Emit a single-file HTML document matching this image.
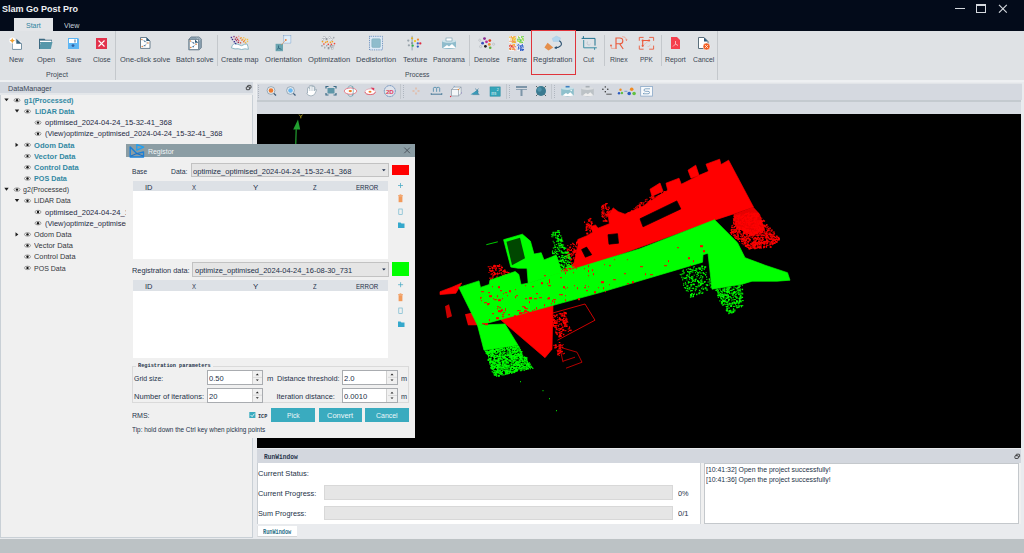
<!DOCTYPE html>
<html><head><meta charset="utf-8">
<style>
*{margin:0;padding:0;box-sizing:border-box}
html,body{width:1024px;height:553px;overflow:hidden;background:#e8eaed;font-family:"Liberation Sans",sans-serif;font-size:7.4px;color:#3b4654;position:relative}
.a{position:absolute}
.t{position:absolute;white-space:nowrap;line-height:1;transform-origin:0 0}
svg{position:absolute;overflow:visible}
.sep{position:absolute;width:1px;background:#c4c8cc}
.lbl{position:absolute;white-space:nowrap;line-height:1;font-size:7.3px;color:#4a5866;top:55px}
.tree{position:absolute;white-space:nowrap;line-height:1;font-size:7.3px}
.g1{color:#3d8fa6;font-weight:bold}
.nv{color:#2a3552}
.g2{color:#3c3f44}
.dl{position:absolute;white-space:nowrap;line-height:1;font-size:7.3px;color:#2f3a4c}
.btn{position:absolute;background:#3aabbf;color:#eef8fa;font-size:7.3px;line-height:13px;text-align:center;height:13px;top:408px}
.spin{position:absolute;background:#fff;border:1px solid #a9acb0;height:15px}
.spin .ar{position:absolute;right:0;top:0;width:10px;height:13px;background:#f0f0f0;border-left:1px solid #d0d0d0}
.mono{font-family:"Liberation Mono",monospace}
</style></head><body>
<!-- title bar -->
<div class="a" style="left:0;top:0;width:1024px;height:31px;background:#030b1a"></div>
<svg style="left:0;top:0" width="1024" height="31">
 <g stroke="#d5d9de" fill="none" stroke-width="1">
  <line x1="955" y1="8.5" x2="965" y2="8.5"/>
  <rect x="976.5" y="4.5" width="9" height="8"/>
  <line x1="976.5" y1="5.5" x2="985.5" y2="5.5"/>
  <line x1="999" y1="4.8" x2="1006.8" y2="12.6" stroke-width="1.15"/>
  <line x1="1006.8" y1="4.8" x2="999" y2="12.6" stroke-width="1.15"/>
 </g>
</svg>
<div class="a" style="left:14px;top:18px;width:39px;height:13px;background:#e3e5e8"></div>

<!-- ribbon -->
<div class="a" style="left:0;top:31px;width:1024px;height:49px;background:#dfe2e5"></div>
<div class="a" style="left:0;top:80.3px;width:1024px;height:2.2px;background:#eef0f2"></div>
<div class="sep" style="left:115px;top:31px;height:49px"></div>
<div class="sep" style="left:217px;top:35px;height:31px"></div>
<div class="sep" style="left:469px;top:35px;height:31px"></div>
<div class="sep" style="left:604px;top:35px;height:31px"></div>
<div class="sep" style="left:661px;top:35px;height:31px"></div>
<div class="sep" style="left:717px;top:31px;height:49px"></div>

<div class="a" style="left:531px;top:30px;width:45px;height:45px;border:1px solid #e0333b"></div>

<svg style="left:0;top:0" width="1024" height="82">
 <!-- New -->
 <path d="M12.5 43 v6.2 h9 v-5.7" fill="#fff" stroke="#56778c" stroke-width="1"/>
 <rect x="12.6" y="41.5" width="8.6" height="7.3" fill="#fff"/>
 <path d="M16.3 38.7 l5.5 5 h-5.5z" fill="#3a6580"/>
 <circle cx="12.3" cy="40.6" r="3" fill="#fff"/>
 <path d="M12.3 37.9 l0.9 1.8 l1.8 0.9 l-1.8 0.9 l-0.9 1.8 l-0.9 -1.8 l-1.8 -0.9 l1.8 -0.9z" fill="#f0a030"/>
 <!-- Open -->
 <path d="M39 38.7 h5.5 l1 1 h6.5 v3 h-13z" fill="#3d6a82"/>
 <rect x="40" y="40.6" width="11.5" height="1.5" fill="#fff"/>
 <path d="M40.8 42 h11.7 l-1.7 7 h-11.8z" fill="#5797aa"/>
 <path d="M39.5 40 v9" stroke="#3d6a82" stroke-width="1"/>
 <!-- Save -->
 <path d="M68 38 h10 l1 1 v10 h-11z" fill="#5db6f4"/>
 <rect x="69" y="39" width="8" height="4" fill="#fff"/>
 <rect x="74.5" y="39.5" width="1" height="3" fill="#4a6a90"/>
 <circle cx="73" cy="45.6" r="1.4" fill="#2f5f9f"/>
 <!-- Close -->
 <rect x="96" y="38" width="11" height="11" fill="#e2324c"/>
 <path d="M98.5 40.5 l6 6 M104.5 40.5 l-6 6" stroke="#fff" stroke-width="1.1"/>
 <!-- One-click solve -->
 <path d="M140.5 37.5 h6 l3.5 3.5 v7.4 h-9.5z" fill="#fff" stroke="#5e7484" stroke-width="0.9"/>
 <path d="M146.3 37.2 l3.8 3.7 h-3.8z" fill="#2f5a78"/>
 <path d="M142 39.6 l2.8 1.8 l3 1.4 l-3.4 2.8 l-2.4 1.1" stroke="#7a9ab0" stroke-width="0.5" fill="none"/>
 <circle cx="141.8" cy="39.5" r="0.75" fill="#f08a40"/><circle cx="148" cy="42.9" r="0.75" fill="#f08a40"/><circle cx="142.2" cy="46.6" r="0.75" fill="#f08a40"/>
 <path d="M144 40.6 l1.8 0.4 l-1 1.3z M143.7 45.8 l1.8 -1.1 l-0.3 1.7z" fill="#2f5a88"/>
 <!-- Batch solve -->
 <path d="M188.8 39.2 l2.3 -2.3 h8 l2.3 2.3 v8.5 l-2.3 2.2 h-10.3z" fill="#8aa0b0" stroke="#5e7484" stroke-width="0.7"/>
 <path d="M196.5 37.5 l3.5 3.5 M198 37.3 l2.8 2.8" stroke="#c8d2da" stroke-width="0.5"/>
 <rect x="189.2" y="39.4" width="9.2" height="10.2" fill="#fff" stroke="#5e7484" stroke-width="0.7"/>
 <path d="M195 39.4 l3.4 3.4 h-3.4z" fill="#2f5a78"/>
 <path d="M190.6 41.2 l2.6 1.6 l3 1.2 l-3.2 2.6 l-2.2 1" stroke="#7a9ab0" stroke-width="0.5" fill="none"/>
 <circle cx="190.4" cy="41.1" r="0.75" fill="#f08a40"/><circle cx="196.2" cy="44.3" r="0.75" fill="#f08a40"/><circle cx="190.6" cy="47.6" r="0.75" fill="#f08a40"/>
 <path d="M192.4 42.2 l1.8 0.4 l-1 1.3z M192.2 46.8 l1.8 -1.1 l-0.3 1.7z" fill="#2f5a88"/>
 <!-- Create map -->
 <path d="M231.3 47.8 q1 -3 2.8 -4.2 q3.5 0.3 7.5 2.1 q3 -1.8 5.4 -1.8 q1.2 2.5 1.4 5.4 q-3.5 -1 -6.8 0.2 q-3.5 -1.2 -6.6 -0.6z" fill="#fff" stroke="#7fb0c0" stroke-width="0.9"/>
 <rect x="230.7" y="36.8" width="1.4" height="1.4" fill="#4a3090"/><rect x="231.8" y="38.8" width="1.4" height="1.4" fill="#3a2a80"/><rect x="233.6" y="41.0" width="1.4" height="1.4" fill="#3a3090"/><rect x="234.9" y="42.8" width="1.4" height="1.4" fill="#3a3a90"/><rect x="233.3" y="35.9" width="1.4" height="1.4" fill="#8a3a7a"/><rect x="234.7" y="38.5" width="1.4" height="1.4" fill="#9a3060"/><rect x="235.8" y="39.9" width="1.4" height="1.4" fill="#a03a70"/><rect x="237.6" y="41.7" width="1.4" height="1.4" fill="#a03050"/><rect x="235.8" y="36.8" width="1.4" height="1.4" fill="#d04a4a"/><rect x="236.9" y="38.6" width="1.4" height="1.4" fill="#d04040"/><rect x="238.0" y="39.9" width="1.4" height="1.4" fill="#e06a70"/><rect x="239.8" y="42.1" width="1.4" height="1.4" fill="#d05040"/><rect x="238.0" y="35.7" width="1.4" height="1.4" fill="#f0a0a0"/><rect x="239.8" y="37.7" width="1.4" height="1.4" fill="#f08a40"/><rect x="241.2" y="39.5" width="1.4" height="1.4" fill="#f08a50"/><rect x="243.0" y="41.0" width="1.4" height="1.4" fill="#f07a40"/><rect x="240.5" y="37.0" width="1.4" height="1.4" fill="#f0b050"/><rect x="241.9" y="38.8" width="1.4" height="1.4" fill="#f0a040"/><rect x="243.8" y="39.9" width="1.4" height="1.4" fill="#f0a030"/><rect x="244.8" y="42.1" width="1.4" height="1.4" fill="#f0b040"/><rect x="243.0" y="37.0" width="1.4" height="1.4" fill="#f5c860"/><rect x="244.8" y="38.5" width="1.4" height="1.4" fill="#f5c050"/><rect x="246.8" y="38.8" width="1.4" height="1.4" fill="#f5c040"/><rect x="246.8" y="40.8" width="1.4" height="1.4" fill="#f5c850"/>
 <!-- Orientation -->
 <rect x="283.6" y="35.6" width="7.2" height="7.6" fill="#e0eefa"/>
 <path d="M283.6 35.6 v7.6 M290.8 35.6 v7.6 M283.6 35.6 h7.2 M283.6 43.2 h7.2" stroke="#3a70b0" stroke-width="0.7" stroke-dasharray="0.8 1.2"/>
 <rect x="275.6" y="43.8" width="7.4" height="7.4" fill="#6aa4b0"/>
 <path d="M278.5 45.5 v2.6 l3 1.3 M278.5 48.1 l-1.8 1.6" stroke="#2a6278" stroke-width="0.8" fill="none"/>
 <path d="M281.3 44.8 l4.4 -4.6" stroke="#f08a40" stroke-width="0.8" stroke-dasharray="0.9 0.4"/>
 <circle cx="285.8" cy="40" r="0.9" fill="#f07a30"/>
 <!-- Optimization -->
 <rect x="323.8" y="36.8" width="1.4" height="1.4" fill="#eef0f2" stroke="#8a9098" stroke-width="0.4"/><rect x="329.0" y="36.8" width="1.4" height="1.4" fill="#eef0f2" stroke="#8a9098" stroke-width="0.4"/><rect x="333.4" y="37.1" width="1.4" height="1.4" fill="#eef0f2" stroke="#8a9098" stroke-width="0.4"/><rect x="322.1" y="38.8" width="1.4" height="1.4" fill="#eef0f2" stroke="#8a9098" stroke-width="0.4"/><rect x="325.9" y="38.5" width="1.4" height="1.4" fill="#eef0f2" stroke="#8a9098" stroke-width="0.4"/><rect x="331.4" y="38.8" width="1.4" height="1.4" fill="#eef0f2" stroke="#8a9098" stroke-width="0.4"/><rect x="321.5" y="45.3" width="1.4" height="1.4" fill="#eef0f2" stroke="#8a9098" stroke-width="0.4"/><rect x="326.3" y="45.3" width="1.4" height="1.4" fill="#eef0f2" stroke="#8a9098" stroke-width="0.4"/><rect x="330.0" y="45.7" width="1.4" height="1.4" fill="#eef0f2" stroke="#8a9098" stroke-width="0.4"/><rect x="332.7" y="45.3" width="1.4" height="1.4" fill="#eef0f2" stroke="#8a9098" stroke-width="0.4"/><rect x="324.2" y="47.0" width="1.4" height="1.4" fill="#eef0f2" stroke="#8a9098" stroke-width="0.4"/><rect x="327.9" y="47.7" width="1.4" height="1.4" fill="#eef0f2" stroke="#8a9098" stroke-width="0.4"/><rect x="331.7" y="47.7" width="1.4" height="1.4" fill="#eef0f2" stroke="#8a9098" stroke-width="0.4"/><circle cx="322.5" cy="41.6" r="0.85" fill="#f5a020"/><circle cx="325.6" cy="42.3" r="0.85" fill="#f5a020"/><circle cx="327.3" cy="41.6" r="0.85" fill="#f5a020"/><circle cx="330.4" cy="42.3" r="0.85" fill="#f5a020"/><circle cx="332.4" cy="41.6" r="0.85" fill="#f5a020"/><circle cx="323.9" cy="44" r="0.85" fill="#ee4a3a"/><circle cx="328.3" cy="44.3" r="0.85" fill="#ee4a3a"/><circle cx="331.4" cy="44.3" r="0.85" fill="#ee4a3a"/><circle cx="334.5" cy="43.6" r="0.85" fill="#ee4a3a"/>
 <!-- Dedistortion -->
 <rect x="369.5" y="36.3" width="13" height="13.6" fill="#dde9f5" stroke="#3a6aa8" stroke-width="0.8" stroke-dasharray="0.8 1"/>
 <rect x="371.8" y="38.8" width="8.6" height="8.6" rx="1" fill="#8fbccc" stroke="#7aa8b8" stroke-width="0.5"/>
 <!-- Texture -->
 <line x1="412.1" y1="35.8" x2="412.1" y2="50.4" stroke="#7d98aa" stroke-width="0.8"/>
 <circle cx="408.3" cy="40.6" r="1.15" fill="#9aa4ac"/><circle cx="408.9" cy="45.3" r="1.15" fill="#9aa4ac"/><circle cx="412.1" cy="38.3" r="1.15" fill="#e0b020"/><circle cx="415" cy="41.1" r="1.15" fill="#f0c818"/><circle cx="418" cy="39.6" r="1.15" fill="#f08a30"/><circle cx="412.1" cy="43.2" r="1.15" fill="#8a98a8"/><circle cx="420.3" cy="43.4" r="1.15" fill="#e02a40"/><circle cx="417.8" cy="43.4" r="1.15" fill="#3a60c8"/><circle cx="412.7" cy="45.7" r="1.15" fill="#30b050"/><circle cx="417.8" cy="46.6" r="1.15" fill="#2a58c0"/>
 <!-- Panorama -->
 <path d="M442 41 q7 -2.5 14 0 v7 q-7 2 -14 0z" fill="#8fbccc"/>
 <ellipse cx="449" cy="41" rx="7" ry="1.8" fill="#cfe3ea"/>
 <rect x="446" y="38" width="6" height="3" fill="#fff" stroke="#5a8aa0" stroke-width="0.5"/>
 <path d="M443 48 l4 -3 l2 1.5 l3 -2.5 l4 4z" fill="#fff"/>
 <!-- Denoise -->
 <g><circle cx="484.5" cy="38.6" r="1.4" fill="#8a2a90"/><circle cx="486.5" cy="41.8" r="1.4" fill="#c02a9a"/><circle cx="482.6" cy="43.2" r="1.4" fill="#3a50c0"/><circle cx="489.8" cy="40.6" r="1.4" fill="#e04020"/><circle cx="489.3" cy="44.4" r="1.4" fill="#f08a30"/><circle cx="485.4" cy="46.3" r="1.4" fill="#222"/><circle cx="490.2" cy="47.8" r="1.3" fill="#60b040"/><circle cx="479.8" cy="40.2" r="1.1" fill="none" stroke="#b0b6bc" stroke-width="0.6"/><circle cx="480.6" cy="46.6" r="1.1" fill="none" stroke="#b0b6bc" stroke-width="0.6"/><circle cx="493.6" cy="44.2" r="1.1" fill="none" stroke="#b0b6bc" stroke-width="0.6"/></g>
 <!-- Frame -->
 <rect x="509" y="36" width="7" height="7" fill="#f4f4f4"/><rect x="510.4" y="39.3" width="1.1" height="1.1" fill="#e8d040"/><rect x="514.5" y="38.8" width="1.1" height="1.1" fill="#f0c030"/><rect x="512.6" y="41.5" width="1.1" height="1.1" fill="#f08030"/><rect x="510.6" y="37.4" width="1.1" height="1.1" fill="#f08030"/><rect x="512.2" y="39.3" width="1.1" height="1.1" fill="#f08030"/><rect x="512.8" y="36.9" width="1.1" height="1.1" fill="#f5a020"/><rect x="514.2" y="39.1" width="1.1" height="1.1" fill="#f0c030"/><rect x="513.0" y="36.4" width="1.1" height="1.1" fill="#f0c030"/><rect x="510.8" y="36.2" width="1.1" height="1.1" fill="#e8d040"/><rect x="511.8" y="40.3" width="1.1" height="1.1" fill="#f08030"/><rect x="513.3" y="41.5" width="1.1" height="1.1" fill="#f08030"/><rect x="513.4" y="39.5" width="1.1" height="1.1" fill="#f5a020"/><rect x="514.3" y="36.6" width="1.1" height="1.1" fill="#f5a020"/><rect x="512.0" y="37.5" width="1.1" height="1.1" fill="#f08030"/><rect x="513.7" y="41.1" width="1.1" height="1.1" fill="#f08030"/><rect x="512.0" y="38.3" width="1.1" height="1.1" fill="#e8d040"/><rect x="512.2" y="38.4" width="1.1" height="1.1" fill="#f5a020"/><rect x="514.4" y="40.1" width="1.1" height="1.1" fill="#f0c030"/><rect x="514.1" y="41.9" width="1.1" height="1.1" fill="#f5a020"/><rect x="513.2" y="38.0" width="1.1" height="1.1" fill="#f0c030"/><rect x="513.3" y="37.3" width="1.1" height="1.1" fill="#e8d040"/><rect x="510.7" y="36.4" width="1.1" height="1.1" fill="#f08030"/><rect x="509.5" y="40.8" width="1.1" height="1.1" fill="#f08030"/><rect x="514.4" y="36.1" width="1.1" height="1.1" fill="#f08030"/><rect x="513.6" y="41.2" width="1.1" height="1.1" fill="#f0c030"/><rect x="512.6" y="40.6" width="1.1" height="1.1" fill="#f08030"/><rect x="513.3" y="38.0" width="1.1" height="1.1" fill="#e8d040"/><rect x="512.0" y="42.0" width="1.1" height="1.1" fill="#e8d040"/><rect x="509.0" y="36.6" width="1.1" height="1.1" fill="#f0c030"/><rect x="514.7" y="41.8" width="1.1" height="1.1" fill="#e8d040"/><rect x="512.7" y="36.9" width="1.1" height="1.1" fill="#f0c030"/><rect x="514.9" y="38.0" width="1.1" height="1.1" fill="#e8d040"/><rect x="514.8" y="41.4" width="1.1" height="1.1" fill="#f08030"/><rect x="511.3" y="41.2" width="1.1" height="1.1" fill="#f08030"/><rect x="517" y="36" width="7" height="7" fill="#f4f4f4"/><rect x="520.9" y="39.6" width="1.1" height="1.1" fill="#70d040"/><rect x="520.7" y="41.6" width="1.1" height="1.1" fill="#40c060"/><rect x="519.6" y="40.3" width="1.1" height="1.1" fill="#a0e040"/><rect x="522.6" y="38.6" width="1.1" height="1.1" fill="#40c060"/><rect x="520.1" y="39.3" width="1.1" height="1.1" fill="#70d040"/><rect x="521.7" y="41.9" width="1.1" height="1.1" fill="#40c060"/><rect x="517.1" y="39.7" width="1.1" height="1.1" fill="#a0e040"/><rect x="517.4" y="39.8" width="1.1" height="1.1" fill="#c0e060"/><rect x="519.1" y="41.5" width="1.1" height="1.1" fill="#40c060"/><rect x="521.4" y="36.1" width="1.1" height="1.1" fill="#70d040"/><rect x="522.7" y="36.1" width="1.1" height="1.1" fill="#40c060"/><rect x="518.5" y="38.7" width="1.1" height="1.1" fill="#40c060"/><rect x="518.1" y="37.1" width="1.1" height="1.1" fill="#40c060"/><rect x="522.1" y="37.6" width="1.1" height="1.1" fill="#c0e060"/><rect x="517.6" y="40.9" width="1.1" height="1.1" fill="#a0e040"/><rect x="518.9" y="37.3" width="1.1" height="1.1" fill="#40c060"/><rect x="518.4" y="37.1" width="1.1" height="1.1" fill="#c0e060"/><rect x="520.9" y="36.6" width="1.1" height="1.1" fill="#40c060"/><rect x="522.7" y="40.0" width="1.1" height="1.1" fill="#a0e040"/><rect x="519.6" y="41.1" width="1.1" height="1.1" fill="#a0e040"/><rect x="517.5" y="40.5" width="1.1" height="1.1" fill="#a0e040"/><rect x="522.3" y="38.7" width="1.1" height="1.1" fill="#a0e040"/><rect x="521.7" y="36.2" width="1.1" height="1.1" fill="#a0e040"/><rect x="518.9" y="41.0" width="1.1" height="1.1" fill="#a0e040"/><rect x="522.2" y="38.0" width="1.1" height="1.1" fill="#70d040"/><rect x="521.8" y="38.1" width="1.1" height="1.1" fill="#a0e040"/><rect x="519.5" y="39.1" width="1.1" height="1.1" fill="#40c060"/><rect x="519.8" y="39.8" width="1.1" height="1.1" fill="#40c060"/><rect x="519.5" y="38.5" width="1.1" height="1.1" fill="#c0e060"/><rect x="517.9" y="36.0" width="1.1" height="1.1" fill="#c0e060"/><rect x="520.4" y="41.9" width="1.1" height="1.1" fill="#a0e040"/><rect x="517.2" y="38.7" width="1.1" height="1.1" fill="#40c060"/><rect x="520.3" y="41.3" width="1.1" height="1.1" fill="#70d040"/><rect x="522.1" y="41.8" width="1.1" height="1.1" fill="#70d040"/><rect x="509" y="44" width="7" height="7" fill="#f4f4f4"/><rect x="513.9" y="44.3" width="1.1" height="1.1" fill="#f08a30"/><rect x="514.4" y="49.4" width="1.1" height="1.1" fill="#f06040"/><rect x="509.1" y="48.5" width="1.1" height="1.1" fill="#f08a30"/><rect x="512.0" y="45.4" width="1.1" height="1.1" fill="#f06040"/><rect x="512.1" y="46.5" width="1.1" height="1.1" fill="#f06040"/><rect x="511.0" y="45.5" width="1.1" height="1.1" fill="#f5b040"/><rect x="513.9" y="44.4" width="1.1" height="1.1" fill="#f08a30"/><rect x="510.2" y="47.2" width="1.1" height="1.1" fill="#f06040"/><rect x="510.0" y="48.8" width="1.1" height="1.1" fill="#f08a30"/><rect x="513.9" y="44.0" width="1.1" height="1.1" fill="#f5b040"/><rect x="509.3" y="45.6" width="1.1" height="1.1" fill="#e03a3a"/><rect x="512.7" y="47.1" width="1.1" height="1.1" fill="#f06040"/><rect x="511.8" y="48.7" width="1.1" height="1.1" fill="#f06040"/><rect x="514.1" y="48.7" width="1.1" height="1.1" fill="#f06040"/><rect x="509.7" y="44.4" width="1.1" height="1.1" fill="#f06040"/><rect x="514.1" y="44.5" width="1.1" height="1.1" fill="#f5b040"/><rect x="510.9" y="45.9" width="1.1" height="1.1" fill="#e03a3a"/><rect x="511.3" y="46.3" width="1.1" height="1.1" fill="#e03a3a"/><rect x="511.2" y="45.1" width="1.1" height="1.1" fill="#e03a3a"/><rect x="511.6" y="44.8" width="1.1" height="1.1" fill="#f06040"/><rect x="513.3" y="46.3" width="1.1" height="1.1" fill="#f06040"/><rect x="512.4" y="44.3" width="1.1" height="1.1" fill="#f5b040"/><rect x="512.6" y="48.7" width="1.1" height="1.1" fill="#f5b040"/><rect x="512.8" y="44.3" width="1.1" height="1.1" fill="#f5b040"/><rect x="509.3" y="47.8" width="1.1" height="1.1" fill="#e03a3a"/><rect x="511.5" y="48.2" width="1.1" height="1.1" fill="#f5b040"/><rect x="509.1" y="45.3" width="1.1" height="1.1" fill="#e03a3a"/><rect x="513.2" y="44.4" width="1.1" height="1.1" fill="#f5b040"/><rect x="510.3" y="44.8" width="1.1" height="1.1" fill="#f06040"/><rect x="514.6" y="46.2" width="1.1" height="1.1" fill="#e03a3a"/><rect x="509.7" y="48.1" width="1.1" height="1.1" fill="#f5b040"/><rect x="513.0" y="48.4" width="1.1" height="1.1" fill="#f06040"/><rect x="513.9" y="48.3" width="1.1" height="1.1" fill="#f5b040"/><rect x="509.9" y="48.6" width="1.1" height="1.1" fill="#f06040"/><rect x="517" y="44" width="7" height="7" fill="#f4f4f4"/><rect x="520.2" y="47.4" width="1.1" height="1.1" fill="#3a60c8"/><rect x="518.1" y="44.1" width="1.1" height="1.1" fill="#3a70d0"/><rect x="517.2" y="44.7" width="1.1" height="1.1" fill="#3a60c8"/><rect x="522.0" y="49.7" width="1.1" height="1.1" fill="#5a90e0"/><rect x="521.8" y="44.2" width="1.1" height="1.1" fill="#2a50c0"/><rect x="517.6" y="48.5" width="1.1" height="1.1" fill="#3a70d0"/><rect x="520.3" y="49.2" width="1.1" height="1.1" fill="#2a50c0"/><rect x="522.0" y="45.5" width="1.1" height="1.1" fill="#2a50c0"/><rect x="520.9" y="46.7" width="1.1" height="1.1" fill="#3a60c8"/><rect x="518.5" y="47.6" width="1.1" height="1.1" fill="#5a90e0"/><rect x="520.3" y="49.8" width="1.1" height="1.1" fill="#3a60c8"/><rect x="520.0" y="49.8" width="1.1" height="1.1" fill="#3a60c8"/><rect x="522.1" y="49.8" width="1.1" height="1.1" fill="#3a60c8"/><rect x="521.1" y="48.5" width="1.1" height="1.1" fill="#3a60c8"/><rect x="517.9" y="46.4" width="1.1" height="1.1" fill="#2a50c0"/><rect x="518.0" y="47.0" width="1.1" height="1.1" fill="#3a60c8"/><rect x="522.5" y="47.1" width="1.1" height="1.1" fill="#3a60c8"/><rect x="520.5" y="49.1" width="1.1" height="1.1" fill="#2a50c0"/><rect x="518.6" y="45.2" width="1.1" height="1.1" fill="#5a90e0"/><rect x="522.6" y="49.1" width="1.1" height="1.1" fill="#5a90e0"/><rect x="521.0" y="49.1" width="1.1" height="1.1" fill="#5a90e0"/><rect x="522.3" y="45.8" width="1.1" height="1.1" fill="#5a90e0"/><rect x="519.9" y="46.3" width="1.1" height="1.1" fill="#2a50c0"/><rect x="520.4" y="45.4" width="1.1" height="1.1" fill="#3a60c8"/><rect x="521.6" y="44.9" width="1.1" height="1.1" fill="#3a60c8"/><rect x="521.2" y="45.2" width="1.1" height="1.1" fill="#3a70d0"/><rect x="519.9" y="48.3" width="1.1" height="1.1" fill="#3a60c8"/><rect x="521.7" y="49.3" width="1.1" height="1.1" fill="#3a70d0"/><rect x="519.8" y="45.4" width="1.1" height="1.1" fill="#2a50c0"/><rect x="520.9" y="48.7" width="1.1" height="1.1" fill="#3a70d0"/><rect x="522.8" y="49.1" width="1.1" height="1.1" fill="#2a50c0"/><rect x="522.3" y="48.7" width="1.1" height="1.1" fill="#2a50c0"/><rect x="518.1" y="48.2" width="1.1" height="1.1" fill="#3a70d0"/><rect x="522.4" y="45.5" width="1.1" height="1.1" fill="#3a70d0"/>
 <!-- Registration -->
 <path d="M552.3 38.4 l4.1 -2.3 l4.1 1.8 l-0.9 3.5 h-6.4z" fill="#b3d6ee" stroke="#9cc4e0" stroke-width="0.4"/>
 <path d="M547.6 42.8 l5.6 4.7 l-4.7 3 l-4.1 -3z" fill="#e58f4c"/>
 <path d="M559.3 40.8 q3.3 2.5 1.5 4.8 q-1.8 2 -5.6 2.3" stroke="#2a4f6e" stroke-width="1.1" fill="none"/>
 <path d="M554 47.9 l2.6 -2 l0.2 3.2z" fill="#2a4f6e"/>
 <!-- Cut -->
 <rect x="585" y="39.6" width="7.7" height="7" fill="#dde3e8"/>
 <path d="M583.4 36.1 v2.5 M581.6 38.4 h13.4 v7.2" stroke="#1f7390" stroke-width="1" fill="none"/>
 <path d="M583.7 40 v7.8 h13.1 M594.6 47.8 v2" stroke="#3d8fa6" stroke-width="1" fill="none"/>
 <path d="M587.5 41.5 q-1 2 0.5 3.5 q1.5 0.5 2.5 -1" stroke="#a8b0b8" stroke-width="0.5" fill="none"/>
 <!-- Rinex -->
 <path d="M616 49 v-11 h3.6 q3.2 0 3.2 2.9 q0 2.8 -3.2 2.8 h-3.6 M619.6 43.7 l3.6 5.3" stroke="#ea5a3c" stroke-width="1.15" fill="none"/>
 <circle cx="611" cy="45.5" r="0.9" fill="#ea5a3c"/>
 <path d="M611.3 46 v2.4 h4" stroke="#ee8a70" stroke-width="0.6" fill="none"/>
 <path d="M622.2 36.6 q3.5 0 4.2 2.6" stroke="#ee8a70" stroke-width="0.6" fill="none"/>
 <path d="M625.3 39.4 h2.2 l-1.1 1.6z" fill="#ea5a3c"/>
 <!-- PPK -->
 <path d="M639.3 40.8 v-3.4 h4.3 M649.2 37.4 h4.4 v3.4 M653.6 45.6 v3.6 h-4.4 M643.6 49.2 h-4.3 v-3.6" stroke="#ea5a3c" stroke-width="0.9" fill="none"/>
 <path d="M642.7 40.5 h6.4 M642.7 40.5 v5.3" stroke="#ea5a3c" stroke-width="1.1" fill="none"/>
 <path d="M643 45.5 l6 -5 M647.5 46 l1 1 l2 -2.5" stroke="#f0a090" stroke-width="0.5" fill="none"/>
 <circle cx="642.7" cy="40.5" r="1.1" fill="#ea5a3c"/><circle cx="649.1" cy="40.5" r="1.1" fill="#ea5a3c"/><circle cx="642.7" cy="45.8" r="1.1" fill="#ea5a3c"/>
 <!-- Report -->
 <path d="M671 37 h6 l3 3 v9 h-9z" fill="#f5404e"/>
 <path d="M675.5 41 v3 l-2.5 2.5 M675.5 44 l2.5 1.5" stroke="#fff" stroke-width="0.6" fill="none"/>
 <!-- Cancel -->
 <path d="M698.5 37.5 h5.5 l4 4 v7 h-9.5z" fill="#fff" stroke="#5b6f7c"/>
 <path d="M704 37.5 l4 4 h-4z" fill="#2f5a78"/>
 <circle cx="706.5" cy="46.5" r="3.5" fill="#f25d20" stroke="#fff" stroke-width="0.5"/>
 <path d="M705 45 l3 3 M708 45 l-3 3" stroke="#fff" stroke-width="0.7"/>
</svg>
<!-- left panel -->
<div class="a" style="left:0;top:81.8px;width:253px;height:11.6px;background:#d3d8df"></div>
<div class="a" style="left:0;top:93.4px;width:253px;height:1.2px;background:#e4e7ea"></div>
<div class="a" style="left:0;top:94.5px;width:253px;height:443px;background:#f0f0f0;border:1px solid #c9d0d6;border-top:none"></div>
<svg style="left:0;top:0" width="253" height="300">
<rect x="247.6" y="85.4" width="3.4" height="2.8" rx="0.6" fill="#d3d8df" stroke="#222" stroke-width="0.8"/><rect x="246.3" y="86.9" width="3.4" height="2.8" rx="0.6" fill="#d3d8df" stroke="#222" stroke-width="0.8"/>
<path d="M4.3 98.4 h4.4 l-2.2 2.9z" fill="#1e1e1e"/>
<ellipse cx="17.0" cy="100.2" rx="3" ry="1.7" fill="#fff" stroke="#555" stroke-width="0.6"/><circle cx="17.0" cy="100.2" r="1.2" fill="#111"/>
<path d="M14.8 109.6 h4.4 l-2.2 2.9z" fill="#1e1e1e"/>
<ellipse cx="27.5" cy="111.4" rx="3" ry="1.7" fill="#fff" stroke="#555" stroke-width="0.6"/><circle cx="27.5" cy="111.4" r="1.2" fill="#111"/>
<ellipse cx="38.0" cy="122.6" rx="3" ry="1.7" fill="#fff" stroke="#555" stroke-width="0.6"/><circle cx="38.0" cy="122.6" r="1.2" fill="#111"/>
<ellipse cx="38.0" cy="133.7" rx="3" ry="1.7" fill="#fff" stroke="#555" stroke-width="0.6"/><circle cx="38.0" cy="133.7" r="1.2" fill="#111"/>
<path d="M15.5 142.7 v4.4 l2.9 -2.2z" fill="#1e1e1e"/>
<ellipse cx="27.5" cy="144.9" rx="3" ry="1.7" fill="#fff" stroke="#555" stroke-width="0.6"/><circle cx="27.5" cy="144.9" r="1.2" fill="#111"/>
<ellipse cx="27.5" cy="156.1" rx="3" ry="1.7" fill="#fff" stroke="#555" stroke-width="0.6"/><circle cx="27.5" cy="156.1" r="1.2" fill="#111"/>
<ellipse cx="27.5" cy="167.3" rx="3" ry="1.7" fill="#fff" stroke="#555" stroke-width="0.6"/><circle cx="27.5" cy="167.3" r="1.2" fill="#111"/>
<ellipse cx="27.5" cy="178.5" rx="3" ry="1.7" fill="#fff" stroke="#555" stroke-width="0.6"/><circle cx="27.5" cy="178.5" r="1.2" fill="#111"/>
<path d="M4.3 187.8 h4.4 l-2.2 2.9z" fill="#1e1e1e"/>
<ellipse cx="17.0" cy="189.6" rx="3" ry="1.7" fill="#fff" stroke="#555" stroke-width="0.6"/><circle cx="17.0" cy="189.6" r="1.2" fill="#111"/>
<path d="M14.8 199.0 h4.4 l-2.2 2.9z" fill="#1e1e1e"/>
<ellipse cx="27.5" cy="200.8" rx="3" ry="1.7" fill="#fff" stroke="#555" stroke-width="0.6"/><circle cx="27.5" cy="200.8" r="1.2" fill="#111"/>
<ellipse cx="38.0" cy="212.0" rx="3" ry="1.7" fill="#fff" stroke="#555" stroke-width="0.6"/><circle cx="38.0" cy="212.0" r="1.2" fill="#111"/>
<ellipse cx="38.0" cy="223.2" rx="3" ry="1.7" fill="#fff" stroke="#555" stroke-width="0.6"/><circle cx="38.0" cy="223.2" r="1.2" fill="#111"/>
<path d="M15.5 232.2 v4.4 l2.9 -2.2z" fill="#1e1e1e"/>
<ellipse cx="27.5" cy="234.4" rx="3" ry="1.7" fill="#fff" stroke="#555" stroke-width="0.6"/><circle cx="27.5" cy="234.4" r="1.2" fill="#111"/>
<ellipse cx="27.5" cy="245.5" rx="3" ry="1.7" fill="#fff" stroke="#555" stroke-width="0.6"/><circle cx="27.5" cy="245.5" r="1.2" fill="#111"/>
<ellipse cx="27.5" cy="256.7" rx="3" ry="1.7" fill="#fff" stroke="#555" stroke-width="0.6"/><circle cx="27.5" cy="256.7" r="1.2" fill="#111"/>
<ellipse cx="27.5" cy="267.9" rx="3" ry="1.7" fill="#fff" stroke="#555" stroke-width="0.6"/><circle cx="27.5" cy="267.9" r="1.2" fill="#111"/>
</svg>
<!-- view toolbar -->
<div class="a" style="left:253px;top:82px;width:771px;height:456px;background:#e9ebee"></div>
<div class="a" style="left:256px;top:82.5px;width:766px;height:17.5px;background:#d5d9e0;border-top:1px solid #e2e5e8;border-left:1px solid #eef0f2"></div>
<div class="a" style="left:257px;top:100px;width:764px;height:1.5px;background:#c4cacf"></div>
<div class="a" style="left:257px;top:101.5px;width:764px;height:12.3px;background:#d8dce2"></div>
<div class="a" style="left:257px;top:113.8px;width:764px;height:334px;background:#000"></div>
<svg style="left:0;top:0" width="1024" height="113">
 <g fill="#9aa3ad"><rect x="258" y="85" width="0.8" height="0.8"/><rect x="258" y="87" width="0.8" height="0.8"/><rect x="258" y="89" width="0.8" height="0.8"/><rect x="258" y="91" width="0.8" height="0.8"/><rect x="258" y="93" width="0.8" height="0.8"/><rect x="258" y="95" width="0.8" height="0.8"/><rect x="258" y="97" width="0.8" height="0.8"/></g>
 <g fill="#9aa3ad"><rect x="403" y="85" width="0.8" height="0.8"/><rect x="403" y="87" width="0.8" height="0.8"/><rect x="403" y="89" width="0.8" height="0.8"/><rect x="403" y="91" width="0.8" height="0.8"/><rect x="403" y="93" width="0.8" height="0.8"/><rect x="403" y="95" width="0.8" height="0.8"/><rect x="403" y="97" width="0.8" height="0.8"/></g>
 <g fill="#9aa3ad"><rect x="509" y="85" width="0.8" height="0.8"/><rect x="509" y="87" width="0.8" height="0.8"/><rect x="509" y="89" width="0.8" height="0.8"/><rect x="509" y="91" width="0.8" height="0.8"/><rect x="509" y="93" width="0.8" height="0.8"/><rect x="509" y="95" width="0.8" height="0.8"/><rect x="509" y="97" width="0.8" height="0.8"/></g>
 <g fill="#9aa3ad"><rect x="554" y="85" width="0.8" height="0.8"/><rect x="554" y="87" width="0.8" height="0.8"/><rect x="554" y="89" width="0.8" height="0.8"/><rect x="554" y="91" width="0.8" height="0.8"/><rect x="554" y="93" width="0.8" height="0.8"/><rect x="554" y="95" width="0.8" height="0.8"/><rect x="554" y="97" width="0.8" height="0.8"/></g>
 <line x1="400.5" y1="84" x2="400.5" y2="99" stroke="#c2c7cd"/>
 <line x1="506.5" y1="84" x2="506.5" y2="99" stroke="#c2c7cd"/>
 <line x1="551.5" y1="84" x2="551.5" y2="99" stroke="#c2c7cd"/>
 <!-- zoom in -->
 <circle cx="271" cy="90.5" r="3.9" fill="#e8ecef" stroke="#7890a2" stroke-width="0.7"/>
 <circle cx="271" cy="90.5" r="2.3" fill="#ee7a30"/>
 <line x1="273.8" y1="93.3" x2="276" y2="95.5" stroke="#3a5a78" stroke-width="1.2"/>
 <!-- zoom out -->
 <circle cx="290.5" cy="90.5" r="3.9" fill="#e8ecef" stroke="#7890a2" stroke-width="0.7"/>
 <circle cx="290.5" cy="90.5" r="2.3" fill="#6ab8f2"/>
 <line x1="293.3" y1="93.3" x2="295.5" y2="95.5" stroke="#3a5a78" stroke-width="1.2"/>
 <!-- hand -->
 <path d="M307.5 93 v-4.5 q0 -1 0.9 -1 q0.9 0 0.9 1 v-2 q0 -1 0.9 -1 q0.9 0 0.9 1 v-0.3 q0 -1 0.9 -1 q0.9 0 0.9 1 v0.8 q0 -1 0.9 -0.9 q0.9 0.1 0.9 1 v3.5 l1 -1 q0.8 -0.5 1 0.3 l-1.8 3.6 q-1 2.3 -3.5 2.3 h-1 q-2.7 0 -3.6 -2.6z" fill="#fff" stroke="#7a90a0" stroke-width="0.6"/>
 <path d="M309.3 88 v3 M311.1 86.5 v4.5 M312.9 86 v5 M314.7 87 v4" stroke="#8aa0b0" stroke-width="0.5"/>
 <!-- fit -->
 <path d="M326 88.5 v-2 h2.5 M333.5 86.5 h2.5 v2 M336 93 v2 h-2.5 M328.5 95 h-2.5 v-2" stroke="#3a6a85" stroke-width="1.2" fill="none"/>
 <rect x="327.5" y="88" width="7" height="5.5" fill="#5d96a8"/>
 <!-- orbit -->
 <ellipse cx="350.5" cy="91.1" rx="3.2" ry="5.5" fill="none" stroke="#5a9aa8" stroke-width="0.6"/>
 <ellipse cx="350.5" cy="91.1" rx="6.2" ry="3.1" fill="#fff" fill-opacity="0.9" stroke="#e85a6a" stroke-width="0.7"/>
 <path d="M352.6 86 q1.6 5 0 10.2" stroke="#5a9aa8" stroke-width="0.6" fill="none"/>
 <ellipse cx="350.3" cy="91.1" rx="1.7" ry="1.1" fill="#f07a20"/>
 <!-- rotate -->
 <ellipse cx="370.2" cy="91.7" rx="5.2" ry="2.8" fill="#fff" stroke="#e88a98" stroke-width="0.6"/>
 <path d="M365 92 q0.5 2.6 5.2 2.6 q4.7 0 5.2 -2.6" stroke="#e05a6a" stroke-width="0.8" fill="none"/>
 <ellipse cx="370" cy="91.7" rx="1.5" ry="1" fill="#f07a20"/>
 <path d="M370.6 87.5 l3.8 0.6 l-0.6 2.6z" fill="#e03a5a"/>
 <!-- 2D -->
 <circle cx="389.8" cy="91.1" r="5.5" fill="#dfe3ea" stroke="#4a78b0" stroke-width="0.8" stroke-dasharray="1.2 0.5"/>
 <text x="385.9" y="93.8" font-family="Liberation Sans" font-size="6.2" font-weight="bold" fill="#e0405a">2D</text>
 <!-- cross -->
 <path d="M416 87.5 v2 M416 92.5 v2 M412.5 91 h2 M417.5 91 h2" stroke="#f0a070" stroke-width="0.8"/>
 <!-- m measure -->
 <path d="M433.4 91.8 v-3.6 q0 -0.9 1.6 -0.9 q1.6 0 1.6 0.9 v3.6 M436.6 88.2 q0 -0.9 1.6 -0.9 q1.5 0 1.5 0.9 v3.6" stroke="#4a88a8" stroke-width="0.8" fill="none"/>
 <path d="M431 94.2 h11 M431.2 93.2 v1.5 M441.8 93.2 v1.5" stroke="#4a7a98" stroke-width="1"/>
 <!-- cube -->
 <path d="M451.5 89.5 l2.6 -2.4 h7 v6.4 l-2.6 2.4 h-7z M451.5 89.5 h7 v6.4 M458.5 89.5 l2.6 -2.4" fill="#f4f6f8" stroke="#7a8a98" stroke-width="0.6"/>
 <circle cx="458.5" cy="89.5" r="0.8" fill="#f08a30"/>
 <circle cx="450.6" cy="96.5" r="0.7" fill="#e03040"/>
 <path d="M454.2 86.9 v-1" stroke="#4a90d0" stroke-width="0.7"/>
 <path d="M461.2 93 h0.8" stroke="#7a5ac0" stroke-width="0.7"/>
 <!-- angle -->
 <path d="M470.5 94.6 l7.6 -5.2 v5.2z" fill="#3a9ab8"/>
 <path d="M472.5 94.6 h7 M475 88.5 l3.5 3 M478.5 88.5 l-3 3.5 M477 91.8 q1.5 1 1.5 2.8" stroke="#3a7a98" stroke-width="0.6" fill="none"/>
 <!-- m2 box -->
 <rect x="490" y="86.9" width="10.2" height="9.3" fill="#34a4b8" stroke="#2a8aa0" stroke-width="0.5"/>
 <text x="491.3" y="94.6" font-family="Liberation Sans" font-size="6" fill="#e8f6f8">m</text>
 <text x="496.8" y="90.8" font-family="Liberation Sans" font-size="3.5" fill="#e8f6f8">2</text>
 <!-- T -->
 <path d="M516 86 h11 v2 h-11z" fill="#7d95a8"/>
 <path d="M516 89 h11 v0.8 h-11z" fill="#7d95a8"/>
 <rect x="520.5" y="89" width="2" height="7" fill="#7d95a8"/>
 <!-- sphere -->
 <circle cx="541" cy="91" r="5" fill="#3a7a90"/>
 <circle cx="539.5" cy="89.5" r="2.2" fill="#5aa0b8" opacity="0.7"/>
 <path d="M536 86 l1.5 1.5 M546 86 l-1.5 1.5 M536 96 l1.5 -1.5 M546 96 l-1.5 -1.5" stroke="#344" stroke-width="0.8"/>
 <!-- panorama -->
 <path d="M561.2 88.5 q6.3 -1.6 12.6 0 v6.8 q-6.3 2.2 -12.6 0z" fill="#8ec0cc"/>
 <ellipse cx="567.5" cy="88.5" rx="6.3" ry="1.5" fill="#c5e0e8"/>
 <rect x="565.6" y="85.9" width="4" height="1.6" fill="#3a80c0"/>
 <path d="M562.5 95.5 l3.5 -2.5 l1.8 1.2 l2.5 -2 l3.2 3.2 q-5.5 1.2 -11 0z" fill="#fff"/>
 <circle cx="571.2" cy="90.5" r="0.7" fill="#fff"/>
 <!-- grey panorama -->
 <path d="M581.2 88.5 q6.3 -1.6 12.6 0 v6.8 q-6.3 2.2 -12.6 0z" fill="#bcc2c6"/>
 <ellipse cx="587.5" cy="88.5" rx="6.3" ry="1.5" fill="#dadde0"/>
 <rect x="585.6" y="85.9" width="4" height="1.6" fill="#a8aeb4"/>
 <path d="M582.5 95.5 l3.5 -2.5 l1.8 1.2 l2.5 -2 l3.2 3.2 q-5.5 1.2 -11 0z" fill="#eeeeee"/>
 <!-- points line -->
 <circle cx="605.3" cy="86.9" r="0.7" fill="#222"/><circle cx="602.9" cy="89.3" r="0.7" fill="#222"/><circle cx="607.8" cy="89.3" r="0.7" fill="#222"/><circle cx="605.3" cy="91.8" r="0.7" fill="#222"/>
 <path d="M606.3 94.2 h5.4" stroke="#333" stroke-width="0.8"/>
 <!-- color dots -->
 <circle cx="620.5" cy="89.8" r="1.2" fill="#f08a20"/><circle cx="619" cy="93.2" r="1.2" fill="#2a5ac0"/><circle cx="621.9" cy="93" r="1.2" fill="#60c040"/>
 <path d="M624.4 91.3 h2.9" stroke="#3a70c0" stroke-width="0.6"/>
 <circle cx="631.7" cy="89.3" r="1.8" fill="#f08a20"/><circle cx="629.2" cy="93.5" r="1.8" fill="#2a5ac0"/><circle cx="634.1" cy="93.5" r="1.8" fill="#60c040"/>
 <!-- box arrows -->
 <rect x="640.7" y="86.5" width="11.8" height="9.6" fill="#f8fafc" stroke="#8aa8c8" stroke-width="0.8"/>
 <path d="M650 88.8 h-4.5 q-1.5 0 -1.5 1.3 q0 1.2 1.5 1.2 h2.5 q1.5 0 1.5 1.2 q0 1.3 -1.5 1.3 h-4.8 l1 -1" stroke="#3a70a0" stroke-width="0.6" fill="none"/>
 </svg>
<svg style="left:257px;top:113.8px" width="764" height="334" viewBox="257 113.8 764 334">
<path d="M299.1 114.4 l1.7 1.9 l1.7 -1.9 M300.8 116.3 v1.8" stroke="#d4c020" stroke-width="0.8" fill="none"/>
<path d="M298 119.2 l-4.8 10.2 h7z" fill="#22a030"/>
<path d="M295.6 129 h1.2 l-0.6 20 h-1.2z" fill="#22a030"/>
<polygon points="547.0,278.0 572.0,265.0 574.0,263.0 578.0,245.0 577.8,239.3 587.0,235.5 593.0,231.7 590.4,226.6 595.5,224.7 598.0,228.0 609.4,223.5 608.2,215.3 613.2,207.7 618.3,211.5 625.0,214.0 642.8,206.0 664.0,192.0 681.8,183.8 699.7,174.9 711.6,169.9 728.6,160.0 753.4,206.7 733.5,213.7 715.6,219.6 560.0,276.0" fill="#ff0000" stroke="#ff0000" stroke-width="0.7"/>
<polygon points="581.6,249.4 586.6,246.9 591.7,254.5 585.4,257.0" fill="#000" stroke="#000" stroke-width="0.7"/>
<polygon points="650.0,189.0 660.0,182.8 663.0,191.0 652.0,196.0" fill="#ff0000" stroke="#ff0000" stroke-width="0.7"/>
<polygon points="666.0,183.0 679.0,178.0 682.0,186.0 668.0,191.0" fill="#ff0000" stroke="#ff0000" stroke-width="0.7"/>
<polygon points="688.0,170.0 695.7,165.0 699.0,175.0 691.0,178.0" fill="#ff0000" stroke="#ff0000" stroke-width="0.7"/>
<polygon points="706.0,164.0 719.6,159.0 722.0,168.0 709.0,172.0" fill="#ff0000" stroke="#ff0000" stroke-width="0.7"/>
<g fill="#ff0000"><rect x="605.3" y="213.5" width="2" height="1"/><rect x="605.9" y="214.0" width="1" height="1.5"/><rect x="605.5" y="214.5" width="1" height="1"/><rect x="605.2" y="205.4" width="1" height="1.5"/><rect x="607.4" y="214.5" width="1" height="1.5"/><rect x="601.2" y="206.3" width="1" height="1.5"/><rect x="605.2" y="218.9" width="1" height="1.5"/><rect x="601.5" y="215.3" width="2" height="1.5"/><rect x="608.0" y="208.7" width="1" height="1.5"/><rect x="603.6" y="204.0" width="1" height="1"/><rect x="601.7" y="208.2" width="1" height="1"/><rect x="602.8" y="220.3" width="2" height="1"/><rect x="608.7" y="207.8" width="1" height="1"/><rect x="603.2" y="204.6" width="1" height="1"/><rect x="606.4" y="211.3" width="1" height="1.5"/><rect x="608.6" y="210.7" width="2" height="1"/><rect x="610.7" y="214.1" width="1" height="1"/><rect x="606.9" y="213.8" width="1" height="1"/><rect x="602.8" y="207.6" width="1.5" height="1"/><rect x="604.6" y="204.0" width="1" height="1.5"/><rect x="604.4" y="214.7" width="1" height="1.5"/><rect x="605.6" y="213.7" width="2" height="1"/><rect x="607.1" y="208.6" width="1" height="1.5"/><rect x="603.2" y="206.3" width="1" height="1.5"/><rect x="606.9" y="210.8" width="1" height="1"/><rect x="603.1" y="216.3" width="1.5" height="1"/><rect x="609.2" y="214.2" width="1.5" height="1.5"/><rect x="602.4" y="216.6" width="1" height="1"/><rect x="603.0" y="213.5" width="1" height="1"/><rect x="602.8" y="220.3" width="1" height="1"/><rect x="603.4" y="211.2" width="1" height="1"/><rect x="602.4" y="209.8" width="1" height="1"/><rect x="604.4" y="219.9" width="1.5" height="1.5"/><rect x="608.2" y="212.7" width="1" height="1.5"/><rect x="610.1" y="216.2" width="1" height="1"/><rect x="601.3" y="208.6" width="1" height="1"/><rect x="601.4" y="213.2" width="1" height="1.5"/><rect x="601.5" y="211.8" width="1" height="1"/><rect x="605.8" y="202.9" width="2" height="1"/><rect x="606.7" y="214.4" width="1" height="1"/><rect x="609.7" y="216.7" width="2" height="1.5"/><rect x="607.8" y="211.5" width="2" height="1.5"/><rect x="605.6" y="207.1" width="1" height="1"/><rect x="608.7" y="215.4" width="2" height="1"/><rect x="602.1" y="214.5" width="1" height="1"/><rect x="607.5" y="211.2" width="1" height="1"/><rect x="604.8" y="207.5" width="2" height="1"/><rect x="609.8" y="210.1" width="1.5" height="1"/><rect x="602.0" y="212.2" width="1" height="1.5"/><rect x="605.5" y="220.6" width="2" height="1"/><rect x="607.1" y="212.2" width="1.5" height="1.5"/><rect x="605.3" y="204.0" width="1" height="1"/><rect x="608.0" y="213.7" width="1.5" height="1.5"/><rect x="602.0" y="211.4" width="1" height="1"/><rect x="603.1" y="205.3" width="1" height="1.5"/><rect x="601.8" y="204.7" width="1.5" height="1"/><rect x="607.7" y="206.5" width="2" height="1"/><rect x="605.5" y="216.5" width="1" height="1"/><rect x="603.4" y="209.3" width="1" height="1"/><rect x="609.4" y="216.2" width="1" height="1"/><rect x="604.9" y="219.9" width="2" height="1"/><rect x="605.3" y="206.4" width="1" height="1"/><rect x="606.3" y="215.3" width="1.5" height="1"/><rect x="601.9" y="207.3" width="2" height="1"/><rect x="610.8" y="213.0" width="1.5" height="1"/><rect x="610.1" y="219.2" width="1.5" height="1.5"/><rect x="601.5" y="211.2" width="2" height="1"/><rect x="605.7" y="203.2" width="1" height="1"/><rect x="604.1" y="217.9" width="1" height="1"/><rect x="602.1" y="212.6" width="2" height="1"/><rect x="606.6" y="216.0" width="1" height="1"/><rect x="606.1" y="208.2" width="1" height="1.5"/><rect x="605.9" y="220.2" width="1.5" height="1"/><rect x="609.6" y="214.4" width="1.5" height="1"/><rect x="610.7" y="212.8" width="2" height="1"/><rect x="604.9" y="204.8" width="1" height="1.5"/><rect x="604.5" y="213.0" width="1" height="1.5"/><rect x="610.1" y="213.2" width="1" height="1"/><rect x="601.6" y="205.8" width="2" height="1"/><rect x="610.2" y="218.1" width="2" height="1"/><rect x="603.2" y="212.2" width="1.5" height="1"/><rect x="610.2" y="212.8" width="1" height="1"/><rect x="605.0" y="203.2" width="1.5" height="1"/></g>
<g fill="#ff0000"><rect x="590.5" y="221.2" width="2" height="1"/><rect x="588.5" y="226.9" width="1.5" height="1.5"/><rect x="585.8" y="226.0" width="2" height="1"/><rect x="587.4" y="224.0" width="1" height="1.5"/><rect x="585.8" y="227.7" width="1" height="1.5"/><rect x="585.9" y="226.2" width="1" height="1"/><rect x="592.2" y="227.7" width="1.5" height="1"/><rect x="586.8" y="222.4" width="1" height="1"/><rect x="587.5" y="224.4" width="2" height="1.5"/><rect x="587.6" y="228.6" width="1" height="1"/><rect x="585.8" y="228.6" width="1.5" height="1"/><rect x="590.3" y="227.8" width="1.5" height="1.5"/><rect x="591.2" y="225.2" width="1" height="1"/><rect x="590.9" y="227.4" width="2" height="1"/><rect x="586.5" y="228.4" width="1" height="1"/><rect x="590.9" y="222.6" width="2" height="1"/><rect x="588.6" y="224.3" width="1.5" height="1"/><rect x="589.7" y="217.7" width="1" height="1"/><rect x="587.7" y="223.1" width="1.5" height="1"/><rect x="592.3" y="227.3" width="1" height="1.5"/><rect x="591.1" y="222.5" width="1" height="1.5"/><rect x="585.7" y="226.9" width="1.5" height="1"/><rect x="587.0" y="226.2" width="1.5" height="1"/><rect x="590.9" y="223.9" width="1" height="1"/><rect x="591.2" y="222.1" width="1" height="1"/><rect x="586.5" y="233.3" width="1.5" height="1"/><rect x="585.9" y="223.9" width="1" height="1.5"/><rect x="588.5" y="220.6" width="1" height="1"/><rect x="589.5" y="229.6" width="1.5" height="1"/><rect x="585.8" y="223.4" width="1" height="1"/><rect x="586.3" y="232.4" width="2" height="1.5"/><rect x="589.7" y="230.8" width="1" height="1.5"/><rect x="589.4" y="229.9" width="1" height="1"/><rect x="588.2" y="219.9" width="2" height="1.5"/><rect x="589.5" y="218.0" width="2" height="1"/><rect x="586.6" y="223.8" width="1.5" height="1"/><rect x="588.8" y="225.2" width="1.5" height="1.5"/><rect x="592.4" y="228.3" width="1.5" height="1"/><rect x="584.1" y="221.2" width="1" height="1.5"/><rect x="585.4" y="229.8" width="2" height="1"/><rect x="592.1" y="229.7" width="1" height="1.5"/><rect x="587.9" y="225.1" width="1" height="1"/><rect x="590.5" y="225.0" width="1" height="1.5"/><rect x="587.8" y="219.0" width="1" height="1"/><rect x="588.8" y="219.1" width="2" height="1"/><rect x="590.0" y="224.7" width="1.5" height="1.5"/><rect x="589.2" y="224.1" width="1" height="1"/><rect x="590.6" y="221.1" width="1" height="1.5"/><rect x="592.0" y="230.3" width="1.5" height="1"/></g>
<g fill="#ff0000"><rect x="635.6" y="206.4" width="1" height="1.5"/><rect x="631.0" y="210.1" width="1.5" height="1"/><rect x="636.7" y="208.6" width="1" height="1"/><rect x="639.0" y="207.4" width="1.5" height="1"/><rect x="651.8" y="196.7" width="1.5" height="1"/><rect x="646.2" y="203.6" width="1" height="1.5"/><rect x="643.1" y="203.0" width="1" height="1.5"/><rect x="651.7" y="197.7" width="2" height="1"/><rect x="653.5" y="197.3" width="1" height="1"/><rect x="656.2" y="197.5" width="1" height="1"/><rect x="639.0" y="204.1" width="2" height="1.5"/><rect x="644.8" y="200.6" width="1.5" height="1"/><rect x="626.9" y="212.7" width="2" height="1.5"/><rect x="638.7" y="204.8" width="1" height="1"/><rect x="641.1" y="201.9" width="1.5" height="1"/><rect x="652.9" y="198.6" width="1" height="1"/><rect x="650.0" y="200.7" width="2" height="1"/><rect x="661.1" y="193.3" width="1" height="1"/><rect x="639.7" y="202.2" width="1.5" height="1"/><rect x="646.4" y="198.5" width="1" height="1.5"/><rect x="657.6" y="194.7" width="1" height="1.5"/><rect x="660.7" y="194.0" width="1.5" height="1.5"/><rect x="640.7" y="201.9" width="1" height="1"/><rect x="649.0" y="200.4" width="2" height="1.5"/><rect x="629.1" y="211.8" width="1.5" height="1.5"/><rect x="627.7" y="211.9" width="1.5" height="1.5"/><rect x="633.6" y="207.9" width="1" height="1"/><rect x="660.0" y="194.7" width="1.5" height="1"/><rect x="650.4" y="197.3" width="1.5" height="1"/><rect x="637.0" y="207.1" width="1" height="1"/><rect x="639.5" y="205.9" width="1" height="1.5"/><rect x="659.9" y="194.3" width="1" height="1"/><rect x="660.8" y="191.8" width="1" height="1"/><rect x="634.8" y="209.3" width="1" height="1"/><rect x="636.1" y="208.1" width="1" height="1"/><rect x="663.5" y="190.8" width="2" height="1.5"/><rect x="639.0" y="205.8" width="1" height="1.5"/><rect x="635.0" y="207.2" width="1" height="1"/><rect x="647.6" y="202.0" width="1" height="1"/><rect x="635.3" y="209.2" width="1" height="1"/><rect x="637.3" y="204.9" width="1.5" height="1.5"/><rect x="644.9" y="199.1" width="1" height="1"/><rect x="648.2" y="200.9" width="1.5" height="1"/><rect x="641.0" y="202.6" width="1" height="1"/><rect x="646.7" y="201.3" width="1" height="1"/><rect x="631.9" y="210.6" width="1" height="1"/><rect x="643.4" y="201.8" width="1" height="1"/><rect x="641.5" y="203.1" width="1" height="1.5"/><rect x="652.6" y="196.2" width="2" height="1.5"/><rect x="655.5" y="196.2" width="2" height="1"/><rect x="650.9" y="195.8" width="1" height="1.5"/><rect x="647.8" y="201.3" width="1.5" height="1"/><rect x="652.6" y="195.2" width="1" height="1.5"/><rect x="651.7" y="196.5" width="2" height="1"/><rect x="639.3" y="206.0" width="2" height="1"/><rect x="650.2" y="198.7" width="1" height="1.5"/><rect x="649.2" y="199.9" width="2" height="1"/><rect x="639.3" y="206.4" width="1" height="1"/><rect x="658.4" y="194.9" width="1" height="1.5"/><rect x="636.4" y="205.6" width="1" height="1"/><rect x="662.8" y="193.2" width="1.5" height="1"/><rect x="640.1" y="206.3" width="1" height="1"/><rect x="659.0" y="194.7" width="1.5" height="1.5"/><rect x="630.9" y="211.2" width="1.5" height="1.5"/><rect x="646.5" y="203.4" width="1" height="1"/><rect x="638.7" y="203.4" width="1" height="1"/><rect x="649.3" y="196.7" width="1.5" height="1"/></g>
<g fill="#ff0000"><rect x="566.9" y="249.3" width="1.5" height="1"/><rect x="568.5" y="264.9" width="1" height="1.5"/><rect x="569.2" y="246.4" width="2" height="1"/><rect x="569.7" y="253.8" width="1" height="1"/><rect x="570.8" y="258.3" width="1.5" height="1.5"/><rect x="566.3" y="255.0" width="1" height="1"/><rect x="570.7" y="249.6" width="1.5" height="1"/><rect x="573.5" y="251.7" width="1.5" height="1"/><rect x="566.8" y="257.0" width="1" height="1"/><rect x="570.0" y="259.3" width="1" height="1"/><rect x="574.9" y="254.2" width="1" height="1"/><rect x="570.2" y="244.0" width="1.5" height="1"/><rect x="567.1" y="264.7" width="1" height="1"/><rect x="576.6" y="248.3" width="1" height="1.5"/><rect x="577.9" y="251.2" width="1" height="1"/><rect x="570.9" y="258.4" width="1" height="1"/><rect x="566.8" y="250.1" width="1.5" height="1"/><rect x="575.3" y="253.7" width="1" height="1"/><rect x="574.8" y="257.2" width="1" height="1"/><rect x="573.4" y="249.0" width="2" height="1.5"/><rect x="573.5" y="253.1" width="1" height="1"/><rect x="576.0" y="257.9" width="2" height="1"/><rect x="574.0" y="250.9" width="2" height="1.5"/><rect x="568.8" y="255.6" width="1" height="1.5"/><rect x="577.0" y="253.7" width="2" height="1"/><rect x="566.7" y="248.4" width="2" height="1"/><rect x="577.9" y="259.2" width="1.5" height="1"/><rect x="570.8" y="262.6" width="1" height="1"/><rect x="567.3" y="244.9" width="1" height="1"/><rect x="575.6" y="253.3" width="1.5" height="1"/><rect x="570.1" y="253.5" width="1.5" height="1"/><rect x="571.1" y="252.7" width="1" height="1"/><rect x="567.3" y="251.5" width="2" height="1"/><rect x="566.9" y="252.9" width="1" height="1.5"/><rect x="577.7" y="241.7" width="1" height="1"/><rect x="568.1" y="248.7" width="1.5" height="1"/><rect x="576.0" y="243.1" width="1" height="1.5"/><rect x="570.7" y="262.1" width="2" height="1"/><rect x="566.9" y="265.7" width="1" height="1.5"/><rect x="573.6" y="262.8" width="1" height="1.5"/><rect x="574.0" y="251.2" width="1" height="1"/><rect x="574.4" y="262.0" width="1.5" height="1.5"/><rect x="573.2" y="258.1" width="1" height="1"/><rect x="568.1" y="255.1" width="1" height="1"/><rect x="569.3" y="246.7" width="1.5" height="1.5"/><rect x="573.5" y="248.0" width="1" height="1"/><rect x="574.3" y="259.1" width="1.5" height="1"/><rect x="575.2" y="245.2" width="1" height="1.5"/><rect x="569.2" y="249.7" width="2" height="1"/><rect x="571.5" y="253.2" width="1" height="1"/><rect x="572.2" y="250.9" width="2" height="1.5"/><rect x="566.9" y="256.9" width="1" height="1"/><rect x="570.7" y="259.3" width="1" height="1"/><rect x="573.7" y="249.5" width="1.5" height="1"/><rect x="573.0" y="257.1" width="1.5" height="1"/><rect x="570.5" y="255.4" width="1.5" height="1"/><rect x="571.0" y="248.9" width="1" height="1.5"/><rect x="573.9" y="251.8" width="1" height="1"/><rect x="566.4" y="255.3" width="1.5" height="1"/><rect x="574.0" y="244.0" width="1" height="1"/><rect x="568.0" y="253.1" width="2" height="1.5"/><rect x="575.5" y="251.3" width="1" height="1.5"/><rect x="572.5" y="242.9" width="1" height="1"/><rect x="578.0" y="257.1" width="1" height="1.5"/><rect x="577.9" y="245.4" width="1.5" height="1"/><rect x="572.2" y="242.5" width="1" height="1"/><rect x="568.0" y="256.9" width="1.5" height="1.5"/><rect x="575.7" y="259.0" width="1" height="1"/><rect x="576.7" y="240.6" width="1.5" height="1"/><rect x="572.4" y="253.9" width="1" height="1"/><rect x="569.6" y="253.2" width="1" height="1"/><rect x="572.8" y="243.4" width="1" height="1.5"/><rect x="572.1" y="247.6" width="1" height="1"/><rect x="573.1" y="252.1" width="1" height="1.5"/><rect x="571.4" y="254.5" width="2" height="1"/><rect x="576.2" y="242.7" width="1" height="1"/><rect x="577.6" y="253.6" width="2" height="1.5"/><rect x="573.3" y="262.5" width="1" height="1"/><rect x="575.9" y="246.0" width="1" height="1.5"/><rect x="574.8" y="249.8" width="1.5" height="1.5"/><rect x="573.4" y="250.5" width="2" height="1"/><rect x="576.9" y="254.1" width="1" height="1"/><rect x="577.0" y="248.5" width="2" height="1"/><rect x="573.8" y="263.1" width="1" height="1.5"/><rect x="567.2" y="256.3" width="1.5" height="1.5"/><rect x="573.2" y="245.7" width="1" height="1"/><rect x="575.5" y="250.0" width="2" height="1"/><rect x="576.0" y="241.6" width="2" height="1.5"/></g>
<polygon points="733.5,214.0 753.4,206.7 760.0,214.0 765.0,230.0 752.0,236.0 735.0,226.0" fill="#ff0000" fill-opacity="0.9"/>
<g fill="#ff0000"><rect x="745.6" y="241.6" width="1" height="1.5"/><rect x="748.1" y="222.6" width="2" height="1"/><rect x="755.4" y="230.6" width="1" height="1"/><rect x="749.8" y="247.2" width="1" height="1.5"/><rect x="759.1" y="247.0" width="1.5" height="1.5"/><rect x="764.1" y="242.5" width="1" height="1.5"/><rect x="738.7" y="215.2" width="1.5" height="1"/><rect x="758.9" y="241.2" width="2" height="1.5"/><rect x="743.8" y="236.4" width="1" height="1"/><rect x="745.9" y="222.7" width="1" height="1"/><rect x="760.6" y="231.6" width="1.5" height="1.5"/><rect x="765.3" y="234.0" width="1" height="1.5"/><rect x="756.8" y="241.8" width="2" height="1"/><rect x="746.3" y="234.3" width="1" height="1"/><rect x="768.4" y="227.4" width="1" height="1"/><rect x="767.2" y="236.3" width="1" height="1"/><rect x="745.5" y="238.5" width="1" height="1"/><rect x="770.9" y="237.6" width="1" height="1"/><rect x="757.4" y="245.6" width="1" height="1"/><rect x="750.2" y="231.0" width="1" height="1"/><rect x="731.2" y="227.0" width="2" height="1"/><rect x="763.1" y="245.8" width="2" height="1"/><rect x="763.9" y="225.4" width="2" height="1"/><rect x="756.9" y="243.0" width="1.5" height="1"/><rect x="762.0" y="225.0" width="2" height="1"/><rect x="758.1" y="242.5" width="1.5" height="1.5"/><rect x="736.9" y="237.3" width="2" height="1"/><rect x="734.1" y="229.2" width="1.5" height="1"/><rect x="765.9" y="232.4" width="1.5" height="1"/><rect x="741.7" y="218.8" width="1" height="1.5"/><rect x="738.5" y="226.3" width="2" height="1"/><rect x="753.8" y="219.4" width="1" height="1.5"/><rect x="744.8" y="242.7" width="1" height="1.5"/><rect x="747.1" y="216.7" width="2" height="1"/><rect x="753.9" y="227.6" width="1.5" height="1"/><rect x="740.5" y="218.2" width="1.5" height="1"/><rect x="737.7" y="217.9" width="1" height="1"/><rect x="763.9" y="224.5" width="1.5" height="1.5"/><rect x="772.2" y="238.2" width="1.5" height="1"/><rect x="756.3" y="220.3" width="1.5" height="1"/><rect x="742.2" y="215.7" width="2" height="1"/><rect x="743.1" y="221.5" width="1.5" height="1.5"/><rect x="737.2" y="225.4" width="1" height="1.5"/><rect x="737.7" y="239.1" width="1.5" height="1"/><rect x="747.6" y="240.5" width="1" height="1"/><rect x="752.1" y="224.7" width="1" height="1.5"/><rect x="754.7" y="232.1" width="1.5" height="1"/><rect x="733.3" y="231.5" width="1" height="1"/><rect x="757.7" y="215.2" width="1.5" height="1"/><rect x="747.2" y="216.0" width="1" height="1"/><rect x="731.1" y="232.3" width="1" height="1"/><rect x="755.8" y="217.7" width="1.5" height="1.5"/><rect x="754.4" y="218.2" width="1" height="1"/><rect x="736.5" y="218.0" width="2" height="1"/><rect x="757.3" y="247.5" width="1" height="1"/><rect x="740.5" y="221.0" width="1" height="1.5"/><rect x="730.6" y="229.2" width="1.5" height="1"/><rect x="733.9" y="230.3" width="1" height="1"/><rect x="763.8" y="230.3" width="1" height="1"/><rect x="748.1" y="246.9" width="1" height="1"/><rect x="746.3" y="223.8" width="1" height="1"/><rect x="742.6" y="232.8" width="1.5" height="1.5"/><rect x="763.1" y="227.9" width="1" height="1"/><rect x="738.3" y="216.4" width="1.5" height="1"/><rect x="753.4" y="240.3" width="1.5" height="1"/><rect x="741.4" y="235.4" width="1.5" height="1.5"/><rect x="755.6" y="220.3" width="1" height="1"/><rect x="745.0" y="213.2" width="1.5" height="1.5"/><rect x="765.7" y="236.2" width="1" height="1.5"/><rect x="734.2" y="236.6" width="1" height="1"/><rect x="740.4" y="226.4" width="1" height="1"/><rect x="762.9" y="219.5" width="1" height="1"/><rect x="737.5" y="229.3" width="1" height="1"/><rect x="746.6" y="245.9" width="1" height="1.5"/><rect x="741.4" y="237.2" width="1" height="1.5"/><rect x="773.6" y="236.0" width="1.5" height="1"/><rect x="765.7" y="245.6" width="1" height="1"/><rect x="778.5" y="238.1" width="1" height="1"/><rect x="744.9" y="217.6" width="1" height="1"/><rect x="755.8" y="231.1" width="2" height="1.5"/><rect x="742.6" y="214.2" width="1" height="1"/><rect x="733.4" y="222.4" width="1" height="1"/><rect x="734.8" y="229.0" width="2" height="1"/><rect x="759.6" y="242.7" width="2" height="1"/><rect x="767.5" y="225.8" width="1" height="1"/><rect x="737.7" y="217.2" width="1" height="1"/><rect x="746.6" y="217.0" width="1" height="1"/><rect x="742.6" y="234.1" width="1.5" height="1.5"/><rect x="753.1" y="234.3" width="1.5" height="1"/><rect x="747.3" y="244.1" width="2" height="1"/><rect x="756.4" y="228.1" width="1.5" height="1"/><rect x="772.0" y="244.0" width="1" height="1"/><rect x="743.9" y="217.2" width="1.5" height="1"/><rect x="757.2" y="226.0" width="1.5" height="1"/><rect x="761.4" y="234.7" width="1" height="1"/><rect x="753.4" y="214.9" width="2" height="1.5"/><rect x="743.0" y="232.4" width="2" height="1"/><rect x="734.1" y="229.5" width="2" height="1"/><rect x="743.5" y="227.4" width="1" height="1"/><rect x="770.8" y="240.9" width="1.5" height="1"/><rect x="750.8" y="231.7" width="1" height="1"/><rect x="745.3" y="235.9" width="1.5" height="1"/><rect x="761.7" y="236.8" width="2" height="1"/><rect x="763.7" y="240.8" width="1.5" height="1"/><rect x="730.7" y="230.0" width="1.5" height="1"/><rect x="769.0" y="233.8" width="2" height="1.5"/><rect x="737.5" y="220.5" width="1.5" height="1"/><rect x="745.0" y="217.7" width="1.5" height="1.5"/><rect x="772.7" y="239.8" width="1" height="1.5"/><rect x="742.7" y="229.4" width="2" height="1"/><rect x="748.7" y="224.1" width="1" height="1"/><rect x="754.4" y="247.7" width="1" height="1.5"/><rect x="737.2" y="227.0" width="2" height="1"/><rect x="742.9" y="239.9" width="1" height="1"/><rect x="745.9" y="212.8" width="1" height="1"/><rect x="756.1" y="232.6" width="1.5" height="1"/><rect x="743.5" y="230.5" width="2" height="1"/><rect x="756.2" y="228.6" width="1" height="1"/><rect x="739.5" y="232.7" width="1" height="1"/><rect x="745.9" y="213.3" width="1" height="1"/><rect x="744.3" y="243.2" width="2" height="1"/><rect x="749.8" y="219.6" width="2" height="1"/><rect x="735.7" y="227.1" width="2" height="1.5"/><rect x="757.2" y="234.9" width="1.5" height="1.5"/><rect x="755.8" y="217.9" width="1" height="1.5"/><rect x="737.1" y="231.5" width="1.5" height="1.5"/><rect x="758.7" y="246.0" width="1.5" height="1.5"/><rect x="752.7" y="233.9" width="1" height="1"/><rect x="754.4" y="240.4" width="1" height="1"/><rect x="733.9" y="232.0" width="1" height="1"/><rect x="757.9" y="225.9" width="2" height="1"/><rect x="766.5" y="238.3" width="1" height="1"/><rect x="753.8" y="232.9" width="1.5" height="1.5"/><rect x="735.6" y="222.2" width="1" height="1.5"/><rect x="754.9" y="226.2" width="2" height="1"/><rect x="742.4" y="240.6" width="1.5" height="1"/><rect x="739.9" y="235.7" width="1" height="1"/><rect x="751.2" y="218.7" width="1" height="1"/><rect x="773.0" y="234.2" width="1" height="1"/><rect x="766.1" y="234.3" width="2" height="1.5"/><rect x="748.3" y="244.6" width="2" height="1.5"/><rect x="733.3" y="219.3" width="1" height="1.5"/><rect x="759.6" y="233.3" width="2" height="1"/><rect x="740.2" y="222.0" width="1" height="1.5"/><rect x="758.8" y="238.2" width="2" height="1"/><rect x="750.8" y="214.1" width="2" height="1"/><rect x="777.1" y="239.0" width="2" height="1"/><rect x="754.4" y="212.7" width="1" height="1.5"/><rect x="749.0" y="233.0" width="1.5" height="1.5"/><rect x="747.7" y="228.8" width="1.5" height="1.5"/><rect x="763.5" y="226.1" width="1" height="1"/><rect x="745.7" y="238.2" width="1" height="1"/><rect x="775.4" y="240.7" width="2" height="1.5"/><rect x="753.8" y="245.0" width="2" height="1.5"/><rect x="736.8" y="233.6" width="2" height="1"/><rect x="757.9" y="246.7" width="1.5" height="1"/><rect x="744.5" y="236.9" width="1.5" height="1"/><rect x="748.5" y="221.0" width="1.5" height="1.5"/><rect x="748.2" y="235.5" width="1" height="1"/><rect x="760.7" y="242.2" width="1" height="1"/><rect x="738.4" y="215.1" width="1" height="1.5"/><rect x="769.1" y="238.6" width="1.5" height="1"/><rect x="753.9" y="237.0" width="1" height="1.5"/><rect x="770.3" y="243.2" width="1" height="1.5"/><rect x="764.6" y="237.1" width="1.5" height="1"/><rect x="771.6" y="237.2" width="1" height="1"/><rect x="775.2" y="240.5" width="1.5" height="1.5"/><rect x="754.7" y="224.3" width="1" height="1.5"/><rect x="751.5" y="227.0" width="1" height="1.5"/><rect x="747.3" y="237.4" width="1" height="1"/><rect x="747.7" y="219.3" width="1" height="1.5"/><rect x="766.7" y="239.7" width="1" height="1"/><rect x="745.7" y="233.1" width="2" height="1.5"/><rect x="756.1" y="225.3" width="1" height="1"/><rect x="738.4" y="221.0" width="1" height="1.5"/><rect x="747.7" y="226.4" width="1" height="1"/><rect x="738.2" y="216.8" width="1" height="1"/><rect x="756.7" y="244.0" width="2" height="1.5"/><rect x="742.8" y="227.5" width="1" height="1"/><rect x="760.4" y="221.5" width="1" height="1"/><rect x="772.8" y="242.3" width="2" height="1.5"/><rect x="748.1" y="246.4" width="1" height="1"/><rect x="754.5" y="219.3" width="1" height="1"/><rect x="735.0" y="230.9" width="1.5" height="1.5"/><rect x="750.8" y="231.7" width="1" height="1"/><rect x="749.0" y="234.9" width="1" height="1"/><rect x="757.6" y="246.2" width="2" height="1.5"/><rect x="767.5" y="233.1" width="1" height="1"/><rect x="752.7" y="244.7" width="2" height="1"/><rect x="776.1" y="235.4" width="1.5" height="1.5"/><rect x="741.7" y="222.5" width="1" height="1.5"/><rect x="755.6" y="247.6" width="1" height="1"/><rect x="739.0" y="240.8" width="1" height="1"/><rect x="737.7" y="228.6" width="1.5" height="1"/><rect x="774.4" y="238.7" width="1.5" height="1.5"/><rect x="763.6" y="243.4" width="1.5" height="1"/><rect x="773.3" y="235.5" width="2" height="1.5"/><rect x="761.8" y="226.4" width="1" height="1"/><rect x="759.0" y="220.9" width="1" height="1.5"/><rect x="733.7" y="220.2" width="1" height="1"/><rect x="744.0" y="242.6" width="1" height="1.5"/><rect x="762.9" y="234.4" width="2" height="1.5"/><rect x="750.0" y="232.9" width="1" height="1.5"/><rect x="742.2" y="215.1" width="1.5" height="1.5"/><rect x="748.1" y="223.2" width="1" height="1.5"/><rect x="761.6" y="233.7" width="1" height="1.5"/><rect x="761.6" y="234.4" width="2" height="1"/><rect x="753.7" y="212.3" width="1" height="1"/><rect x="739.0" y="228.4" width="2" height="1.5"/><rect x="748.3" y="216.9" width="1.5" height="1.5"/><rect x="732.9" y="221.2" width="1" height="1"/><rect x="741.6" y="235.2" width="1" height="1"/><rect x="769.5" y="233.1" width="1" height="1"/><rect x="738.5" y="227.7" width="2" height="1"/><rect x="733.3" y="230.4" width="1" height="1"/><rect x="770.7" y="240.6" width="2" height="1"/><rect x="748.4" y="238.9" width="1" height="1"/><rect x="769.7" y="246.1" width="2" height="1.5"/><rect x="743.8" y="235.8" width="1" height="1"/><rect x="769.4" y="244.0" width="1" height="1.5"/><rect x="744.2" y="239.1" width="1" height="1.5"/><rect x="766.1" y="235.0" width="2" height="1"/><rect x="778.3" y="238.7" width="1.5" height="1.5"/><rect x="759.7" y="246.9" width="1.5" height="1"/><rect x="771.3" y="235.5" width="1" height="1"/><rect x="749.7" y="232.0" width="1" height="1.5"/><rect x="732.7" y="234.5" width="1.5" height="1"/><rect x="745.6" y="233.6" width="1" height="1"/><rect x="751.8" y="243.1" width="1" height="1"/><rect x="738.9" y="229.8" width="1" height="1.5"/><rect x="757.3" y="223.5" width="1" height="1"/><rect x="745.9" y="221.1" width="1" height="1"/><rect x="751.0" y="245.4" width="2" height="1"/><rect x="765.5" y="243.1" width="2" height="1"/><rect x="745.4" y="225.7" width="1.5" height="1.5"/><rect x="766.5" y="228.2" width="1" height="1.5"/><rect x="760.2" y="216.8" width="1" height="1"/><rect x="750.2" y="217.6" width="1" height="1.5"/><rect x="763.1" y="224.3" width="1" height="1"/><rect x="752.4" y="241.9" width="1.5" height="1.5"/><rect x="752.2" y="242.3" width="1" height="1"/><rect x="756.0" y="215.5" width="1.5" height="1"/><rect x="748.1" y="235.3" width="1.5" height="1"/><rect x="757.1" y="232.7" width="1" height="1.5"/><rect x="756.4" y="223.0" width="2" height="1"/><rect x="761.1" y="228.4" width="1" height="1"/><rect x="753.3" y="220.7" width="1" height="1.5"/><rect x="742.8" y="231.1" width="1.5" height="1.5"/><rect x="747.8" y="214.4" width="1.5" height="1"/><rect x="752.2" y="229.8" width="1.5" height="1"/><rect x="777.4" y="236.6" width="2" height="1.5"/><rect x="753.4" y="224.2" width="1" height="1"/><rect x="764.5" y="230.9" width="1" height="1"/><rect x="737.0" y="226.7" width="1" height="1"/><rect x="751.7" y="221.9" width="1.5" height="1"/><rect x="753.6" y="215.7" width="1" height="1"/><rect x="773.9" y="239.0" width="1" height="1.5"/><rect x="751.8" y="233.6" width="1" height="1"/><rect x="762.0" y="228.5" width="1" height="1"/><rect x="754.2" y="222.3" width="2" height="1"/><rect x="750.4" y="216.6" width="2" height="1.5"/><rect x="750.3" y="245.9" width="1" height="1.5"/><rect x="741.5" y="242.6" width="1.5" height="1"/><rect x="738.1" y="230.2" width="1" height="1.5"/><rect x="766.6" y="239.4" width="1.5" height="1.5"/><rect x="750.5" y="237.0" width="1" height="1"/><rect x="732.7" y="230.0" width="1" height="1"/><rect x="741.7" y="226.6" width="2" height="1"/><rect x="739.5" y="213.6" width="1" height="1.5"/><rect x="764.5" y="233.3" width="2" height="1"/><rect x="774.9" y="240.3" width="1" height="1.5"/><rect x="742.0" y="228.3" width="1.5" height="1.5"/><rect x="763.2" y="242.6" width="2" height="1.5"/><rect x="761.5" y="220.2" width="1.5" height="1.5"/><rect x="748.4" y="215.1" width="1" height="1.5"/><rect x="756.0" y="234.5" width="1.5" height="1"/><rect x="747.1" y="228.6" width="1" height="1"/><rect x="776.0" y="241.2" width="1.5" height="1.5"/><rect x="753.4" y="218.6" width="1.5" height="1"/><rect x="739.1" y="215.2" width="1" height="1"/><rect x="769.0" y="233.5" width="1" height="1"/><rect x="752.1" y="233.3" width="1.5" height="1"/><rect x="731.3" y="226.6" width="1.5" height="1"/><rect x="758.1" y="215.5" width="1" height="1"/><rect x="757.3" y="214.4" width="1" height="1"/><rect x="750.0" y="216.6" width="1.5" height="1.5"/><rect x="744.3" y="221.8" width="1" height="1"/><rect x="761.7" y="228.6" width="1.5" height="1.5"/><rect x="735.5" y="230.3" width="2" height="1.5"/><rect x="766.6" y="244.6" width="2" height="1"/><rect x="770.3" y="238.9" width="1" height="1"/><rect x="735.3" y="216.0" width="1" height="1.5"/><rect x="758.1" y="234.5" width="1.5" height="1"/><rect x="771.6" y="241.1" width="1" height="1"/><rect x="756.8" y="214.2" width="1" height="1"/><rect x="746.9" y="235.2" width="1" height="1"/><rect x="745.9" y="235.4" width="2" height="1"/><rect x="752.8" y="231.4" width="1" height="1.5"/><rect x="756.1" y="232.7" width="1" height="1"/><rect x="767.2" y="241.6" width="1" height="1.5"/><rect x="735.6" y="216.9" width="1" height="1"/><rect x="735.9" y="224.0" width="1" height="1"/><rect x="761.8" y="237.9" width="1.5" height="1"/><rect x="768.2" y="240.7" width="1.5" height="1.5"/><rect x="755.7" y="232.0" width="1" height="1.5"/><rect x="733.6" y="226.8" width="1" height="1"/><rect x="747.9" y="222.5" width="1" height="1"/><rect x="758.9" y="242.4" width="2" height="1"/><rect x="738.4" y="214.7" width="1" height="1"/><rect x="765.6" y="240.6" width="1" height="1"/><rect x="739.0" y="222.6" width="1" height="1.5"/><rect x="753.9" y="214.1" width="1" height="1"/><rect x="744.4" y="223.7" width="1" height="1"/><rect x="752.4" y="244.9" width="1" height="1.5"/><rect x="754.9" y="212.6" width="1.5" height="1"/><rect x="750.3" y="226.3" width="2" height="1.5"/><rect x="759.3" y="227.2" width="2" height="1"/><rect x="743.0" y="221.7" width="1.5" height="1"/><rect x="746.3" y="229.3" width="2" height="1"/><rect x="744.3" y="222.0" width="1" height="1"/><rect x="731.1" y="228.9" width="1" height="1.5"/><rect x="751.7" y="230.6" width="1" height="1"/><rect x="757.3" y="229.3" width="1.5" height="1"/><rect x="766.9" y="229.7" width="1" height="1.5"/><rect x="774.2" y="242.3" width="1" height="1.5"/><rect x="756.3" y="231.8" width="1" height="1.5"/><rect x="753.2" y="224.9" width="1" height="1.5"/><rect x="761.1" y="241.7" width="2" height="1"/><rect x="745.9" y="244.5" width="2" height="1.5"/><rect x="731.3" y="228.8" width="1.5" height="1"/><rect x="751.7" y="221.0" width="1" height="1"/><rect x="746.2" y="226.2" width="2" height="1.5"/><rect x="751.2" y="233.2" width="1" height="1.5"/><rect x="774.7" y="242.0" width="1" height="1.5"/><rect x="741.7" y="228.1" width="2" height="1.5"/><rect x="764.6" y="235.5" width="1.5" height="1"/><rect x="773.0" y="231.4" width="2" height="1"/><rect x="777.9" y="237.8" width="2" height="1"/><rect x="766.7" y="239.7" width="1.5" height="1.5"/><rect x="759.5" y="237.2" width="1" height="1"/><rect x="738.2" y="238.8" width="1" height="1"/><rect x="771.8" y="241.7" width="1" height="1.5"/><rect x="776.1" y="238.8" width="1" height="1"/><rect x="749.1" y="230.0" width="2" height="1"/><rect x="751.8" y="236.2" width="1.5" height="1.5"/><rect x="751.2" y="212.9" width="1" height="1"/><rect x="765.6" y="241.0" width="2" height="1"/><rect x="737.1" y="227.4" width="1" height="1"/><rect x="741.8" y="219.3" width="1" height="1"/><rect x="770.4" y="233.0" width="1" height="1.5"/><rect x="769.6" y="236.0" width="1" height="1.5"/><rect x="744.8" y="217.3" width="1" height="1"/><rect x="761.4" y="223.9" width="1" height="1.5"/><rect x="756.9" y="212.7" width="2" height="1.5"/><rect x="753.7" y="213.5" width="2" height="1"/><rect x="768.2" y="233.4" width="1" height="1.5"/><rect x="747.8" y="213.1" width="1.5" height="1.5"/><rect x="754.0" y="229.0" width="1" height="1"/><rect x="752.6" y="244.6" width="2" height="1.5"/><rect x="749.2" y="221.1" width="1" height="1.5"/><rect x="744.8" y="225.6" width="1" height="1"/><rect x="759.3" y="226.7" width="1" height="1"/><rect x="760.5" y="236.5" width="1.5" height="1"/><rect x="745.7" y="230.5" width="2" height="1.5"/><rect x="744.1" y="229.2" width="1.5" height="1.5"/><rect x="756.2" y="213.2" width="1.5" height="1"/><rect x="776.9" y="240.0" width="1" height="1"/><rect x="757.8" y="234.3" width="2" height="1"/><rect x="748.6" y="222.5" width="1.5" height="1"/><rect x="742.5" y="218.9" width="1.5" height="1"/><rect x="759.8" y="222.8" width="1" height="1.5"/><rect x="735.9" y="237.8" width="1" height="1"/><rect x="770.3" y="229.5" width="2" height="1"/><rect x="731.5" y="230.6" width="2" height="1.5"/><rect x="738.4" y="226.4" width="1" height="1"/><rect x="755.2" y="242.3" width="1.5" height="1.5"/><rect x="777.5" y="239.1" width="2" height="1"/><rect x="753.1" y="245.0" width="1.5" height="1.5"/><rect x="749.0" y="248.4" width="1.5" height="1"/><rect x="758.5" y="226.3" width="1.5" height="1"/><rect x="770.7" y="230.8" width="1" height="1"/><rect x="731.1" y="233.7" width="1" height="1"/><rect x="763.8" y="242.2" width="1" height="1"/><rect x="744.3" y="229.7" width="2" height="1"/><rect x="732.2" y="224.6" width="1" height="1"/><rect x="738.1" y="236.5" width="1" height="1"/><rect x="772.7" y="243.5" width="1" height="1"/><rect x="747.5" y="222.0" width="1" height="1"/><rect x="751.5" y="215.4" width="2" height="1"/><rect x="756.3" y="237.7" width="1" height="1.5"/><rect x="753.7" y="247.7" width="1" height="1"/><rect x="746.7" y="243.2" width="1" height="1"/><rect x="765.7" y="246.3" width="1" height="1"/><rect x="741.6" y="228.5" width="1.5" height="1.5"/><rect x="758.7" y="227.8" width="2" height="1"/><rect x="755.5" y="234.6" width="1" height="1.5"/><rect x="773.8" y="235.8" width="1" height="1"/><rect x="770.8" y="241.2" width="1" height="1"/><rect x="746.8" y="212.8" width="2" height="1"/><rect x="751.4" y="215.8" width="1.5" height="1"/><rect x="744.2" y="218.0" width="1.5" height="1"/><rect x="763.2" y="246.7" width="1" height="1.5"/><rect x="752.5" y="213.7" width="2" height="1"/><rect x="770.2" y="238.6" width="2" height="1"/><rect x="754.7" y="240.8" width="1" height="1.5"/><rect x="760.5" y="241.8" width="2" height="1.5"/><rect x="733.5" y="226.8" width="1" height="1"/><rect x="770.7" y="233.8" width="2" height="1.5"/><rect x="763.4" y="241.8" width="1" height="1"/><rect x="739.5" y="227.0" width="1" height="1.5"/><rect x="740.4" y="223.7" width="1" height="1"/><rect x="730.4" y="232.5" width="1" height="1"/><rect x="760.1" y="245.2" width="1.5" height="1.5"/><rect x="759.7" y="221.6" width="1" height="1"/><rect x="766.5" y="241.3" width="1" height="1.5"/><rect x="746.8" y="246.8" width="1" height="1"/><rect x="766.1" y="239.9" width="1" height="1"/><rect x="732.9" y="217.9" width="1" height="1"/><rect x="743.2" y="224.4" width="1" height="1.5"/><rect x="759.6" y="246.1" width="1" height="1.5"/><rect x="759.6" y="221.4" width="2" height="1"/><rect x="751.2" y="242.7" width="1.5" height="1.5"/><rect x="773.9" y="241.7" width="1" height="1.5"/><rect x="759.2" y="221.8" width="2" height="1"/><rect x="744.2" y="232.4" width="2" height="1"/><rect x="733.8" y="219.3" width="1.5" height="1"/><rect x="738.5" y="237.8" width="2" height="1"/><rect x="760.0" y="221.9" width="2" height="1.5"/><rect x="766.0" y="232.8" width="1.5" height="1.5"/><rect x="743.0" y="239.2" width="1" height="1"/><rect x="744.9" y="239.5" width="2" height="1.5"/><rect x="747.3" y="216.2" width="2" height="1.5"/><rect x="748.7" y="214.0" width="1" height="1"/><rect x="759.0" y="237.9" width="1" height="1"/><rect x="771.2" y="236.1" width="1.5" height="1.5"/><rect x="772.4" y="231.4" width="1" height="1"/><rect x="753.5" y="238.2" width="1" height="1"/><rect x="755.0" y="224.2" width="1" height="1"/><rect x="761.3" y="228.1" width="1" height="1"/><rect x="748.0" y="221.5" width="1" height="1.5"/><rect x="756.4" y="228.5" width="1" height="1.5"/><rect x="759.4" y="222.9" width="1.5" height="1"/><rect x="756.8" y="243.5" width="1" height="1.5"/><rect x="741.4" y="223.7" width="2" height="1"/><rect x="751.6" y="218.6" width="1" height="1"/><rect x="747.0" y="244.3" width="2" height="1.5"/><rect x="761.3" y="234.7" width="1" height="1"/><rect x="760.4" y="236.5" width="1.5" height="1"/><rect x="742.3" y="237.6" width="2" height="1"/><rect x="763.6" y="220.4" width="1.5" height="1"/><rect x="749.5" y="232.5" width="2" height="1.5"/><rect x="741.2" y="216.5" width="1" height="1"/><rect x="747.3" y="215.4" width="1" height="1"/><rect x="752.5" y="247.1" width="1.5" height="1"/><rect x="763.6" y="225.5" width="2" height="1"/><rect x="770.4" y="234.0" width="1" height="1.5"/><rect x="759.4" y="228.7" width="1.5" height="1"/><rect x="765.4" y="226.4" width="2" height="1"/><rect x="740.7" y="216.7" width="2" height="1"/><rect x="746.0" y="225.7" width="1" height="1"/><rect x="742.7" y="244.0" width="1" height="1"/><rect x="741.6" y="228.9" width="1" height="1.5"/><rect x="760.8" y="220.2" width="1" height="1"/><rect x="769.1" y="233.0" width="1.5" height="1"/><rect x="752.6" y="243.3" width="1" height="1"/><rect x="766.9" y="227.0" width="1" height="1"/><rect x="736.0" y="229.9" width="1" height="1.5"/><rect x="757.5" y="221.4" width="1.5" height="1"/><rect x="775.3" y="238.4" width="2" height="1"/><rect x="767.8" y="229.3" width="2" height="1"/><rect x="735.8" y="235.6" width="1.5" height="1.5"/><rect x="749.8" y="213.3" width="1.5" height="1"/><rect x="740.5" y="224.1" width="2" height="1"/><rect x="755.0" y="216.3" width="1.5" height="1"/><rect x="755.5" y="237.7" width="2" height="1.5"/><rect x="768.5" y="231.5" width="1" height="1"/><rect x="754.1" y="220.3" width="1.5" height="1"/><rect x="740.6" y="215.5" width="1" height="1"/><rect x="766.1" y="235.8" width="1" height="1.5"/><rect x="741.2" y="240.1" width="1" height="1"/><rect x="754.9" y="241.0" width="1" height="1.5"/><rect x="755.5" y="219.2" width="1" height="1"/><rect x="755.7" y="233.2" width="2" height="1"/><rect x="761.2" y="232.0" width="2" height="1"/><rect x="752.5" y="242.1" width="1.5" height="1"/><rect x="768.0" y="236.8" width="1" height="1.5"/><rect x="734.7" y="235.7" width="1" height="1.5"/><rect x="760.0" y="231.5" width="1.5" height="1"/><rect x="736.5" y="228.4" width="2" height="1"/><rect x="750.9" y="234.6" width="1" height="1.5"/><rect x="769.8" y="238.1" width="2" height="1"/><rect x="763.3" y="230.2" width="1.5" height="1"/><rect x="740.0" y="220.8" width="1" height="1.5"/><rect x="743.6" y="241.3" width="2" height="1.5"/><rect x="733.0" y="222.0" width="1" height="1.5"/><rect x="774.5" y="239.3" width="1" height="1"/><rect x="746.2" y="238.6" width="1" height="1"/><rect x="758.5" y="232.9" width="2" height="1"/><rect x="776.2" y="238.0" width="1" height="1.5"/><rect x="744.1" y="231.5" width="1.5" height="1.5"/><rect x="746.6" y="219.4" width="1" height="1.5"/><rect x="757.0" y="220.4" width="2" height="1"/><rect x="752.8" y="224.0" width="2" height="1"/><rect x="748.9" y="234.9" width="2" height="1.5"/><rect x="764.5" y="241.7" width="1" height="1.5"/><rect x="748.2" y="223.1" width="1.5" height="1.5"/><rect x="776.9" y="236.5" width="1" height="1"/><rect x="748.8" y="225.0" width="1.5" height="1"/><rect x="747.6" y="216.8" width="2" height="1.5"/><rect x="747.2" y="237.6" width="2" height="1"/><rect x="773.3" y="237.4" width="1.5" height="1"/><rect x="747.7" y="223.1" width="1.5" height="1"/><rect x="745.5" y="236.7" width="1" height="1"/><rect x="758.3" y="238.9" width="1" height="1"/><rect x="755.8" y="242.9" width="1.5" height="1"/><rect x="745.7" y="213.0" width="1" height="1"/><rect x="761.1" y="240.2" width="1" height="1.5"/><rect x="744.7" y="217.6" width="1.5" height="1.5"/><rect x="755.7" y="239.3" width="1" height="1.5"/><rect x="733.5" y="216.0" width="2" height="1"/><rect x="744.4" y="240.4" width="1.5" height="1"/><rect x="743.6" y="236.7" width="1" height="1"/><rect x="762.1" y="230.7" width="1" height="1.5"/><rect x="756.7" y="238.4" width="1" height="1"/><rect x="757.9" y="240.8" width="2" height="1"/><rect x="745.6" y="219.8" width="1.5" height="1.5"/><rect x="752.8" y="224.5" width="1" height="1"/><rect x="756.7" y="246.3" width="1" height="1.5"/><rect x="751.3" y="233.8" width="2" height="1"/><rect x="762.0" y="223.7" width="1" height="1"/><rect x="753.9" y="219.5" width="1" height="1.5"/><rect x="741.6" y="237.7" width="1" height="1"/><rect x="746.0" y="230.1" width="2" height="1"/><rect x="749.3" y="239.2" width="1" height="1.5"/><rect x="752.9" y="221.0" width="1" height="1"/><rect x="754.8" y="236.8" width="1" height="1.5"/><rect x="745.3" y="245.2" width="2" height="1.5"/><rect x="764.9" y="225.4" width="1" height="1"/><rect x="754.9" y="228.1" width="1" height="1"/><rect x="742.9" y="217.7" width="1" height="1"/><rect x="762.7" y="220.2" width="2" height="1"/><rect x="736.7" y="215.2" width="2" height="1.5"/><rect x="764.4" y="241.2" width="1" height="1"/><rect x="766.0" y="239.0" width="1" height="1"/><rect x="738.7" y="221.9" width="1" height="1.5"/><rect x="760.5" y="234.8" width="1" height="1"/><rect x="765.8" y="232.0" width="1" height="1"/><rect x="750.1" y="242.9" width="1" height="1"/><rect x="771.5" y="237.2" width="1" height="1"/><rect x="738.2" y="222.8" width="1" height="1.5"/><rect x="737.6" y="238.4" width="2" height="1"/><rect x="737.5" y="228.0" width="1" height="1"/><rect x="761.9" y="242.1" width="2" height="1.5"/><rect x="750.1" y="217.5" width="1.5" height="1.5"/><rect x="751.4" y="216.0" width="2" height="1"/><rect x="731.0" y="233.4" width="1" height="1"/><rect x="744.0" y="213.8" width="1" height="1.5"/><rect x="767.1" y="242.3" width="1" height="1.5"/><rect x="743.6" y="228.2" width="1.5" height="1"/><rect x="759.7" y="233.5" width="1" height="1"/><rect x="757.5" y="230.5" width="1.5" height="1"/><rect x="740.7" y="216.6" width="2" height="1"/><rect x="747.8" y="232.8" width="1.5" height="1"/><rect x="759.8" y="220.5" width="1" height="1.5"/><rect x="754.7" y="224.9" width="1.5" height="1"/><rect x="747.4" y="220.8" width="1" height="1"/><rect x="763.1" y="246.7" width="2" height="1"/><rect x="748.2" y="248.1" width="1" height="1"/><rect x="748.5" y="222.9" width="1" height="1"/><rect x="768.1" y="227.8" width="1" height="1"/><rect x="753.1" y="235.2" width="1" height="1"/><rect x="734.3" y="234.0" width="1" height="1.5"/><rect x="756.0" y="214.2" width="1" height="1.5"/><rect x="733.2" y="218.8" width="2" height="1.5"/><rect x="772.7" y="233.3" width="1" height="1"/><rect x="751.1" y="221.6" width="1" height="1"/><rect x="740.5" y="233.2" width="1" height="1"/><rect x="757.4" y="246.3" width="1" height="1.5"/><rect x="753.4" y="238.8" width="1" height="1"/><rect x="758.8" y="227.4" width="2" height="1"/><rect x="736.8" y="238.4" width="1.5" height="1"/><rect x="745.3" y="225.7" width="1" height="1"/><rect x="758.6" y="222.5" width="1" height="1"/><rect x="738.2" y="221.7" width="1" height="1"/><rect x="761.6" y="227.0" width="2" height="1"/><rect x="761.3" y="217.6" width="1" height="1"/><rect x="738.5" y="231.4" width="1" height="1.5"/><rect x="740.5" y="233.5" width="1" height="1.5"/><rect x="772.8" y="241.2" width="1" height="1"/><rect x="763.4" y="231.9" width="1.5" height="1.5"/><rect x="753.7" y="220.3" width="1.5" height="1.5"/><rect x="752.8" y="235.1" width="1" height="1"/><rect x="748.7" y="224.3" width="1.5" height="1"/><rect x="745.5" y="238.4" width="2" height="1"/><rect x="754.4" y="241.0" width="1.5" height="1"/><rect x="766.4" y="224.0" width="1" height="1"/><rect x="750.8" y="221.7" width="1" height="1"/><rect x="753.3" y="240.8" width="1" height="1.5"/><rect x="755.7" y="215.2" width="1.5" height="1.5"/><rect x="753.2" y="243.2" width="2" height="1.5"/><rect x="747.8" y="230.6" width="1" height="1"/><rect x="732.7" y="232.5" width="1" height="1.5"/><rect x="747.8" y="229.5" width="1.5" height="1"/><rect x="754.4" y="238.0" width="1.5" height="1"/><rect x="745.9" y="231.2" width="2" height="1.5"/><rect x="760.8" y="220.6" width="2" height="1"/><rect x="770.0" y="235.9" width="1" height="1"/><rect x="731.4" y="225.0" width="1" height="1.5"/><rect x="753.7" y="244.3" width="1" height="1.5"/><rect x="773.1" y="235.5" width="1" height="1"/><rect x="760.1" y="239.2" width="1.5" height="1.5"/><rect x="744.8" y="244.9" width="1" height="1.5"/><rect x="734.3" y="234.4" width="1.5" height="1.5"/><rect x="734.6" y="217.2" width="1.5" height="1.5"/><rect x="758.0" y="222.9" width="1" height="1"/><rect x="755.1" y="247.8" width="1.5" height="1"/><rect x="756.2" y="241.3" width="1" height="1.5"/><rect x="773.0" y="240.0" width="1.5" height="1"/><rect x="754.0" y="246.3" width="1" height="1.5"/><rect x="733.7" y="234.9" width="1" height="1.5"/><rect x="739.0" y="228.1" width="1" height="1.5"/><rect x="744.3" y="231.0" width="1" height="1"/><rect x="758.7" y="238.1" width="1" height="1"/><rect x="755.2" y="237.1" width="1" height="1.5"/><rect x="772.0" y="242.5" width="1" height="1.5"/><rect x="736.4" y="227.2" width="1" height="1.5"/><rect x="771.6" y="235.1" width="2" height="1.5"/><rect x="735.9" y="220.8" width="2" height="1"/><rect x="735.0" y="237.2" width="1" height="1.5"/><rect x="749.7" y="213.6" width="1" height="1"/><rect x="743.6" y="227.7" width="2" height="1.5"/><rect x="767.3" y="229.7" width="1" height="1.5"/><rect x="753.6" y="234.9" width="1" height="1"/><rect x="742.1" y="238.0" width="1" height="1"/><rect x="748.6" y="218.9" width="1.5" height="1.5"/><rect x="763.7" y="244.3" width="1" height="1"/><rect x="738.9" y="222.5" width="2" height="1"/><rect x="771.1" y="243.2" width="1" height="1"/><rect x="747.0" y="215.5" width="1" height="1"/><rect x="745.4" y="217.3" width="1.5" height="1"/><rect x="744.5" y="222.6" width="1" height="1"/><rect x="766.2" y="224.1" width="1" height="1.5"/><rect x="732.0" y="231.3" width="2" height="1"/><rect x="766.4" y="235.7" width="1" height="1.5"/><rect x="744.4" y="239.9" width="2" height="1"/><rect x="760.1" y="220.1" width="1.5" height="1.5"/><rect x="753.4" y="213.0" width="1.5" height="1"/><rect x="754.6" y="241.9" width="1.5" height="1.5"/><rect x="769.3" y="227.3" width="1.5" height="1.5"/><rect x="747.3" y="240.6" width="2" height="1.5"/><rect x="745.2" y="241.5" width="1" height="1"/><rect x="745.1" y="216.5" width="1" height="1"/><rect x="768.4" y="237.7" width="1.5" height="1.5"/><rect x="751.4" y="241.4" width="1" height="1"/><rect x="765.5" y="237.4" width="2" height="1"/><rect x="761.0" y="244.1" width="1" height="1"/><rect x="749.9" y="221.7" width="2" height="1.5"/><rect x="778.1" y="238.4" width="1" height="1.5"/><rect x="749.9" y="229.2" width="1" height="1"/><rect x="748.1" y="219.9" width="1" height="1"/><rect x="756.3" y="223.4" width="1" height="1.5"/><rect x="751.6" y="213.7" width="1.5" height="1.5"/><rect x="741.9" y="220.6" width="1" height="1.5"/><rect x="741.1" y="240.7" width="1.5" height="1"/><rect x="754.7" y="243.6" width="1.5" height="1.5"/><rect x="763.2" y="220.0" width="1" height="1"/><rect x="745.4" y="231.9" width="2" height="1.5"/><rect x="731.4" y="231.1" width="1.5" height="1"/><rect x="774.7" y="236.8" width="2" height="1"/><rect x="758.9" y="243.8" width="1.5" height="1.5"/><rect x="748.5" y="247.5" width="1.5" height="1.5"/><rect x="759.4" y="246.2" width="1.5" height="1.5"/><rect x="742.4" y="235.5" width="1" height="1"/><rect x="755.9" y="216.9" width="1" height="1"/><rect x="761.9" y="236.5" width="1.5" height="1"/><rect x="765.9" y="233.4" width="1" height="1"/><rect x="755.5" y="246.6" width="1" height="1"/><rect x="756.3" y="224.8" width="1.5" height="1"/><rect x="754.1" y="244.2" width="2" height="1.5"/><rect x="762.8" y="238.7" width="1" height="1.5"/><rect x="769.6" y="242.1" width="2" height="1"/><rect x="733.5" y="231.0" width="1" height="1"/><rect x="761.5" y="239.4" width="1" height="1"/><rect x="737.0" y="235.2" width="1.5" height="1"/><rect x="766.1" y="246.1" width="1" height="1.5"/><rect x="767.5" y="240.4" width="1" height="1"/><rect x="751.5" y="212.1" width="1" height="1"/><rect x="762.0" y="238.5" width="1.5" height="1"/><rect x="753.3" y="226.6" width="1" height="1.5"/><rect x="751.5" y="213.9" width="1" height="1"/><rect x="744.7" y="218.9" width="1" height="1.5"/><rect x="769.2" y="243.3" width="2" height="1"/><rect x="766.4" y="241.6" width="1" height="1"/><rect x="764.7" y="241.5" width="1" height="1"/><rect x="771.9" y="239.3" width="1" height="1.5"/><rect x="737.3" y="235.6" width="1" height="1"/><rect x="735.6" y="237.2" width="2" height="1"/><rect x="751.7" y="226.3" width="1" height="1"/><rect x="745.5" y="245.1" width="1" height="1"/><rect x="759.0" y="226.3" width="1" height="1.5"/><rect x="771.3" y="229.4" width="1.5" height="1"/><rect x="752.6" y="213.2" width="1" height="1"/><rect x="748.4" y="225.3" width="1" height="1"/><rect x="741.5" y="238.8" width="1.5" height="1"/><rect x="767.7" y="235.6" width="1" height="1"/><rect x="752.9" y="226.7" width="2" height="1"/><rect x="757.2" y="236.8" width="2" height="1.5"/><rect x="753.2" y="213.0" width="2" height="1"/><rect x="759.6" y="228.7" width="2" height="1.5"/><rect x="749.0" y="238.6" width="1" height="1.5"/><rect x="739.9" y="231.2" width="1" height="1"/><rect x="731.0" y="232.0" width="2" height="1"/><rect x="752.0" y="247.2" width="1" height="1"/><rect x="754.6" y="215.5" width="1.5" height="1"/><rect x="733.8" y="225.8" width="2" height="1"/><rect x="749.5" y="223.4" width="1" height="1"/><rect x="746.4" y="237.7" width="2" height="1"/><rect x="739.7" y="231.0" width="1" height="1"/><rect x="766.2" y="230.9" width="1.5" height="1.5"/><rect x="736.4" y="233.1" width="2" height="1"/><rect x="764.6" y="226.3" width="1" height="1"/><rect x="754.7" y="232.4" width="1.5" height="1"/><rect x="754.1" y="231.5" width="1" height="1.5"/><rect x="757.0" y="234.4" width="1.5" height="1.5"/><rect x="733.3" y="231.0" width="1" height="1.5"/><rect x="770.2" y="233.8" width="1.5" height="1"/><rect x="733.4" y="223.1" width="1.5" height="1.5"/><rect x="758.0" y="223.8" width="1" height="1.5"/><rect x="754.3" y="231.7" width="1.5" height="1"/><rect x="750.1" y="247.5" width="2" height="1"/><rect x="748.8" y="237.7" width="1" height="1"/><rect x="756.1" y="238.1" width="2" height="1.5"/><rect x="734.6" y="231.5" width="1.5" height="1"/><rect x="743.5" y="232.1" width="1.5" height="1.5"/><rect x="731.5" y="230.9" width="1" height="1"/><rect x="749.4" y="240.3" width="1" height="1"/><rect x="761.8" y="230.5" width="1" height="1.5"/><rect x="760.3" y="223.8" width="1" height="1"/><rect x="759.8" y="231.0" width="1" height="1.5"/><rect x="753.1" y="246.2" width="2" height="1.5"/><rect x="758.2" y="229.7" width="1.5" height="1.5"/><rect x="743.1" y="229.1" width="1" height="1"/><rect x="769.9" y="234.0" width="2" height="1"/><rect x="754.6" y="218.4" width="1.5" height="1"/><rect x="769.6" y="231.6" width="1" height="1"/><rect x="752.9" y="241.8" width="2" height="1"/><rect x="758.4" y="220.0" width="1.5" height="1"/><rect x="765.0" y="232.3" width="1" height="1.5"/><rect x="741.8" y="219.4" width="2" height="1.5"/><rect x="748.0" y="212.1" width="1.5" height="1"/><rect x="747.6" y="230.6" width="2" height="1"/><rect x="744.7" y="228.6" width="2" height="1"/><rect x="738.7" y="230.3" width="1" height="1.5"/><rect x="735.8" y="214.7" width="1" height="1"/><rect x="744.7" y="226.5" width="2" height="1"/><rect x="744.6" y="231.4" width="1" height="1"/><rect x="751.0" y="215.7" width="2" height="1"/><rect x="743.0" y="232.9" width="2" height="1"/><rect x="744.5" y="225.1" width="2" height="1.5"/><rect x="737.1" y="215.5" width="1" height="1"/><rect x="754.4" y="222.1" width="2" height="1"/><rect x="756.9" y="227.1" width="1" height="1.5"/><rect x="752.6" y="238.1" width="2" height="1"/><rect x="754.7" y="239.6" width="1.5" height="1"/><rect x="744.3" y="230.3" width="1" height="1.5"/><rect x="757.6" y="228.7" width="2" height="1.5"/><rect x="736.2" y="228.4" width="1" height="1"/><rect x="747.1" y="233.6" width="1" height="1"/><rect x="748.0" y="246.7" width="1" height="1"/><rect x="760.1" y="223.9" width="1" height="1"/><rect x="772.4" y="238.5" width="1.5" height="1.5"/><rect x="744.9" y="244.8" width="2" height="1.5"/><rect x="765.7" y="236.4" width="2" height="1.5"/><rect x="743.5" y="242.8" width="1.5" height="1"/><rect x="744.9" y="220.3" width="1" height="1"/><rect x="766.1" y="245.1" width="1" height="1.5"/><rect x="743.8" y="238.1" width="1.5" height="1.5"/><rect x="767.7" y="229.3" width="2" height="1"/><rect x="767.8" y="229.9" width="1.5" height="1"/><rect x="755.5" y="226.9" width="2" height="1"/><rect x="735.6" y="223.6" width="1" height="1"/><rect x="751.1" y="243.8" width="1.5" height="1"/><rect x="763.9" y="240.6" width="2" height="1"/><rect x="774.1" y="239.5" width="1.5" height="1"/><rect x="763.2" y="240.8" width="2" height="1"/><rect x="759.1" y="222.0" width="1.5" height="1.5"/><rect x="756.9" y="221.7" width="1" height="1"/><rect x="753.5" y="230.8" width="1" height="1"/><rect x="741.3" y="240.3" width="1.5" height="1.5"/><rect x="754.9" y="221.1" width="1.5" height="1.5"/><rect x="756.9" y="213.9" width="1" height="1"/><rect x="753.5" y="243.4" width="2" height="1"/><rect x="749.8" y="247.3" width="2" height="1.5"/><rect x="776.3" y="235.5" width="1" height="1"/><rect x="749.6" y="246.2" width="1" height="1.5"/><rect x="740.0" y="238.4" width="2" height="1"/><rect x="753.8" y="246.7" width="1" height="1.5"/><rect x="761.9" y="239.6" width="1" height="1.5"/><rect x="741.8" y="238.3" width="1" height="1"/><rect x="773.6" y="232.9" width="1.5" height="1.5"/><rect x="770.8" y="241.9" width="1" height="1"/><rect x="756.8" y="227.5" width="1" height="1"/><rect x="762.5" y="228.4" width="2" height="1"/><rect x="740.5" y="216.4" width="2" height="1.5"/><rect x="758.3" y="239.1" width="1.5" height="1.5"/><rect x="755.3" y="243.7" width="1.5" height="1"/><rect x="748.6" y="213.8" width="1" height="1.5"/><rect x="750.7" y="225.0" width="1" height="1"/><rect x="747.4" y="220.0" width="1.5" height="1"/><rect x="766.8" y="236.3" width="1" height="1"/><rect x="752.4" y="225.1" width="1.5" height="1"/><rect x="766.1" y="243.1" width="1" height="1"/><rect x="742.7" y="238.1" width="1.5" height="1.5"/><rect x="754.6" y="226.4" width="1" height="1.5"/><rect x="754.2" y="246.9" width="1.5" height="1"/><rect x="749.9" y="244.2" width="1" height="1"/><rect x="749.9" y="238.7" width="1" height="1.5"/><rect x="750.0" y="232.9" width="2" height="1"/><rect x="747.6" y="237.1" width="1.5" height="1.5"/><rect x="737.3" y="226.6" width="1" height="1.5"/><rect x="737.1" y="227.5" width="1" height="1"/><rect x="769.9" y="245.9" width="1" height="1.5"/><rect x="732.8" y="228.6" width="2" height="1"/><rect x="747.5" y="242.1" width="1.5" height="1"/><rect x="739.0" y="217.4" width="2" height="1"/><rect x="749.7" y="223.2" width="1.5" height="1"/><rect x="766.3" y="224.2" width="1" height="1.5"/><rect x="742.6" y="229.6" width="2" height="1"/><rect x="745.0" y="240.0" width="1.5" height="1"/><rect x="737.8" y="218.7" width="1.5" height="1.5"/><rect x="745.5" y="218.5" width="1" height="1"/><rect x="756.3" y="215.7" width="1.5" height="1.5"/><rect x="744.1" y="228.2" width="1" height="1"/><rect x="759.4" y="243.4" width="1.5" height="1"/><rect x="737.5" y="234.9" width="1.5" height="1.5"/><rect x="754.9" y="237.2" width="1.5" height="1.5"/><rect x="776.7" y="238.7" width="1" height="1"/><rect x="757.6" y="225.4" width="1.5" height="1.5"/><rect x="747.2" y="243.4" width="1" height="1.5"/><rect x="739.1" y="231.0" width="1" height="1.5"/><rect x="746.1" y="221.9" width="2" height="1"/><rect x="759.3" y="223.4" width="1" height="1"/><rect x="748.2" y="227.1" width="1.5" height="1"/><rect x="753.7" y="217.4" width="1" height="1"/><rect x="760.8" y="247.0" width="1" height="1.5"/><rect x="729.9" y="231.9" width="2" height="1"/><rect x="755.4" y="217.4" width="1.5" height="1"/><rect x="741.1" y="234.0" width="1" height="1"/><rect x="754.7" y="213.0" width="1" height="1"/><rect x="733.8" y="215.5" width="1" height="1"/><rect x="744.3" y="216.4" width="2" height="1"/></g>
<polygon points="500.0,319.0 553.0,305.0 552.0,349.0 545.0,357.5" fill="#ff0000" stroke="#ff0000" stroke-width="0.7"/>
<g fill="#ff0000"><rect x="560.5" y="330.9" width="2" height="1"/><rect x="558.7" y="317.9" width="2" height="1.5"/><rect x="556.2" y="328.2" width="1" height="1"/><rect x="550.8" y="320.4" width="1" height="1"/><rect x="559.4" y="334.7" width="1.5" height="1"/><rect x="561.5" y="313.0" width="1.5" height="1.5"/><rect x="565.3" y="321.3" width="1.5" height="1.5"/><rect x="558.1" y="325.1" width="1" height="1.5"/><rect x="555.4" y="315.0" width="2" height="1"/><rect x="556.1" y="332.5" width="1.5" height="1"/><rect x="561.3" y="315.2" width="1" height="1"/><rect x="562.0" y="318.9" width="1.5" height="1"/><rect x="555.9" y="327.3" width="1" height="1"/><rect x="564.2" y="321.8" width="1.5" height="1.5"/><rect x="555.5" y="321.9" width="2" height="1.5"/><rect x="551.6" y="320.4" width="1" height="1.5"/><rect x="565.1" y="312.1" width="1" height="1"/><rect x="564.4" y="311.8" width="2" height="1.5"/><rect x="564.9" y="312.6" width="2" height="1.5"/><rect x="566.5" y="318.3" width="1" height="1"/><rect x="561.1" y="319.0" width="1" height="1"/><rect x="551.5" y="322.0" width="1" height="1"/><rect x="554.4" y="324.9" width="1" height="1.5"/><rect x="562.6" y="320.9" width="2" height="1"/><rect x="564.1" y="315.4" width="1.5" height="1.5"/><rect x="564.8" y="323.6" width="1" height="1.5"/><rect x="558.4" y="335.8" width="2" height="1.5"/><rect x="560.0" y="328.7" width="1" height="1"/><rect x="548.1" y="315.9" width="1" height="1.5"/><rect x="566.1" y="320.6" width="2" height="1"/><rect x="569.7" y="329.4" width="2" height="1.5"/><rect x="547.7" y="316.7" width="1" height="1"/><rect x="562.2" y="326.2" width="1" height="1.5"/><rect x="551.7" y="315.8" width="1" height="1"/><rect x="563.0" y="317.6" width="1.5" height="1.5"/><rect x="555.6" y="322.7" width="1" height="1"/><rect x="549.6" y="316.5" width="1.5" height="1.5"/><rect x="550.8" y="322.2" width="1" height="1.5"/><rect x="560.0" y="312.9" width="1.5" height="1"/><rect x="557.1" y="319.1" width="1.5" height="1"/><rect x="553.9" y="315.4" width="1.5" height="1"/><rect x="562.9" y="320.5" width="1" height="1"/><rect x="552.3" y="325.4" width="1.5" height="1"/><rect x="559.7" y="312.9" width="1" height="1"/><rect x="562.5" y="321.6" width="1.5" height="1"/><rect x="563.3" y="311.5" width="1" height="1"/><rect x="562.4" y="329.2" width="1" height="1.5"/><rect x="554.2" y="321.1" width="1" height="1.5"/><rect x="563.2" y="319.7" width="2" height="1.5"/><rect x="564.4" y="330.0" width="2" height="1"/><rect x="557.2" y="316.6" width="1" height="1"/><rect x="548.5" y="317.9" width="1" height="1"/><rect x="563.9" y="314.9" width="1" height="1"/><rect x="557.7" y="329.4" width="2" height="1"/><rect x="558.8" y="331.9" width="1.5" height="1.5"/><rect x="550.5" y="320.2" width="2" height="1"/><rect x="558.6" y="323.5" width="1.5" height="1"/><rect x="563.1" y="315.4" width="2" height="1"/><rect x="567.8" y="330.8" width="1" height="1"/><rect x="556.8" y="333.5" width="1" height="1.5"/><rect x="563.0" y="313.2" width="2" height="1"/><rect x="558.4" y="320.9" width="1.5" height="1"/><rect x="556.4" y="333.6" width="1" height="1"/><rect x="565.4" y="320.0" width="1" height="1"/><rect x="552.8" y="318.8" width="2" height="1.5"/><rect x="566.5" y="325.8" width="1" height="1"/><rect x="561.4" y="319.9" width="1" height="1"/><rect x="565.2" y="322.2" width="1" height="1"/><rect x="567.3" y="321.6" width="1" height="1"/><rect x="559.9" y="323.3" width="1" height="1"/><rect x="553.0" y="314.6" width="2" height="1"/><rect x="563.8" y="325.9" width="2" height="1"/><rect x="566.4" y="325.2" width="1" height="1"/><rect x="564.0" y="313.4" width="1" height="1"/><rect x="563.2" y="321.5" width="1.5" height="1"/><rect x="553.4" y="321.8" width="1.5" height="1"/><rect x="565.6" y="316.4" width="1" height="1"/><rect x="569.2" y="327.0" width="1" height="1.5"/><rect x="561.0" y="324.4" width="1.5" height="1"/><rect x="565.5" y="318.1" width="1.5" height="1"/><rect x="548.0" y="317.5" width="2" height="1"/><rect x="563.8" y="324.2" width="1.5" height="1"/><rect x="555.2" y="324.7" width="1.5" height="1.5"/><rect x="555.9" y="314.1" width="2" height="1"/><rect x="559.2" y="335.6" width="2" height="1"/><rect x="549.7" y="321.3" width="1" height="1.5"/><rect x="555.0" y="315.7" width="1" height="1"/><rect x="560.8" y="315.3" width="2" height="1"/><rect x="556.2" y="320.9" width="1.5" height="1"/><rect x="562.3" y="329.0" width="2" height="1.5"/><rect x="564.8" y="321.4" width="1.5" height="1"/><rect x="558.6" y="334.9" width="1" height="1"/><rect x="552.6" y="319.5" width="1.5" height="1.5"/><rect x="554.0" y="319.3" width="1" height="1"/><rect x="558.5" y="332.0" width="2" height="1"/><rect x="559.6" y="335.0" width="2" height="1"/><rect x="568.6" y="327.5" width="1" height="1.5"/><rect x="556.5" y="319.5" width="1" height="1.5"/><rect x="557.3" y="325.0" width="1.5" height="1"/><rect x="555.4" y="327.3" width="2" height="1"/><rect x="562.0" y="314.6" width="1.5" height="1.5"/><rect x="552.4" y="319.1" width="2" height="1"/><rect x="559.1" y="316.8" width="1" height="1.5"/><rect x="565.0" y="318.5" width="1" height="1"/><rect x="564.0" y="311.7" width="1" height="1"/><rect x="559.7" y="319.8" width="1" height="1"/><rect x="555.1" y="319.9" width="1" height="1.5"/><rect x="550.9" y="322.4" width="1" height="1.5"/><rect x="559.5" y="333.7" width="1.5" height="1"/><rect x="555.1" y="322.0" width="1" height="1"/><rect x="554.4" y="326.7" width="2" height="1"/><rect x="555.5" y="331.7" width="2" height="1.5"/><rect x="559.8" y="335.7" width="2" height="1"/><rect x="554.6" y="325.0" width="2" height="1.5"/><rect x="552.0" y="321.5" width="1.5" height="1"/><rect x="568.9" y="326.1" width="1" height="1.5"/><rect x="560.7" y="331.1" width="1" height="1"/><rect x="562.8" y="328.9" width="1" height="1.5"/><rect x="553.0" y="323.1" width="1" height="1.5"/><rect x="563.5" y="322.8" width="1.5" height="1"/><rect x="563.7" y="315.0" width="1" height="1"/><rect x="551.4" y="323.4" width="1" height="1"/><rect x="554.2" y="320.3" width="1" height="1.5"/><rect x="563.3" y="317.6" width="1" height="1"/><rect x="558.7" y="313.1" width="2" height="1"/><rect x="564.4" y="322.9" width="2" height="1"/><rect x="565.5" y="324.2" width="2" height="1"/><rect x="559.1" y="330.1" width="1" height="1"/><rect x="560.4" y="332.5" width="2" height="1.5"/><rect x="555.3" y="330.5" width="1" height="1"/><rect x="555.7" y="328.9" width="2" height="1"/><rect x="554.6" y="315.7" width="1" height="1.5"/><rect x="560.9" y="323.0" width="1" height="1.5"/><rect x="569.0" y="329.7" width="1" height="1"/><rect x="567.7" y="328.4" width="1" height="1"/><rect x="559.0" y="334.3" width="2" height="1.5"/><rect x="552.9" y="324.8" width="2" height="1.5"/><rect x="552.6" y="318.0" width="1" height="1"/><rect x="547.6" y="316.4" width="1" height="1"/><rect x="565.6" y="325.8" width="1.5" height="1"/><rect x="553.3" y="316.9" width="1" height="1"/><rect x="552.8" y="323.2" width="1" height="1"/><rect x="551.5" y="319.0" width="1.5" height="1"/><rect x="548.6" y="318.6" width="1.5" height="1"/><rect x="553.6" y="321.2" width="1.5" height="1.5"/><rect x="563.3" y="322.2" width="1.5" height="1.5"/><rect x="551.7" y="316.3" width="1" height="1.5"/><rect x="566.2" y="325.3" width="1" height="1"/><rect x="564.1" y="324.5" width="2" height="1"/><rect x="561.4" y="327.1" width="2" height="1"/><rect x="549.8" y="321.8" width="2" height="1"/><rect x="562.9" y="333.6" width="1.5" height="1.5"/><rect x="562.4" y="319.3" width="1" height="1.5"/><rect x="559.3" y="329.2" width="1" height="1"/><rect x="550.9" y="321.3" width="1.5" height="1.5"/><rect x="551.0" y="320.4" width="1" height="1"/><rect x="555.4" y="332.0" width="1" height="1"/><rect x="556.5" y="322.5" width="1" height="1.5"/><rect x="554.0" y="322.3" width="2" height="1.5"/><rect x="559.2" y="318.4" width="2" height="1.5"/><rect x="558.3" y="327.8" width="1.5" height="1"/><rect x="560.6" y="313.6" width="1" height="1.5"/><rect x="560.0" y="327.9" width="2" height="1.5"/><rect x="565.4" y="319.1" width="2" height="1.5"/><rect x="551.3" y="323.8" width="1" height="1.5"/><rect x="568.8" y="329.6" width="1" height="1"/></g>
<path d="M545 315 L585 303.8 L595 320 L557.5 340" stroke="#ff0000" stroke-width="0.8" fill="none"/>
<path d="M553 345 L577 352 L582 362 L566 368 M560 348 l3 14 M575 357 l-12 4" stroke="#ff0000" stroke-width="0.7" fill="none"/>
<g fill="#ff0000"><rect x="558.8" y="352.4" width="1.5" height="1.5"/><rect x="559.0" y="350.0" width="2" height="1.5"/><rect x="557.3" y="352.2" width="1" height="1"/><rect x="559.0" y="352.6" width="1" height="1"/><rect x="558.8" y="354.7" width="1" height="1"/><rect x="556.7" y="349.6" width="2" height="1"/><rect x="557.4" y="350.2" width="1.5" height="1.5"/><rect x="558.9" y="347.2" width="2" height="1.5"/><rect x="558.8" y="341.8" width="1.5" height="1"/><rect x="557.4" y="353.1" width="1.5" height="1"/><rect x="557.3" y="350.7" width="1.5" height="1"/><rect x="559.5" y="346.3" width="1" height="1"/><rect x="560.9" y="350.6" width="2" height="1.5"/><rect x="559.6" y="345.2" width="1" height="1.5"/><rect x="557.2" y="353.6" width="1.5" height="1.5"/><rect x="554.1" y="347.2" width="2" height="1"/><rect x="554.9" y="344.4" width="1" height="1"/><rect x="555.5" y="346.9" width="1.5" height="1"/><rect x="558.4" y="344.3" width="2" height="1"/><rect x="555.6" y="345.9" width="1" height="1"/><rect x="558.5" y="349.3" width="1" height="1"/><rect x="562.6" y="343.9" width="1" height="1"/><rect x="562.5" y="353.1" width="1.5" height="1"/><rect x="559.6" y="344.1" width="1" height="1"/><rect x="558.3" y="348.2" width="1.5" height="1"/><rect x="554.6" y="346.5" width="1.5" height="1"/><rect x="559.6" y="351.7" width="1.5" height="1"/><rect x="560.6" y="349.1" width="1" height="1"/><rect x="558.0" y="353.0" width="1" height="1"/><rect x="558.6" y="345.0" width="1" height="1.5"/><rect x="559.6" y="344.5" width="1" height="1.5"/><rect x="558.5" y="352.2" width="1" height="1"/><rect x="561.2" y="344.8" width="1.5" height="1.5"/><rect x="554.7" y="344.2" width="2" height="1.5"/><rect x="561.9" y="346.9" width="1.5" height="1"/><rect x="560.3" y="343.7" width="1" height="1"/><rect x="564.0" y="352.6" width="1" height="1"/></g>
<polygon points="440.0,291.5 452.0,287.0 461.7,282.8 455.9,293.0 440.0,294.4" fill="#ff0000" stroke="#ff0000" stroke-width="0.7"/>
<polygon points="445.0,306.0 449.0,304.0 452.0,316.0 447.0,318.0" fill="#ff0000" fill-opacity="0.8"/>
<polygon points="465.0,314.0 478.0,311.0 478.0,325.0 468.0,325.0" fill="#ff0000" fill-opacity="0.9"/>
<g fill="#ff0000"><rect x="499.2" y="263.8" width="1" height="1"/><rect x="499.4" y="272.2" width="1" height="1.5"/><rect x="500.0" y="280.2" width="1" height="1"/><rect x="489.4" y="277.3" width="1" height="1.5"/><rect x="505.2" y="271.1" width="1" height="1.5"/><rect x="504.3" y="269.0" width="1" height="1.5"/><rect x="497.1" y="272.2" width="1" height="1.5"/><rect x="496.3" y="276.6" width="1.5" height="1"/><rect x="499.4" y="265.5" width="1" height="1"/><rect x="492.4" y="274.9" width="1.5" height="1"/><rect x="502.9" y="270.2" width="2" height="1"/><rect x="503.6" y="274.3" width="2" height="1"/><rect x="488.5" y="271.8" width="1" height="1"/><rect x="504.3" y="277.8" width="1.5" height="1"/><rect x="495.0" y="269.0" width="1" height="1"/><rect x="503.6" y="277.9" width="2" height="1.5"/><rect x="502.8" y="274.9" width="1.5" height="1.5"/><rect x="506.0" y="271.7" width="1.5" height="1"/><rect x="491.6" y="279.2" width="1" height="1"/><rect x="496.3" y="272.8" width="2" height="1.5"/><rect x="489.3" y="269.7" width="1" height="1"/><rect x="497.5" y="265.5" width="2" height="1.5"/><rect x="490.0" y="278.7" width="1.5" height="1"/><rect x="495.1" y="265.5" width="1" height="1.5"/><rect x="490.4" y="265.7" width="1" height="1"/><rect x="498.6" y="267.9" width="2" height="1"/><rect x="498.6" y="272.9" width="1" height="1"/><rect x="492.1" y="277.8" width="1" height="1.5"/><rect x="496.6" y="264.9" width="1.5" height="1.5"/><rect x="504.9" y="270.6" width="1" height="1"/><rect x="503.4" y="269.9" width="1.5" height="1.5"/><rect x="487.7" y="266.1" width="2" height="1"/><rect x="502.1" y="274.7" width="1.5" height="1.5"/><rect x="493.6" y="271.3" width="1" height="1.5"/><rect x="492.0" y="267.8" width="1" height="1.5"/><rect x="489.3" y="270.0" width="1.5" height="1"/><rect x="496.5" y="275.7" width="1" height="1"/><rect x="504.5" y="269.7" width="1" height="1"/><rect x="493.2" y="271.9" width="1.5" height="1"/><rect x="502.8" y="270.6" width="1.5" height="1"/><rect x="495.5" y="267.5" width="1" height="1"/><rect x="499.1" y="277.5" width="1.5" height="1.5"/><rect x="498.7" y="270.5" width="1" height="1"/><rect x="490.2" y="267.8" width="1" height="1"/><rect x="498.6" y="272.9" width="1" height="1"/><rect x="501.1" y="273.3" width="1.5" height="1"/><rect x="500.5" y="280.1" width="1" height="1.5"/><rect x="490.2" y="270.1" width="2" height="1.5"/><rect x="504.4" y="270.8" width="1" height="1"/><rect x="493.9" y="272.8" width="2" height="1.5"/><rect x="495.4" y="267.2" width="1.5" height="1.5"/><rect x="494.2" y="265.1" width="2" height="1"/><rect x="491.4" y="266.6" width="2" height="1.5"/><rect x="502.7" y="279.0" width="2" height="1"/><rect x="491.6" y="269.8" width="2" height="1.5"/><rect x="497.2" y="274.1" width="1" height="1"/><rect x="500.9" y="278.6" width="2" height="1"/><rect x="493.2" y="267.5" width="1" height="1"/><rect x="500.6" y="269.1" width="1.5" height="1.5"/><rect x="495.1" y="277.6" width="1.5" height="1"/><rect x="497.1" y="278.9" width="1" height="1"/><rect x="493.3" y="265.4" width="2" height="1.5"/><rect x="503.4" y="273.1" width="1" height="1"/><rect x="490.6" y="277.3" width="1" height="1.5"/><rect x="490.9" y="281.2" width="1" height="1"/><rect x="502.9" y="278.9" width="1" height="1"/><rect x="504.9" y="273.9" width="1.5" height="1"/><rect x="501.9" y="266.8" width="1" height="1"/><rect x="503.9" y="272.3" width="1.5" height="1"/><rect x="499.8" y="277.2" width="1" height="1"/><rect x="493.1" y="265.2" width="1.5" height="1.5"/><rect x="507.5" y="271.8" width="2" height="1.5"/><rect x="504.5" y="270.9" width="1" height="1.5"/><rect x="493.3" y="273.8" width="1.5" height="1.5"/><rect x="503.0" y="271.2" width="2" height="1"/><rect x="501.0" y="266.6" width="2" height="1.5"/><rect x="499.2" y="277.7" width="1.5" height="1"/><rect x="501.9" y="276.8" width="1" height="1"/><rect x="492.0" y="273.2" width="1" height="1"/><rect x="495.0" y="269.3" width="2" height="1"/><rect x="494.0" y="267.3" width="1" height="1"/><rect x="491.6" y="272.6" width="1" height="1.5"/><rect x="492.4" y="276.3" width="1.5" height="1"/><rect x="493.9" y="272.2" width="1.5" height="1"/><rect x="493.7" y="264.6" width="1.5" height="1.5"/><rect x="490.7" y="273.4" width="1" height="1.5"/><rect x="499.2" y="269.6" width="2" height="1"/><rect x="498.5" y="278.0" width="1" height="1"/><rect x="500.1" y="268.4" width="1.5" height="1"/><rect x="497.2" y="265.5" width="2" height="1"/><rect x="500.7" y="265.4" width="1" height="1"/><rect x="489.1" y="267.8" width="1.5" height="1.5"/><rect x="502.3" y="270.9" width="1" height="1"/><rect x="491.9" y="276.3" width="1" height="1"/><rect x="490.6" y="270.5" width="1.5" height="1"/><rect x="506.5" y="271.4" width="1.5" height="1"/><rect x="498.4" y="279.6" width="2" height="1.5"/><rect x="500.9" y="272.0" width="1" height="1.5"/><rect x="494.5" y="273.8" width="1" height="1"/><rect x="501.0" y="278.0" width="1" height="1"/><rect x="498.0" y="265.1" width="2" height="1.5"/><rect x="494.0" y="273.4" width="1.5" height="1.5"/><rect x="499.0" y="277.9" width="1" height="1"/></g>
<polygon points="640.0,218.6 676.8,200.7 680.8,208.7 643.0,226.6" fill="#000" stroke="#000" stroke-width="0.7"/>
<polygon points="608.0,234.5 617.5,233.5 618.5,243.0 609.0,244.0" fill="#000" stroke="#000" stroke-width="0.7"/>
<polygon points="547.0,277.0 640.0,248.5 714.6,219.6 737.5,242.5 745.0,257.5 765.0,265.0 787.5,272.5 790.0,280.0 777.0,281.0 752.0,281.0 742.0,284.0 712.0,289.0 708.0,253.0 703.0,254.5 702.5,262.0 600.0,292.4 480.0,325.0" fill="#00ff00" stroke="#00ff00" stroke-width="0.7"/>
<polygon points="458.8,287.2 479.0,280.7 480.5,287.2 489.2,284.3 489.9,280.0 515.2,271.3 518.8,274.2 521.0,284.3 528.0,283.0 547.0,277.0 560.0,273.0 480.0,325.0 477.5,325.0" fill="#00ff00" stroke="#00ff00" stroke-width="0.7"/>
<polygon points="503.6,239.5 522.4,234.0 530.4,240.9 534.0,253.9 541.2,252.5 544.0,259.7 556.0,255.0 562.0,272.0 528.2,283.0 527.0,268.0 518.0,268.0 510.8,266.9" fill="#00ff00" stroke="#00ff00" stroke-width="0.7"/>
<polygon points="506.5,241.5 520.0,237.5 525.0,258.0 512.0,265.0" fill="#000" fill-opacity="0.72"/>
<path d="M486.3 244.5 L497.8 241.6" stroke="#00ff00" stroke-width="0.8"/>
<g fill="#00ff00"><rect x="565.8" y="252.3" width="1" height="1"/><rect x="555.2" y="256.1" width="1" height="1"/><rect x="564.8" y="252.3" width="1" height="1"/><rect x="569.5" y="264.8" width="2" height="1.5"/><rect x="566.4" y="267.1" width="1" height="1.5"/><rect x="556.9" y="236.1" width="1" height="1"/><rect x="558.8" y="250.4" width="1" height="1"/><rect x="565.2" y="247.4" width="1" height="1"/><rect x="555.4" y="236.4" width="1" height="1.5"/><rect x="568.1" y="262.2" width="1" height="1"/><rect x="567.7" y="265.5" width="1.5" height="1.5"/><rect x="560.4" y="239.3" width="2" height="1"/><rect x="563.4" y="267.1" width="1" height="1.5"/><rect x="569.4" y="258.1" width="1.5" height="1"/><rect x="556.1" y="258.8" width="2" height="1.5"/><rect x="560.4" y="239.1" width="1.5" height="1"/><rect x="561.2" y="237.1" width="1" height="1.5"/><rect x="559.1" y="266.8" width="1" height="1"/><rect x="554.8" y="231.6" width="2" height="1"/><rect x="555.7" y="237.5" width="1" height="1"/><rect x="558.5" y="248.6" width="1" height="1"/><rect x="563.7" y="264.1" width="1" height="1.5"/><rect x="566.9" y="260.4" width="2" height="1"/><rect x="562.9" y="270.6" width="1" height="1"/><rect x="571.5" y="263.7" width="1" height="1"/><rect x="561.6" y="258.7" width="2" height="1.5"/><rect x="552.4" y="236.1" width="1" height="1"/><rect x="557.6" y="230.0" width="2" height="1.5"/><rect x="568.4" y="256.1" width="1.5" height="1"/><rect x="552.5" y="231.6" width="2" height="1"/><rect x="551.9" y="251.0" width="1" height="1.5"/><rect x="563.3" y="246.8" width="1.5" height="1.5"/><rect x="557.1" y="237.2" width="1" height="1.5"/><rect x="563.5" y="248.0" width="1.5" height="1.5"/><rect x="567.1" y="261.5" width="1" height="1"/><rect x="551.1" y="234.0" width="1" height="1"/><rect x="554.2" y="246.2" width="2" height="1.5"/><rect x="565.2" y="269.5" width="1" height="1"/><rect x="560.4" y="259.8" width="2" height="1.5"/><rect x="563.0" y="252.3" width="2" height="1"/><rect x="565.4" y="252.0" width="1.5" height="1.5"/><rect x="560.4" y="268.8" width="2" height="1"/><rect x="554.6" y="233.9" width="1.5" height="1.5"/><rect x="557.9" y="235.3" width="1" height="1.5"/><rect x="562.0" y="259.1" width="1" height="1"/><rect x="554.6" y="255.5" width="1" height="1.5"/><rect x="568.0" y="253.9" width="2" height="1.5"/><rect x="556.2" y="231.7" width="2" height="1"/><rect x="556.9" y="237.7" width="2" height="1.5"/><rect x="557.4" y="261.6" width="1" height="1"/><rect x="556.8" y="246.7" width="1.5" height="1.5"/><rect x="557.1" y="230.2" width="1" height="1"/><rect x="566.0" y="257.3" width="1" height="1"/><rect x="569.6" y="257.3" width="1.5" height="1"/><rect x="567.6" y="268.7" width="2" height="1.5"/><rect x="567.4" y="268.2" width="1" height="1.5"/><rect x="561.7" y="267.9" width="1" height="1"/><rect x="562.6" y="244.3" width="1.5" height="1"/><rect x="556.6" y="234.9" width="2" height="1"/><rect x="557.9" y="263.4" width="2" height="1.5"/><rect x="556.1" y="255.8" width="1" height="1"/><rect x="559.0" y="233.6" width="1" height="1"/><rect x="566.0" y="252.1" width="1.5" height="1"/><rect x="565.6" y="259.6" width="1" height="1.5"/><rect x="571.5" y="266.7" width="1" height="1"/><rect x="562.2" y="259.7" width="1.5" height="1"/><rect x="567.8" y="263.8" width="2" height="1"/><rect x="565.5" y="266.5" width="2" height="1"/><rect x="568.6" y="265.5" width="1" height="1"/><rect x="555.2" y="254.4" width="1.5" height="1"/><rect x="560.2" y="238.6" width="1.5" height="1"/><rect x="554.8" y="251.8" width="1.5" height="1"/><rect x="567.8" y="256.8" width="1" height="1"/><rect x="562.1" y="245.5" width="1" height="1.5"/><rect x="565.2" y="247.6" width="1" height="1"/><rect x="560.0" y="235.2" width="1.5" height="1"/><rect x="552.6" y="253.0" width="1" height="1"/><rect x="555.9" y="243.8" width="1" height="1"/><rect x="568.7" y="261.4" width="2" height="1.5"/><rect x="557.8" y="244.2" width="1" height="1"/><rect x="560.7" y="244.9" width="1" height="1.5"/><rect x="558.7" y="260.8" width="2" height="1"/><rect x="565.6" y="255.3" width="1" height="1"/><rect x="567.7" y="257.2" width="2" height="1.5"/><rect x="559.1" y="244.6" width="2" height="1.5"/><rect x="561.4" y="261.6" width="1" height="1"/><rect x="559.0" y="249.9" width="1" height="1"/><rect x="561.3" y="244.4" width="1" height="1.5"/><rect x="559.8" y="242.7" width="1.5" height="1"/><rect x="555.1" y="233.3" width="1" height="1"/><rect x="568.0" y="255.4" width="1" height="1"/><rect x="560.5" y="249.8" width="1" height="1.5"/><rect x="557.6" y="240.6" width="1" height="1"/><rect x="560.6" y="256.7" width="1.5" height="1"/><rect x="560.7" y="252.1" width="2" height="1"/><rect x="566.7" y="265.2" width="1" height="1"/><rect x="564.5" y="255.5" width="1.5" height="1"/><rect x="560.4" y="239.4" width="2" height="1.5"/><rect x="558.5" y="255.8" width="1.5" height="1.5"/><rect x="554.5" y="234.4" width="1" height="1.5"/><rect x="552.7" y="240.6" width="1" height="1"/><rect x="565.9" y="262.3" width="1" height="1.5"/><rect x="554.5" y="257.3" width="1.5" height="1.5"/><rect x="560.9" y="243.9" width="1.5" height="1"/><rect x="555.8" y="257.0" width="2" height="1.5"/><rect x="560.6" y="246.5" width="1" height="1.5"/><rect x="556.3" y="240.4" width="1" height="1.5"/><rect x="559.2" y="244.5" width="1" height="1"/><rect x="557.2" y="240.0" width="2" height="1.5"/><rect x="561.5" y="265.0" width="1.5" height="1.5"/><rect x="564.6" y="251.2" width="2" height="1.5"/><rect x="563.3" y="246.4" width="1" height="1.5"/><rect x="553.6" y="241.8" width="1" height="1.5"/><rect x="554.0" y="253.0" width="1" height="1"/><rect x="558.1" y="231.8" width="2" height="1"/><rect x="566.7" y="251.3" width="2" height="1.5"/><rect x="560.8" y="244.2" width="2" height="1"/><rect x="553.3" y="252.8" width="1" height="1"/><rect x="570.8" y="267.0" width="1.5" height="1.5"/><rect x="557.0" y="238.1" width="1" height="1"/><rect x="558.8" y="245.1" width="1" height="1"/><rect x="560.9" y="250.8" width="1" height="1"/><rect x="563.2" y="266.5" width="1" height="1.5"/><rect x="557.7" y="238.4" width="2" height="1"/><rect x="555.9" y="252.7" width="1.5" height="1"/><rect x="570.7" y="265.7" width="1" height="1"/><rect x="559.8" y="260.3" width="2" height="1.5"/><rect x="556.0" y="252.9" width="1" height="1"/><rect x="572.5" y="266.3" width="2" height="1"/><rect x="562.6" y="260.9" width="1.5" height="1"/><rect x="567.4" y="252.2" width="1" height="1"/><rect x="560.4" y="263.7" width="2" height="1"/><rect x="563.4" y="260.0" width="1" height="1"/><rect x="556.5" y="260.0" width="1" height="1"/><rect x="560.0" y="240.0" width="1" height="1"/><rect x="569.1" y="258.5" width="1" height="1"/><rect x="557.3" y="260.2" width="1" height="1.5"/><rect x="562.3" y="257.0" width="1" height="1"/><rect x="552.3" y="232.5" width="2" height="1"/><rect x="553.4" y="255.6" width="1" height="1"/><rect x="558.7" y="233.5" width="1" height="1.5"/><rect x="554.0" y="251.1" width="1" height="1"/><rect x="564.2" y="262.2" width="1.5" height="1"/><rect x="563.3" y="261.4" width="2" height="1.5"/><rect x="567.1" y="264.2" width="2" height="1"/><rect x="561.3" y="240.5" width="2" height="1"/><rect x="558.0" y="264.1" width="1.5" height="1.5"/><rect x="566.9" y="266.5" width="1" height="1.5"/><rect x="562.0" y="271.1" width="1" height="1"/><rect x="561.8" y="251.2" width="1" height="1.5"/><rect x="559.0" y="265.3" width="1" height="1"/><rect x="564.0" y="257.8" width="1.5" height="1"/><rect x="562.5" y="265.6" width="2" height="1.5"/><rect x="555.9" y="259.7" width="1" height="1.5"/><rect x="567.0" y="254.7" width="1" height="1"/><rect x="564.2" y="255.7" width="2" height="1.5"/><rect x="554.7" y="249.2" width="1.5" height="1"/><rect x="557.1" y="253.5" width="1.5" height="1"/><rect x="566.6" y="266.9" width="2" height="1"/><rect x="568.2" y="266.2" width="2" height="1.5"/><rect x="559.4" y="246.7" width="1" height="1.5"/><rect x="552.4" y="252.1" width="1" height="1"/><rect x="560.5" y="267.3" width="1" height="1.5"/><rect x="559.5" y="239.7" width="1" height="1"/><rect x="558.2" y="259.6" width="1.5" height="1"/><rect x="556.6" y="260.9" width="1.5" height="1"/><rect x="560.1" y="258.3" width="1" height="1"/><rect x="552.1" y="252.4" width="1.5" height="1.5"/><rect x="551.3" y="236.0" width="1" height="1"/><rect x="560.2" y="264.7" width="2" height="1"/><rect x="565.1" y="259.4" width="1" height="1.5"/><rect x="566.2" y="255.8" width="1" height="1.5"/><rect x="565.6" y="266.8" width="1.5" height="1"/><rect x="562.5" y="256.6" width="2" height="1.5"/><rect x="555.0" y="259.1" width="2" height="1.5"/><rect x="569.4" y="256.9" width="1" height="1"/><rect x="569.8" y="266.8" width="1" height="1"/><rect x="569.7" y="264.8" width="1" height="1"/><rect x="552.2" y="250.1" width="1" height="1"/><rect x="555.6" y="250.7" width="2" height="1"/><rect x="557.8" y="248.2" width="1" height="1.5"/><rect x="561.3" y="254.8" width="2" height="1.5"/><rect x="558.5" y="245.3" width="1" height="1"/><rect x="571.3" y="266.6" width="1" height="1"/><rect x="561.4" y="246.8" width="2" height="1"/><rect x="563.0" y="269.1" width="1.5" height="1"/><rect x="565.7" y="264.2" width="2" height="1"/><rect x="560.7" y="259.8" width="1" height="1"/><rect x="558.6" y="239.2" width="1" height="1"/><rect x="567.3" y="268.6" width="1.5" height="1"/><rect x="569.1" y="265.5" width="1.5" height="1.5"/><rect x="569.5" y="265.9" width="2" height="1"/><rect x="554.9" y="232.2" width="1" height="1.5"/><rect x="557.7" y="242.6" width="2" height="1"/><rect x="553.2" y="255.8" width="1" height="1"/><rect x="558.6" y="239.0" width="1" height="1"/><rect x="554.3" y="244.2" width="1" height="1.5"/><rect x="551.9" y="234.0" width="2" height="1.5"/><rect x="560.6" y="240.7" width="1" height="1.5"/><rect x="557.6" y="250.5" width="1" height="1"/><rect x="561.2" y="269.9" width="2" height="1"/><rect x="562.2" y="252.1" width="1.5" height="1.5"/><rect x="552.8" y="247.3" width="1.5" height="1"/></g>
<g fill="#00ff00"><rect x="732.8" y="310.5" width="1" height="1"/><rect x="733.0" y="291.7" width="2" height="1.5"/><rect x="735.1" y="287.1" width="1" height="1"/><rect x="728.1" y="291.4" width="2" height="1"/><rect x="717.1" y="291.3" width="1" height="1"/><rect x="735.4" y="293.3" width="1.5" height="1"/><rect x="721.9" y="299.9" width="2" height="1.5"/><rect x="725.7" y="305.8" width="1" height="1"/><rect x="738.1" y="293.9" width="1" height="1"/><rect x="731.3" y="300.1" width="1" height="1"/><rect x="728.7" y="310.1" width="1" height="1"/><rect x="739.8" y="291.2" width="1.5" height="1"/><rect x="732.4" y="292.9" width="2" height="1"/><rect x="731.4" y="310.3" width="1" height="1.5"/><rect x="726.8" y="291.8" width="2" height="1"/><rect x="736.5" y="296.4" width="1" height="1"/><rect x="724.4" y="294.1" width="2" height="1"/><rect x="739.6" y="301.1" width="1" height="1"/><rect x="717.8" y="296.7" width="1" height="1"/><rect x="725.4" y="294.2" width="2" height="1.5"/><rect x="726.9" y="295.6" width="1" height="1"/><rect x="726.6" y="287.5" width="1.5" height="1"/><rect x="738.4" y="291.3" width="1" height="1.5"/><rect x="728.4" y="303.1" width="1.5" height="1"/><rect x="729.0" y="287.4" width="1" height="1"/><rect x="735.7" y="302.0" width="1.5" height="1.5"/><rect x="725.7" y="288.8" width="1" height="1"/><rect x="731.7" y="302.0" width="1.5" height="1"/><rect x="731.8" y="294.1" width="1" height="1.5"/><rect x="733.1" y="307.9" width="1" height="1"/><rect x="730.7" y="289.5" width="2" height="1"/><rect x="741.3" y="305.0" width="1" height="1"/><rect x="720.5" y="297.6" width="1.5" height="1.5"/><rect x="739.8" y="296.2" width="1" height="1.5"/><rect x="718.5" y="291.6" width="1" height="1"/><rect x="728.3" y="312.5" width="1" height="1.5"/><rect x="731.3" y="292.3" width="1.5" height="1"/><rect x="723.1" y="300.3" width="2" height="1.5"/><rect x="726.6" y="310.3" width="1" height="1"/><rect x="721.5" y="303.4" width="1" height="1"/><rect x="715.3" y="289.6" width="2" height="1"/><rect x="737.6" y="290.4" width="1" height="1"/><rect x="727.8" y="290.2" width="2" height="1.5"/><rect x="719.8" y="292.8" width="1" height="1.5"/><rect x="718.8" y="294.0" width="1.5" height="1.5"/><rect x="730.5" y="292.6" width="1" height="1.5"/><rect x="724.3" y="287.4" width="1" height="1.5"/><rect x="740.3" y="304.9" width="1" height="1"/><rect x="724.6" y="290.4" width="2" height="1"/><rect x="736.1" y="307.0" width="1.5" height="1"/><rect x="722.3" y="288.4" width="2" height="1"/><rect x="732.2" y="311.6" width="2" height="1"/><rect x="730.7" y="296.9" width="1" height="1"/><rect x="732.3" y="299.1" width="1.5" height="1"/><rect x="723.9" y="303.2" width="1" height="1"/><rect x="741.1" y="292.5" width="2" height="1"/><rect x="733.6" y="295.3" width="2" height="1"/><rect x="732.5" y="288.4" width="2" height="1.5"/><rect x="726.9" y="294.3" width="2" height="1"/><rect x="723.3" y="299.4" width="1.5" height="1"/><rect x="735.5" y="305.0" width="1.5" height="1.5"/><rect x="717.9" y="289.9" width="1" height="1.5"/><rect x="736.3" y="299.8" width="1" height="1"/><rect x="729.3" y="302.7" width="1" height="1.5"/><rect x="736.3" y="297.7" width="1" height="1"/><rect x="725.8" y="287.2" width="1" height="1"/><rect x="722.6" y="298.1" width="1" height="1"/><rect x="735.4" y="296.2" width="1.5" height="1.5"/><rect x="719.0" y="295.2" width="2" height="1"/><rect x="717.8" y="294.7" width="2" height="1"/><rect x="741.7" y="299.9" width="2" height="1"/><rect x="731.1" y="304.3" width="1" height="1.5"/><rect x="738.5" y="302.4" width="1" height="1.5"/><rect x="730.4" y="305.5" width="1.5" height="1"/><rect x="729.9" y="286.5" width="1" height="1"/><rect x="717.6" y="291.5" width="2" height="1"/><rect x="729.1" y="312.4" width="1" height="1"/><rect x="719.4" y="299.9" width="1" height="1.5"/><rect x="725.5" y="303.5" width="1" height="1"/><rect x="734.5" y="302.4" width="1" height="1.5"/><rect x="736.8" y="292.3" width="2" height="1"/><rect x="728.5" y="298.8" width="1" height="1.5"/><rect x="720.5" y="290.8" width="2" height="1"/><rect x="734.3" y="292.1" width="1" height="1"/><rect x="726.8" y="309.1" width="1" height="1.5"/><rect x="725.9" y="301.7" width="1" height="1"/><rect x="723.0" y="294.3" width="1" height="1"/><rect x="725.5" y="300.3" width="1" height="1.5"/><rect x="729.6" y="296.6" width="1" height="1.5"/><rect x="738.7" y="290.0" width="1.5" height="1"/><rect x="725.9" y="297.8" width="1.5" height="1"/><rect x="734.8" y="291.6" width="1.5" height="1"/><rect x="720.2" y="296.4" width="1" height="1.5"/><rect x="720.6" y="294.4" width="1.5" height="1"/><rect x="737.6" y="286.5" width="2" height="1.5"/><rect x="715.8" y="289.5" width="1" height="1"/><rect x="738.3" y="289.2" width="1" height="1.5"/><rect x="726.5" y="301.4" width="1" height="1"/><rect x="736.4" y="300.0" width="1" height="1.5"/><rect x="737.2" y="297.2" width="1" height="1"/><rect x="741.6" y="296.8" width="1.5" height="1"/><rect x="721.3" y="293.7" width="2" height="1.5"/><rect x="733.9" y="302.4" width="1" height="1"/><rect x="739.7" y="288.2" width="1" height="1.5"/><rect x="732.9" y="293.3" width="1" height="1"/><rect x="727.1" y="289.5" width="1" height="1"/><rect x="719.5" y="288.5" width="1" height="1"/><rect x="724.5" y="301.2" width="1.5" height="1"/><rect x="727.2" y="303.6" width="1" height="1.5"/><rect x="723.5" y="290.0" width="1.5" height="1"/><rect x="722.0" y="295.5" width="2" height="1.5"/><rect x="739.0" y="300.7" width="2" height="1"/><rect x="741.0" y="301.1" width="1" height="1"/><rect x="722.4" y="295.2" width="1.5" height="1"/><rect x="736.0" y="287.5" width="1.5" height="1"/><rect x="740.9" y="305.7" width="1" height="1.5"/><rect x="723.5" y="293.3" width="2" height="1"/><rect x="730.5" y="287.1" width="1" height="1"/><rect x="721.0" y="291.0" width="1" height="1"/><rect x="726.6" y="292.2" width="1.5" height="1"/><rect x="733.3" y="286.3" width="1.5" height="1"/><rect x="740.1" y="293.2" width="1" height="1"/><rect x="737.3" y="302.1" width="2" height="1"/><rect x="740.5" y="296.3" width="1" height="1"/><rect x="739.6" y="295.1" width="1.5" height="1.5"/><rect x="728.2" y="295.8" width="1.5" height="1"/><rect x="726.3" y="307.2" width="1" height="1"/><rect x="736.0" y="300.6" width="2" height="1.5"/><rect x="727.1" y="303.5" width="1" height="1"/><rect x="724.3" y="297.3" width="1.5" height="1"/><rect x="727.6" y="305.2" width="1" height="1"/><rect x="721.7" y="298.8" width="1" height="1"/><rect x="737.9" y="303.2" width="1" height="1"/><rect x="728.4" y="288.2" width="1.5" height="1"/><rect x="739.2" y="305.4" width="1" height="1"/><rect x="725.5" y="303.9" width="1" height="1"/><rect x="730.7" y="312.2" width="2" height="1"/><rect x="740.6" y="297.3" width="1.5" height="1"/><rect x="739.2" y="298.1" width="2" height="1"/><rect x="728.4" y="286.6" width="1.5" height="1.5"/><rect x="738.7" y="299.3" width="1" height="1"/><rect x="738.8" y="285.1" width="2" height="1.5"/><rect x="718.2" y="293.2" width="1" height="1"/><rect x="738.3" y="297.7" width="1" height="1"/><rect x="727.3" y="301.6" width="1" height="1"/><rect x="732.9" y="305.7" width="2" height="1"/><rect x="719.5" y="288.3" width="1" height="1"/><rect x="735.2" y="295.5" width="1" height="1.5"/><rect x="737.2" y="305.3" width="1" height="1"/><rect x="722.4" y="290.2" width="1.5" height="1"/><rect x="728.8" y="309.8" width="1.5" height="1"/><rect x="727.8" y="296.6" width="1" height="1.5"/><rect x="730.1" y="309.6" width="1" height="1.5"/><rect x="739.4" y="299.8" width="1" height="1"/><rect x="735.0" y="294.0" width="1.5" height="1"/><rect x="728.1" y="298.6" width="2" height="1.5"/><rect x="728.1" y="299.7" width="1" height="1.5"/><rect x="728.0" y="287.3" width="1.5" height="1"/><rect x="726.6" y="294.1" width="1" height="1.5"/><rect x="720.2" y="293.4" width="1" height="1"/><rect x="728.4" y="310.8" width="1.5" height="1.5"/><rect x="716.8" y="290.1" width="1" height="1.5"/><rect x="729.0" y="302.6" width="1.5" height="1.5"/><rect x="733.3" y="301.3" width="1.5" height="1"/><rect x="722.8" y="300.3" width="2" height="1.5"/><rect x="732.5" y="294.1" width="1" height="1.5"/><rect x="736.8" y="306.9" width="1.5" height="1"/><rect x="736.1" y="290.6" width="1" height="1"/><rect x="739.5" y="299.3" width="1" height="1.5"/><rect x="731.2" y="311.9" width="1" height="1"/><rect x="738.8" y="305.3" width="1" height="1"/><rect x="738.4" y="293.1" width="2" height="1.5"/><rect x="726.1" y="305.9" width="2" height="1"/><rect x="727.3" y="288.9" width="2" height="1"/><rect x="738.3" y="305.1" width="1" height="1.5"/><rect x="728.0" y="294.9" width="1" height="1.5"/><rect x="741.6" y="288.5" width="1.5" height="1.5"/><rect x="730.1" y="305.6" width="2" height="1"/><rect x="721.0" y="300.9" width="1.5" height="1.5"/><rect x="725.8" y="309.3" width="1.5" height="1.5"/><rect x="723.2" y="304.2" width="1" height="1"/><rect x="739.0" y="297.2" width="1" height="1.5"/><rect x="733.9" y="298.9" width="2" height="1"/><rect x="733.4" y="310.3" width="2" height="1"/><rect x="727.0" y="289.5" width="1.5" height="1"/><rect x="721.7" y="301.6" width="1.5" height="1"/><rect x="723.3" y="303.7" width="1" height="1"/><rect x="717.4" y="293.2" width="2" height="1"/><rect x="737.3" y="289.9" width="1" height="1"/><rect x="729.0" y="292.2" width="1" height="1.5"/><rect x="732.8" y="308.6" width="1" height="1.5"/><rect x="722.3" y="304.2" width="1" height="1.5"/><rect x="726.5" y="296.8" width="1" height="1"/><rect x="721.7" y="291.8" width="1" height="1"/><rect x="735.0" y="303.0" width="1" height="1.5"/><rect x="725.9" y="294.9" width="1" height="1"/><rect x="728.4" y="307.3" width="1.5" height="1"/><rect x="740.3" y="299.7" width="1" height="1"/><rect x="733.6" y="309.3" width="2" height="1"/><rect x="729.7" y="295.8" width="1" height="1"/><rect x="738.4" y="300.6" width="1" height="1"/><rect x="724.3" y="300.4" width="1.5" height="1"/><rect x="732.6" y="311.1" width="1.5" height="1"/><rect x="725.6" y="291.3" width="1.5" height="1"/><rect x="736.5" y="288.2" width="2" height="1"/><rect x="730.6" y="302.9" width="1" height="1"/><rect x="723.9" y="300.5" width="1" height="1.5"/><rect x="731.5" y="303.1" width="2" height="1"/><rect x="741.3" y="293.3" width="2" height="1"/><rect x="737.5" y="289.1" width="1" height="1"/><rect x="739.3" y="289.2" width="1" height="1"/><rect x="724.0" y="294.5" width="1.5" height="1"/><rect x="738.7" y="286.5" width="1" height="1"/><rect x="729.9" y="311.2" width="1" height="1"/><rect x="729.9" y="289.8" width="1" height="1"/><rect x="741.9" y="284.5" width="1" height="1"/><rect x="723.5" y="295.2" width="1" height="1.5"/><rect x="739.6" y="298.0" width="1" height="1"/><rect x="727.1" y="287.1" width="1.5" height="1.5"/><rect x="717.2" y="294.6" width="2" height="1.5"/><rect x="731.1" y="298.1" width="1" height="1"/><rect x="730.1" y="311.4" width="1" height="1"/><rect x="722.7" y="296.5" width="1.5" height="1.5"/><rect x="732.7" y="296.6" width="1" height="1.5"/><rect x="733.6" y="301.7" width="1" height="1.5"/><rect x="726.5" y="289.0" width="1" height="1"/><rect x="721.5" y="293.0" width="1" height="1"/><rect x="729.7" y="304.3" width="1" height="1.5"/><rect x="732.3" y="302.7" width="1" height="1.5"/><rect x="716.5" y="288.9" width="2" height="1"/><rect x="739.3" y="289.8" width="1.5" height="1"/><rect x="739.0" y="299.2" width="1" height="1"/><rect x="725.7" y="288.4" width="1" height="1.5"/><rect x="726.2" y="290.5" width="1" height="1.5"/><rect x="741.6" y="296.2" width="1" height="1"/><rect x="725.0" y="299.0" width="1" height="1"/><rect x="726.3" y="310.2" width="2" height="1"/><rect x="720.9" y="302.1" width="2" height="1.5"/><rect x="720.2" y="289.9" width="1" height="1"/><rect x="733.5" y="290.8" width="2" height="1.5"/><rect x="724.0" y="290.5" width="1" height="1.5"/><rect x="724.0" y="288.7" width="1" height="1"/><rect x="726.7" y="302.2" width="1" height="1"/><rect x="727.7" y="304.2" width="1" height="1"/><rect x="733.6" y="301.7" width="2" height="1"/><rect x="720.3" y="295.6" width="2" height="1"/><rect x="727.5" y="307.3" width="1" height="1"/><rect x="727.3" y="300.7" width="1" height="1"/><rect x="732.9" y="311.1" width="1" height="1"/><rect x="722.3" y="289.4" width="2" height="1"/><rect x="739.0" y="301.0" width="1.5" height="1"/><rect x="726.8" y="290.3" width="1.5" height="1.5"/><rect x="727.1" y="296.8" width="1.5" height="1.5"/><rect x="730.9" y="290.0" width="1.5" height="1"/><rect x="741.3" y="305.0" width="2" height="1"/><rect x="737.6" y="306.6" width="2" height="1"/><rect x="740.2" y="295.1" width="1.5" height="1"/><rect x="726.1" y="295.1" width="1" height="1"/><rect x="737.6" y="285.2" width="2" height="1"/><rect x="736.9" y="287.1" width="1" height="1"/><rect x="726.4" y="307.9" width="1.5" height="1.5"/><rect x="729.6" y="311.2" width="1.5" height="1"/><rect x="720.7" y="295.5" width="1" height="1"/><rect x="739.2" y="301.9" width="1" height="1"/><rect x="719.9" y="292.7" width="1" height="1"/></g>
<g fill="#00ff00"><rect x="689.3" y="272.8" width="1" height="1"/><rect x="691.7" y="269.5" width="2" height="1"/><rect x="687.8" y="280.7" width="1" height="1"/><rect x="706.4" y="278.8" width="1" height="1"/><rect x="689.6" y="268.2" width="1.5" height="1"/><rect x="690.1" y="293.8" width="2" height="1.5"/><rect x="698.9" y="289.6" width="1.5" height="1.5"/><rect x="698.7" y="281.6" width="2" height="1"/><rect x="700.6" y="283.6" width="1" height="1"/><rect x="691.0" y="293.0" width="2" height="1"/><rect x="686.4" y="279.3" width="1" height="1"/><rect x="709.4" y="282.2" width="1" height="1"/><rect x="688.7" y="276.9" width="2" height="1"/><rect x="705.6" y="272.0" width="1" height="1"/><rect x="687.7" y="290.5" width="1" height="1"/><rect x="691.4" y="271.3" width="2" height="1"/><rect x="686.8" y="274.1" width="1" height="1"/><rect x="686.6" y="287.7" width="1.5" height="1.5"/><rect x="706.4" y="284.9" width="1" height="1"/><rect x="682.9" y="269.4" width="1" height="1"/><rect x="700.7" y="279.0" width="1" height="1"/><rect x="683.3" y="282.7" width="1" height="1"/><rect x="693.4" y="266.1" width="1.5" height="1"/><rect x="705.4" y="288.2" width="2" height="1"/><rect x="689.1" y="278.5" width="1" height="1"/><rect x="680.6" y="273.8" width="1" height="1.5"/><rect x="700.8" y="274.9" width="1" height="1"/><rect x="692.6" y="283.3" width="2" height="1.5"/><rect x="688.3" y="281.3" width="1.5" height="1.5"/><rect x="694.4" y="269.9" width="2" height="1"/><rect x="692.9" y="267.2" width="1" height="1"/><rect x="686.5" y="285.3" width="1.5" height="1"/><rect x="685.3" y="283.2" width="1" height="1"/><rect x="694.3" y="269.7" width="2" height="1"/><rect x="681.9" y="270.4" width="2" height="1"/><rect x="688.8" y="287.2" width="2" height="1"/><rect x="685.2" y="283.4" width="1" height="1"/><rect x="692.7" y="293.8" width="2" height="1"/><rect x="705.4" y="286.7" width="1" height="1"/><rect x="689.1" y="271.2" width="1" height="1"/><rect x="701.6" y="278.2" width="1" height="1"/><rect x="701.2" y="265.3" width="2" height="1.5"/><rect x="704.6" y="287.5" width="1" height="1"/><rect x="697.7" y="284.5" width="2" height="1"/><rect x="690.8" y="296.1" width="2" height="1"/><rect x="688.7" y="272.2" width="2" height="1"/><rect x="706.1" y="276.0" width="1" height="1.5"/><rect x="698.8" y="268.1" width="2" height="1.5"/><rect x="693.0" y="295.5" width="1" height="1.5"/><rect x="708.9" y="280.3" width="2" height="1"/><rect x="691.8" y="278.9" width="1" height="1"/><rect x="710.7" y="283.3" width="2" height="1"/><rect x="709.3" y="284.3" width="1" height="1"/><rect x="709.7" y="282.9" width="1" height="1"/><rect x="700.0" y="268.4" width="1.5" height="1"/><rect x="699.8" y="284.2" width="1.5" height="1.5"/><rect x="700.4" y="279.8" width="1" height="1.5"/><rect x="701.5" y="282.2" width="1" height="1.5"/><rect x="694.6" y="278.8" width="1.5" height="1"/><rect x="702.3" y="291.7" width="1" height="1"/><rect x="698.5" y="292.0" width="2" height="1"/><rect x="700.3" y="283.1" width="1.5" height="1.5"/><rect x="683.4" y="276.9" width="1" height="1.5"/><rect x="700.5" y="280.3" width="2" height="1"/><rect x="687.4" y="271.4" width="2" height="1"/><rect x="679.7" y="273.7" width="1" height="1"/><rect x="687.0" y="270.8" width="1.5" height="1"/><rect x="686.2" y="274.6" width="1.5" height="1.5"/><rect x="686.1" y="269.1" width="1" height="1"/><rect x="698.0" y="282.1" width="1.5" height="1"/><rect x="687.7" y="268.1" width="1.5" height="1"/><rect x="701.8" y="276.0" width="1.5" height="1.5"/><rect x="682.2" y="278.4" width="1" height="1"/><rect x="684.9" y="281.7" width="1" height="1"/><rect x="689.0" y="276.5" width="1" height="1.5"/><rect x="704.2" y="266.0" width="2" height="1.5"/><rect x="685.0" y="287.1" width="1" height="1.5"/><rect x="707.6" y="281.4" width="1" height="1"/><rect x="688.3" y="288.4" width="2" height="1"/><rect x="696.5" y="275.6" width="1" height="1.5"/><rect x="695.4" y="268.0" width="2" height="1.5"/><rect x="689.7" y="270.8" width="2" height="1"/><rect x="695.3" y="279.1" width="1" height="1"/><rect x="698.9" y="271.3" width="1.5" height="1"/><rect x="692.3" y="275.7" width="1" height="1"/><rect x="698.2" y="293.0" width="2" height="1"/><rect x="693.0" y="295.1" width="1" height="1.5"/><rect x="698.4" y="285.5" width="1.5" height="1"/><rect x="690.6" y="294.2" width="1" height="1.5"/><rect x="690.2" y="294.9" width="2" height="1"/><rect x="683.5" y="271.5" width="1" height="1"/><rect x="691.0" y="276.0" width="1.5" height="1"/><rect x="698.1" y="282.0" width="2" height="1"/><rect x="704.9" y="287.4" width="1" height="1"/><rect x="681.6" y="273.2" width="2" height="1"/><rect x="700.4" y="267.1" width="1" height="1"/><rect x="690.9" y="283.7" width="1.5" height="1"/><rect x="705.7" y="284.0" width="2" height="1"/><rect x="697.1" y="280.3" width="2" height="1.5"/><rect x="688.6" y="274.2" width="1.5" height="1"/><rect x="706.8" y="284.3" width="1.5" height="1.5"/><rect x="696.3" y="270.4" width="1" height="1.5"/><rect x="701.6" y="267.0" width="1" height="1"/><rect x="690.6" y="277.3" width="2" height="1.5"/><rect x="681.4" y="276.4" width="1" height="1.5"/><rect x="692.9" y="287.5" width="1" height="1.5"/><rect x="690.6" y="290.0" width="2" height="1"/><rect x="700.3" y="291.1" width="1" height="1"/><rect x="704.1" y="267.1" width="1.5" height="1"/><rect x="692.9" y="279.4" width="1.5" height="1"/><rect x="692.6" y="269.3" width="1" height="1"/><rect x="688.7" y="287.0" width="1" height="1.5"/><rect x="695.0" y="272.0" width="1" height="1"/><rect x="695.7" y="288.6" width="1" height="1"/><rect x="702.6" y="288.1" width="1.5" height="1.5"/><rect x="697.9" y="274.8" width="1" height="1"/><rect x="690.6" y="289.8" width="2" height="1"/><rect x="695.5" y="278.1" width="1" height="1.5"/><rect x="696.4" y="273.7" width="1.5" height="1"/><rect x="690.1" y="290.3" width="1" height="1"/><rect x="702.0" y="268.1" width="1.5" height="1"/><rect x="706.1" y="289.4" width="2" height="1"/><rect x="703.8" y="268.2" width="1" height="1.5"/><rect x="700.0" y="283.1" width="1" height="1"/><rect x="687.8" y="282.0" width="1" height="1.5"/><rect x="710.4" y="286.5" width="1" height="1"/><rect x="684.0" y="277.7" width="2" height="1"/><rect x="701.0" y="269.8" width="1.5" height="1"/><rect x="700.2" y="276.9" width="1" height="1"/><rect x="710.8" y="285.8" width="1" height="1.5"/><rect x="695.0" y="280.0" width="1" height="1.5"/><rect x="702.0" y="282.8" width="1.5" height="1"/><rect x="685.3" y="276.9" width="2" height="1.5"/><rect x="690.5" y="281.7" width="1.5" height="1"/><rect x="689.3" y="268.8" width="1.5" height="1"/><rect x="690.3" y="285.4" width="1.5" height="1"/><rect x="693.7" y="274.5" width="1" height="1"/><rect x="689.9" y="296.1" width="1" height="1.5"/><rect x="695.1" y="286.0" width="2" height="1"/><rect x="701.2" y="287.5" width="1" height="1.5"/><rect x="691.2" y="284.7" width="1" height="1"/><rect x="693.7" y="283.7" width="1" height="1.5"/><rect x="694.7" y="288.2" width="2" height="1"/><rect x="690.0" y="284.1" width="1" height="1"/><rect x="692.5" y="277.2" width="1" height="1"/><rect x="690.4" y="269.1" width="2" height="1"/><rect x="693.9" y="280.5" width="1.5" height="1"/><rect x="705.0" y="274.4" width="1" height="1"/><rect x="704.2" y="280.8" width="1.5" height="1.5"/><rect x="698.5" y="281.3" width="1" height="1.5"/><rect x="698.9" y="277.5" width="1" height="1"/><rect x="686.6" y="285.2" width="2" height="1"/><rect x="683.2" y="284.2" width="1" height="1.5"/><rect x="683.9" y="287.0" width="1.5" height="1"/><rect x="686.5" y="286.2" width="1" height="1"/><rect x="693.9" y="292.6" width="1" height="1"/><rect x="703.7" y="281.3" width="1" height="1.5"/><rect x="686.7" y="275.2" width="1" height="1"/><rect x="694.8" y="289.5" width="1" height="1.5"/><rect x="691.1" y="277.5" width="1.5" height="1"/><rect x="703.0" y="273.0" width="2" height="1"/><rect x="696.4" y="286.2" width="2" height="1"/><rect x="688.0" y="275.6" width="1.5" height="1"/><rect x="696.0" y="293.5" width="1.5" height="1.5"/><rect x="697.6" y="272.6" width="1" height="1.5"/><rect x="682.2" y="279.3" width="1" height="1"/><rect x="702.6" y="272.0" width="1" height="1.5"/><rect x="697.1" y="279.7" width="1" height="1.5"/><rect x="701.0" y="281.3" width="1.5" height="1"/><rect x="697.0" y="272.0" width="2" height="1"/><rect x="704.8" y="273.9" width="1.5" height="1"/><rect x="702.3" y="283.2" width="1" height="1"/><rect x="702.8" y="271.8" width="1" height="1"/><rect x="691.6" y="279.2" width="1" height="1"/><rect x="692.2" y="280.5" width="1" height="1.5"/><rect x="708.7" y="278.2" width="1.5" height="1.5"/><rect x="702.3" y="286.3" width="1" height="1"/><rect x="699.7" y="272.3" width="2" height="1"/><rect x="691.6" y="287.6" width="2" height="1"/><rect x="685.8" y="290.0" width="2" height="1"/><rect x="700.2" y="275.3" width="1" height="1"/><rect x="683.3" y="272.3" width="1.5" height="1"/><rect x="701.4" y="282.8" width="2" height="1"/><rect x="692.1" y="280.2" width="2" height="1"/><rect x="698.2" y="267.1" width="2" height="1.5"/><rect x="701.2" y="292.6" width="2" height="1"/></g>
<polygon points="477.5,325.0 505.0,323.8 518.0,345.0 484.0,350.0" fill="#00ff00" stroke="#00ff00" stroke-width="0.7"/>
<g fill="#00ff00"><rect x="525.9" y="365.0" width="1.5" height="1"/><rect x="500.3" y="357.6" width="1" height="1"/><rect x="506.1" y="361.3" width="1.5" height="1.5"/><rect x="507.1" y="367.0" width="1" height="1.5"/><rect x="525.9" y="363.9" width="2" height="1"/><rect x="504.5" y="365.0" width="1" height="1.5"/><rect x="514.5" y="347.6" width="1" height="1"/><rect x="488.5" y="358.4" width="1" height="1"/><rect x="496.0" y="371.9" width="2" height="1"/><rect x="515.8" y="357.7" width="1.5" height="1"/><rect x="515.3" y="368.3" width="1.5" height="1"/><rect x="516.9" y="349.7" width="1" height="1"/><rect x="519.8" y="365.3" width="2" height="1"/><rect x="514.7" y="349.4" width="1" height="1"/><rect x="506.3" y="369.7" width="1.5" height="1"/><rect x="510.1" y="346.2" width="1" height="1"/><rect x="505.8" y="363.2" width="2" height="1"/><rect x="526.3" y="368.3" width="1.5" height="1"/><rect x="514.0" y="349.5" width="1" height="1.5"/><rect x="501.5" y="354.0" width="2" height="1.5"/><rect x="489.8" y="362.1" width="2" height="1"/><rect x="524.3" y="365.9" width="1" height="1"/><rect x="520.1" y="350.5" width="1" height="1"/><rect x="496.3" y="363.6" width="2" height="1"/><rect x="496.6" y="352.6" width="1" height="1"/><rect x="510.0" y="370.4" width="1" height="1.5"/><rect x="498.4" y="355.8" width="1" height="1"/><rect x="510.5" y="359.0" width="2" height="1"/><rect x="508.3" y="365.2" width="1.5" height="1"/><rect x="493.2" y="365.9" width="1" height="1"/><rect x="493.6" y="374.0" width="1" height="1"/><rect x="511.0" y="363.3" width="1.5" height="1"/><rect x="490.3" y="366.6" width="1" height="1.5"/><rect x="513.5" y="358.5" width="2" height="1"/><rect x="490.7" y="349.5" width="1" height="1"/><rect x="494.6" y="354.7" width="1" height="1.5"/><rect x="522.2" y="364.8" width="1" height="1"/><rect x="503.7" y="364.7" width="1" height="1.5"/><rect x="497.4" y="366.3" width="1" height="1.5"/><rect x="525.9" y="358.8" width="1.5" height="1"/><rect x="488.5" y="351.4" width="2" height="1.5"/><rect x="499.9" y="351.7" width="1" height="1"/><rect x="511.2" y="366.3" width="2" height="1"/><rect x="527.6" y="364.9" width="2" height="1"/><rect x="497.1" y="351.1" width="1.5" height="1.5"/><rect x="520.9" y="364.0" width="1" height="1.5"/><rect x="495.2" y="365.1" width="1" height="1"/><rect x="491.3" y="353.6" width="2" height="1"/><rect x="505.4" y="364.7" width="1.5" height="1"/><rect x="493.1" y="355.5" width="1.5" height="1"/><rect x="512.8" y="350.7" width="2" height="1"/><rect x="517.7" y="354.2" width="1" height="1"/><rect x="523.3" y="363.5" width="1" height="1.5"/><rect x="498.7" y="348.7" width="1" height="1"/><rect x="497.9" y="357.6" width="2" height="1.5"/><rect x="516.4" y="361.3" width="1" height="1"/><rect x="524.8" y="366.3" width="1" height="1"/><rect x="491.7" y="353.7" width="1" height="1.5"/><rect x="499.5" y="363.3" width="1" height="1.5"/><rect x="500.2" y="373.0" width="1" height="1.5"/><rect x="499.8" y="368.5" width="1" height="1"/><rect x="523.4" y="366.0" width="1" height="1.5"/><rect x="515.9" y="354.4" width="1" height="1"/><rect x="527.6" y="363.5" width="1" height="1.5"/><rect x="498.8" y="374.5" width="1" height="1"/><rect x="512.7" y="364.1" width="1.5" height="1.5"/><rect x="508.4" y="372.8" width="1.5" height="1"/><rect x="512.5" y="352.1" width="1" height="1"/><rect x="491.6" y="355.2" width="1" height="1.5"/><rect x="509.2" y="354.1" width="1" height="1"/><rect x="488.2" y="358.4" width="1" height="1"/><rect x="516.5" y="346.8" width="1" height="1"/><rect x="513.3" y="356.2" width="2" height="1.5"/><rect x="502.8" y="356.9" width="1.5" height="1.5"/><rect x="520.1" y="354.2" width="2" height="1"/><rect x="519.5" y="349.4" width="1" height="1"/><rect x="491.2" y="365.8" width="2" height="1"/><rect x="511.1" y="355.9" width="1" height="1.5"/><rect x="500.7" y="366.3" width="1.5" height="1"/><rect x="502.2" y="364.1" width="1.5" height="1.5"/><rect x="529.0" y="362.1" width="1" height="1"/><rect x="495.7" y="352.1" width="1" height="1"/><rect x="521.3" y="366.8" width="1" height="1"/><rect x="497.0" y="371.0" width="1" height="1"/><rect x="497.0" y="369.1" width="2" height="1.5"/><rect x="489.5" y="357.7" width="1.5" height="1.5"/><rect x="501.6" y="356.2" width="1" height="1"/><rect x="499.2" y="354.7" width="1" height="1.5"/><rect x="501.5" y="370.8" width="1.5" height="1"/><rect x="523.6" y="356.2" width="1.5" height="1.5"/><rect x="519.5" y="351.6" width="1" height="1.5"/><rect x="504.0" y="349.3" width="1.5" height="1.5"/><rect x="493.7" y="361.6" width="1.5" height="1"/><rect x="495.8" y="371.3" width="1" height="1"/><rect x="502.4" y="368.9" width="1" height="1"/><rect x="516.0" y="354.0" width="2" height="1"/><rect x="515.6" y="345.5" width="1" height="1"/><rect x="510.5" y="346.7" width="1.5" height="1"/><rect x="523.8" y="358.8" width="1" height="1"/><rect x="524.6" y="367.5" width="1" height="1"/><rect x="510.0" y="347.0" width="1" height="1.5"/><rect x="516.7" y="357.7" width="1" height="1"/><rect x="503.9" y="367.7" width="1.5" height="1.5"/><rect x="516.0" y="363.5" width="2" height="1.5"/><rect x="503.0" y="365.6" width="1" height="1"/><rect x="490.4" y="364.5" width="2" height="1.5"/><rect x="509.4" y="351.8" width="1" height="1"/><rect x="503.3" y="352.4" width="1.5" height="1"/><rect x="495.0" y="372.9" width="1.5" height="1"/><rect x="518.7" y="366.5" width="1" height="1.5"/><rect x="518.0" y="364.6" width="2" height="1"/><rect x="526.6" y="361.2" width="1" height="1"/><rect x="501.4" y="347.5" width="1" height="1"/><rect x="497.2" y="348.4" width="1.5" height="1"/><rect x="503.5" y="363.2" width="2" height="1"/><rect x="526.7" y="362.2" width="1.5" height="1.5"/><rect x="523.7" y="369.5" width="1.5" height="1"/><rect x="491.5" y="361.2" width="1.5" height="1"/><rect x="513.0" y="355.1" width="2" height="1.5"/><rect x="490.0" y="360.3" width="1" height="1.5"/><rect x="506.3" y="368.2" width="2" height="1"/><rect x="496.1" y="355.4" width="1.5" height="1"/><rect x="497.1" y="365.2" width="2" height="1.5"/><rect x="511.0" y="366.3" width="2" height="1"/><rect x="513.5" y="363.8" width="1.5" height="1.5"/><rect x="491.5" y="368.3" width="2" height="1"/><rect x="502.3" y="361.1" width="1" height="1"/><rect x="517.7" y="357.9" width="1" height="1.5"/><rect x="502.2" y="366.6" width="1" height="1"/><rect x="516.7" y="368.2" width="1" height="1.5"/><rect x="513.8" y="359.8" width="1" height="1.5"/><rect x="500.5" y="349.8" width="1" height="1"/><rect x="518.1" y="355.2" width="2" height="1"/><rect x="491.2" y="350.1" width="1" height="1"/><rect x="525.3" y="360.0" width="1.5" height="1"/><rect x="502.0" y="349.9" width="1" height="1"/><rect x="500.5" y="366.5" width="1" height="1"/><rect x="510.4" y="355.0" width="1.5" height="1.5"/><rect x="516.1" y="362.4" width="1" height="1.5"/><rect x="519.6" y="362.2" width="1" height="1"/><rect x="521.5" y="366.9" width="1.5" height="1"/><rect x="526.3" y="364.0" width="1.5" height="1.5"/><rect x="493.4" y="367.6" width="1" height="1.5"/><rect x="503.3" y="369.8" width="1.5" height="1"/><rect x="500.4" y="373.3" width="1" height="1"/><rect x="527.2" y="367.3" width="1" height="1.5"/><rect x="516.6" y="357.2" width="1.5" height="1"/><rect x="518.3" y="346.0" width="1" height="1.5"/><rect x="489.1" y="360.2" width="2" height="1.5"/><rect x="497.8" y="374.6" width="1" height="1.5"/><rect x="528.5" y="365.7" width="1" height="1"/><rect x="514.0" y="370.3" width="1" height="1"/><rect x="509.7" y="364.4" width="1" height="1"/><rect x="494.0" y="354.7" width="1.5" height="1"/><rect x="504.9" y="368.3" width="1" height="1"/><rect x="499.3" y="353.9" width="1.5" height="1"/><rect x="518.9" y="361.3" width="1.5" height="1"/><rect x="515.1" y="369.2" width="1" height="1.5"/><rect x="504.0" y="363.8" width="1" height="1"/><rect x="489.2" y="350.1" width="2" height="1.5"/><rect x="512.6" y="345.9" width="1.5" height="1"/><rect x="517.9" y="347.4" width="1.5" height="1"/><rect x="493.3" y="357.1" width="1" height="1"/><rect x="518.0" y="350.1" width="2" height="1"/><rect x="501.1" y="372.8" width="1.5" height="1"/><rect x="499.6" y="348.6" width="1" height="1.5"/><rect x="503.8" y="355.9" width="1" height="1.5"/><rect x="518.0" y="354.1" width="2" height="1"/><rect x="506.2" y="359.2" width="1" height="1.5"/><rect x="513.8" y="354.5" width="1.5" height="1"/><rect x="496.2" y="375.2" width="1" height="1.5"/><rect x="495.6" y="352.6" width="1" height="1.5"/><rect x="505.4" y="370.5" width="1" height="1"/><rect x="520.7" y="362.9" width="1.5" height="1"/><rect x="498.6" y="374.9" width="1" height="1.5"/><rect x="501.6" y="356.1" width="1.5" height="1"/><rect x="494.4" y="356.8" width="2" height="1"/><rect x="496.7" y="363.9" width="2" height="1.5"/><rect x="488.1" y="355.9" width="1" height="1.5"/><rect x="515.7" y="369.7" width="1" height="1"/><rect x="493.9" y="374.4" width="1.5" height="1"/><rect x="521.6" y="358.1" width="1" height="1.5"/><rect x="508.8" y="348.8" width="1" height="1"/><rect x="524.4" y="359.6" width="1" height="1.5"/><rect x="515.0" y="362.0" width="1.5" height="1"/><rect x="507.2" y="365.3" width="1" height="1"/><rect x="498.7" y="353.4" width="1.5" height="1.5"/><rect x="514.7" y="346.6" width="1" height="1"/><rect x="496.1" y="349.8" width="1.5" height="1"/><rect x="503.5" y="373.8" width="1" height="1.5"/><rect x="515.3" y="347.5" width="1.5" height="1.5"/><rect x="517.3" y="352.7" width="1.5" height="1.5"/><rect x="516.0" y="354.0" width="1" height="1"/><rect x="526.9" y="367.8" width="1.5" height="1"/><rect x="506.3" y="346.9" width="1" height="1"/><rect x="505.4" y="357.7" width="1" height="1"/><rect x="490.4" y="349.6" width="1" height="1"/><rect x="509.7" y="367.7" width="2" height="1"/><rect x="514.6" y="345.8" width="2" height="1"/><rect x="505.1" y="354.2" width="1" height="1.5"/><rect x="513.5" y="350.6" width="1.5" height="1"/><rect x="492.8" y="353.9" width="1.5" height="1"/><rect x="504.8" y="358.6" width="2" height="1"/><rect x="496.3" y="354.8" width="2" height="1"/><rect x="513.7" y="354.5" width="1" height="1"/><rect x="497.2" y="369.1" width="1" height="1.5"/><rect x="520.8" y="364.0" width="2" height="1.5"/><rect x="510.5" y="353.5" width="1.5" height="1"/><rect x="509.0" y="359.9" width="1.5" height="1"/><rect x="499.8" y="366.4" width="1" height="1"/><rect x="503.9" y="370.2" width="1.5" height="1"/><rect x="508.5" y="364.4" width="1.5" height="1"/><rect x="511.8" y="350.3" width="1" height="1.5"/><rect x="507.2" y="365.1" width="2" height="1.5"/><rect x="499.5" y="348.0" width="1" height="1"/><rect x="517.8" y="363.3" width="2" height="1.5"/><rect x="518.7" y="349.3" width="2" height="1"/><rect x="517.0" y="360.6" width="1.5" height="1"/><rect x="508.6" y="371.5" width="2" height="1"/><rect x="514.5" y="352.4" width="1" height="1"/><rect x="497.4" y="360.7" width="1" height="1.5"/><rect x="501.9" y="367.3" width="1" height="1"/><rect x="502.4" y="352.0" width="1" height="1.5"/><rect x="506.6" y="358.3" width="1.5" height="1.5"/><rect x="493.3" y="372.4" width="1" height="1"/><rect x="527.6" y="368.2" width="1.5" height="1"/><rect x="513.2" y="366.1" width="1" height="1"/><rect x="526.1" y="366.9" width="1" height="1.5"/><rect x="500.7" y="347.7" width="2" height="1.5"/><rect x="494.0" y="350.3" width="2" height="1.5"/><rect x="514.3" y="348.3" width="1" height="1"/><rect x="506.2" y="357.9" width="1.5" height="1"/><rect x="516.5" y="351.6" width="1" height="1"/><rect x="502.2" y="366.6" width="1.5" height="1"/><rect x="511.7" y="356.0" width="1.5" height="1"/><rect x="520.4" y="357.0" width="1" height="1"/><rect x="530.1" y="366.2" width="2" height="1"/><rect x="516.3" y="350.5" width="2" height="1"/><rect x="511.5" y="368.9" width="2" height="1"/><rect x="501.8" y="364.0" width="1.5" height="1"/><rect x="493.6" y="355.6" width="1" height="1"/><rect x="502.6" y="360.9" width="2" height="1"/><rect x="495.6" y="370.9" width="1.5" height="1"/><rect x="495.2" y="352.4" width="1" height="1.5"/><rect x="493.7" y="362.4" width="2" height="1.5"/><rect x="511.5" y="365.7" width="1" height="1.5"/><rect x="521.8" y="357.2" width="1" height="1"/><rect x="520.4" y="369.4" width="1.5" height="1"/><rect x="490.5" y="367.3" width="2" height="1"/><rect x="499.5" y="355.1" width="1" height="1.5"/><rect x="505.3" y="369.7" width="1.5" height="1.5"/><rect x="528.0" y="363.3" width="1.5" height="1.5"/><rect x="505.6" y="357.3" width="1" height="1"/><rect x="493.8" y="372.0" width="1.5" height="1"/><rect x="506.8" y="358.1" width="1" height="1"/><rect x="512.7" y="348.6" width="1.5" height="1"/><rect x="501.2" y="361.0" width="1" height="1"/><rect x="529.9" y="366.3" width="1" height="1"/><rect x="523.4" y="356.7" width="1" height="1.5"/><rect x="494.0" y="354.8" width="1" height="1"/><rect x="512.8" y="351.1" width="1" height="1"/><rect x="493.8" y="356.6" width="1" height="1.5"/><rect x="527.9" y="363.3" width="2" height="1"/><rect x="509.2" y="356.5" width="1.5" height="1.5"/><rect x="500.8" y="368.6" width="1.5" height="1"/><rect x="492.9" y="367.4" width="1" height="1.5"/><rect x="516.4" y="362.0" width="1" height="1.5"/><rect x="490.7" y="360.6" width="2" height="1"/><rect x="524.1" y="362.1" width="1.5" height="1"/><rect x="496.0" y="366.9" width="1.5" height="1"/><rect x="516.1" y="370.1" width="1.5" height="1"/><rect x="499.3" y="372.4" width="1" height="1"/><rect x="499.8" y="370.7" width="1" height="1"/><rect x="520.6" y="367.7" width="1" height="1.5"/><rect x="513.5" y="351.4" width="1.5" height="1"/><rect x="494.4" y="370.0" width="2" height="1"/><rect x="502.3" y="362.0" width="1" height="1"/><rect x="525.7" y="365.3" width="1" height="1.5"/><rect x="512.8" y="366.6" width="2" height="1"/><rect x="529.8" y="367.6" width="1" height="1.5"/><rect x="499.6" y="355.5" width="1" height="1.5"/><rect x="524.0" y="360.0" width="1.5" height="1.5"/><rect x="521.7" y="360.0" width="2" height="1"/><rect x="512.1" y="355.8" width="1" height="1.5"/><rect x="519.1" y="347.2" width="1" height="1.5"/><rect x="513.3" y="366.8" width="2" height="1"/><rect x="509.6" y="360.6" width="2" height="1"/><rect x="490.8" y="368.0" width="2" height="1"/><rect x="511.0" y="372.1" width="1.5" height="1.5"/><rect x="502.1" y="360.3" width="2" height="1.5"/><rect x="513.4" y="351.6" width="1" height="1"/><rect x="494.6" y="362.0" width="1" height="1"/><rect x="491.2" y="364.1" width="2" height="1"/><rect x="493.1" y="356.2" width="2" height="1"/><rect x="501.9" y="362.9" width="2" height="1"/><rect x="500.6" y="355.6" width="1" height="1"/><rect x="507.6" y="367.2" width="1" height="1"/><rect x="505.2" y="365.7" width="1" height="1"/><rect x="512.0" y="352.3" width="2" height="1"/><rect x="517.0" y="345.4" width="2" height="1.5"/><rect x="500.4" y="373.4" width="1.5" height="1"/><rect x="509.1" y="349.6" width="1.5" height="1"/><rect x="505.3" y="367.3" width="1" height="1"/><rect x="497.8" y="358.3" width="1.5" height="1.5"/><rect x="496.7" y="367.0" width="1.5" height="1"/><rect x="506.0" y="371.6" width="2" height="1"/><rect x="527.1" y="368.0" width="1.5" height="1"/><rect x="499.2" y="361.4" width="1.5" height="1.5"/><rect x="510.4" y="356.6" width="1" height="1"/><rect x="509.6" y="370.8" width="1" height="1"/><rect x="515.0" y="353.6" width="1" height="1"/><rect x="520.0" y="363.3" width="2" height="1"/><rect x="491.7" y="349.0" width="2" height="1.5"/><rect x="502.4" y="355.9" width="1" height="1.5"/><rect x="506.3" y="354.7" width="2" height="1.5"/><rect x="506.6" y="354.5" width="2" height="1"/><rect x="518.6" y="348.4" width="1.5" height="1"/><rect x="502.2" y="348.7" width="1" height="1"/><rect x="491.1" y="351.6" width="1" height="1"/><rect x="519.1" y="359.5" width="1" height="1.5"/><rect x="506.9" y="361.4" width="1.5" height="1"/><rect x="499.7" y="350.2" width="2" height="1"/><rect x="495.2" y="359.3" width="2" height="1"/><rect x="511.4" y="356.5" width="2" height="1"/><rect x="497.5" y="358.3" width="1" height="1.5"/><rect x="490.9" y="351.0" width="1" height="1.5"/><rect x="513.8" y="364.7" width="2" height="1"/><rect x="531.1" y="366.7" width="1.5" height="1"/><rect x="503.7" y="356.3" width="2" height="1"/><rect x="510.1" y="347.9" width="1" height="1"/><rect x="513.6" y="370.8" width="1" height="1"/><rect x="532.0" y="367.6" width="1.5" height="1"/><rect x="494.2" y="350.5" width="1.5" height="1.5"/><rect x="507.9" y="364.7" width="1" height="1"/><rect x="504.4" y="359.4" width="1" height="1.5"/><rect x="497.1" y="351.9" width="1" height="1"/><rect x="506.3" y="352.4" width="1.5" height="1"/><rect x="500.0" y="371.9" width="1" height="1"/><rect x="515.4" y="369.6" width="2" height="1"/><rect x="507.3" y="361.9" width="1" height="1"/><rect x="508.8" y="348.8" width="1.5" height="1.5"/><rect x="500.8" y="367.3" width="1.5" height="1"/><rect x="507.7" y="354.8" width="2" height="1"/><rect x="515.0" y="355.6" width="2" height="1.5"/><rect x="494.3" y="362.5" width="1" height="1"/><rect x="522.7" y="365.3" width="1.5" height="1.5"/><rect x="523.2" y="368.1" width="1" height="1"/><rect x="491.7" y="349.1" width="2" height="1"/><rect x="520.0" y="356.8" width="1" height="1"/><rect x="510.5" y="356.3" width="1" height="1.5"/><rect x="512.7" y="371.1" width="1" height="1"/><rect x="517.6" y="348.8" width="1" height="1"/><rect x="497.0" y="350.2" width="1" height="1"/><rect x="504.8" y="364.1" width="1" height="1.5"/><rect x="488.6" y="350.6" width="1.5" height="1"/><rect x="527.6" y="363.5" width="1.5" height="1.5"/><rect x="516.4" y="370.1" width="1" height="1"/><rect x="511.7" y="352.3" width="1" height="1.5"/><rect x="513.5" y="370.1" width="1.5" height="1"/><rect x="516.7" y="346.6" width="2" height="1"/><rect x="525.3" y="363.1" width="1.5" height="1"/><rect x="497.4" y="365.8" width="2" height="1"/><rect x="515.6" y="369.4" width="2" height="1.5"/><rect x="514.2" y="359.9" width="1.5" height="1.5"/><rect x="528.1" y="364.5" width="1" height="1.5"/><rect x="512.0" y="358.3" width="1" height="1.5"/><rect x="493.4" y="359.2" width="1.5" height="1"/><rect x="514.9" y="369.3" width="2" height="1.5"/><rect x="511.8" y="348.3" width="1" height="1"/><rect x="518.5" y="364.7" width="2" height="1"/><rect x="505.7" y="366.6" width="1" height="1.5"/><rect x="503.9" y="347.9" width="1" height="1"/><rect x="519.9" y="355.7" width="1.5" height="1.5"/><rect x="519.5" y="355.7" width="2" height="1.5"/><rect x="489.0" y="357.9" width="1" height="1"/><rect x="486.4" y="352.6" width="1" height="1"/><rect x="492.3" y="362.6" width="1.5" height="1"/><rect x="496.0" y="370.3" width="1" height="1.5"/><rect x="499.1" y="350.4" width="1" height="1"/><rect x="494.0" y="364.1" width="1" height="1"/><rect x="494.1" y="366.5" width="1" height="1.5"/><rect x="525.4" y="362.2" width="1" height="1"/><rect x="495.7" y="364.3" width="1" height="1.5"/><rect x="494.2" y="374.0" width="1.5" height="1"/><rect x="511.3" y="355.1" width="1" height="1"/><rect x="515.6" y="361.3" width="2" height="1.5"/><rect x="485.5" y="352.0" width="1" height="1.5"/><rect x="489.0" y="351.6" width="1" height="1.5"/><rect x="495.9" y="348.5" width="1" height="1"/><rect x="509.2" y="352.9" width="1" height="1"/><rect x="524.6" y="356.7" width="2" height="1.5"/><rect x="515.3" y="369.3" width="1" height="1"/><rect x="522.3" y="360.3" width="1" height="1"/><rect x="522.4" y="369.3" width="1" height="1"/><rect x="515.4" y="370.0" width="2" height="1.5"/><rect x="527.0" y="360.4" width="1" height="1"/><rect x="517.7" y="354.0" width="1.5" height="1"/><rect x="488.0" y="354.5" width="1" height="1.5"/><rect x="509.6" y="354.2" width="1" height="1"/><rect x="522.2" y="362.3" width="1.5" height="1.5"/><rect x="509.2" y="355.3" width="1" height="1.5"/><rect x="500.0" y="351.2" width="1" height="1.5"/><rect x="530.3" y="365.4" width="1.5" height="1"/><rect x="520.0" y="349.0" width="1" height="1"/><rect x="492.2" y="350.6" width="1.5" height="1"/><rect x="509.2" y="350.6" width="1" height="1.5"/><rect x="522.6" y="367.2" width="2" height="1"/><rect x="493.6" y="372.1" width="1.5" height="1"/><rect x="496.8" y="371.7" width="1.5" height="1"/><rect x="513.9" y="350.8" width="2" height="1"/><rect x="521.3" y="355.0" width="1" height="1"/><rect x="501.4" y="349.7" width="1" height="1"/><rect x="519.5" y="360.7" width="1" height="1"/><rect x="500.0" y="352.2" width="1" height="1.5"/><rect x="507.1" y="371.1" width="2" height="1"/><rect x="500.0" y="357.1" width="1" height="1"/><rect x="515.5" y="351.1" width="1" height="1"/><rect x="494.0" y="357.2" width="1" height="1"/><rect x="491.9" y="364.5" width="2" height="1"/><rect x="514.2" y="357.4" width="1" height="1"/><rect x="496.7" y="368.1" width="1.5" height="1"/><rect x="492.1" y="352.9" width="1" height="1"/><rect x="492.5" y="354.3" width="1" height="1.5"/><rect x="509.5" y="353.2" width="1.5" height="1"/><rect x="499.5" y="362.5" width="1" height="1"/><rect x="503.0" y="352.7" width="1" height="1"/><rect x="507.6" y="373.0" width="1.5" height="1"/><rect x="486.0" y="350.6" width="1" height="1.5"/><rect x="508.5" y="369.3" width="1.5" height="1"/><rect x="520.4" y="352.0" width="1.5" height="1"/><rect x="512.8" y="357.7" width="1" height="1"/><rect x="503.2" y="357.5" width="1.5" height="1"/><rect x="523.4" y="357.3" width="2" height="1"/><rect x="498.3" y="366.8" width="1.5" height="1.5"/><rect x="496.4" y="364.1" width="2" height="1"/><rect x="515.8" y="351.8" width="1" height="1"/><rect x="516.1" y="346.4" width="1.5" height="1"/><rect x="516.4" y="366.7" width="1.5" height="1"/><rect x="506.2" y="357.8" width="1" height="1"/><rect x="487.0" y="353.1" width="1" height="1.5"/><rect x="484.9" y="350.3" width="1.5" height="1.5"/><rect x="496.6" y="349.2" width="2" height="1"/><rect x="520.1" y="357.8" width="1.5" height="1"/><rect x="502.2" y="369.3" width="1.5" height="1"/><rect x="500.0" y="347.9" width="1" height="1"/><rect x="522.2" y="354.7" width="1" height="1"/><rect x="494.7" y="366.5" width="1" height="1.5"/><rect x="500.5" y="353.1" width="1" height="1"/><rect x="503.8" y="360.0" width="1" height="1"/><rect x="505.4" y="372.0" width="1" height="1"/><rect x="509.9" y="353.3" width="2" height="1"/><rect x="509.5" y="355.6" width="2" height="1"/><rect x="488.6" y="352.6" width="2" height="1"/><rect x="512.3" y="360.4" width="1" height="1"/><rect x="498.7" y="355.7" width="1.5" height="1"/><rect x="517.6" y="361.5" width="1.5" height="1"/><rect x="525.3" y="368.2" width="1" height="1"/><rect x="508.1" y="349.2" width="1" height="1"/><rect x="505.6" y="365.3" width="1" height="1"/><rect x="493.5" y="350.1" width="1" height="1"/><rect x="500.6" y="370.8" width="1" height="1.5"/><rect x="494.1" y="365.6" width="1" height="1"/><rect x="511.9" y="348.9" width="1.5" height="1.5"/><rect x="516.6" y="350.5" width="1" height="1"/><rect x="495.9" y="348.8" width="1.5" height="1"/><rect x="516.0" y="357.3" width="1" height="1"/><rect x="519.7" y="367.0" width="1" height="1"/><rect x="517.0" y="364.9" width="1" height="1"/><rect x="493.7" y="351.2" width="2" height="1"/><rect x="492.6" y="362.4" width="1" height="1"/><rect x="493.3" y="360.8" width="1" height="1"/><rect x="528.6" y="365.6" width="1" height="1"/><rect x="495.8" y="374.0" width="1.5" height="1.5"/><rect x="504.9" y="370.6" width="2" height="1"/><rect x="517.3" y="348.0" width="1" height="1.5"/><rect x="498.3" y="364.6" width="2" height="1"/><rect x="496.1" y="367.7" width="1" height="1"/><rect x="519.2" y="350.5" width="2" height="1"/><rect x="501.7" y="372.5" width="1" height="1.5"/><rect x="516.9" y="368.8" width="1.5" height="1.5"/><rect x="494.8" y="372.9" width="1" height="1"/><rect x="507.7" y="362.0" width="1.5" height="1.5"/><rect x="523.7" y="367.4" width="1.5" height="1"/><rect x="494.9" y="350.5" width="1" height="1"/><rect x="509.5" y="351.3" width="1" height="1.5"/><rect x="509.9" y="351.9" width="1.5" height="1"/><rect x="512.9" y="359.6" width="1.5" height="1"/><rect x="504.9" y="373.7" width="1" height="1"/><rect x="510.5" y="346.8" width="2" height="1.5"/><rect x="504.3" y="354.4" width="1" height="1"/><rect x="497.1" y="360.5" width="2" height="1"/><rect x="491.1" y="354.7" width="1" height="1"/><rect x="516.4" y="365.0" width="2" height="1"/><rect x="517.9" y="366.9" width="1" height="1.5"/><rect x="497.0" y="368.2" width="1" height="1.5"/><rect x="512.4" y="369.0" width="1" height="1"/><rect x="505.9" y="372.5" width="1" height="1"/><rect x="507.1" y="353.3" width="1" height="1"/><rect x="496.7" y="354.7" width="1" height="1"/><rect x="507.0" y="370.8" width="1" height="1.5"/><rect x="497.8" y="360.2" width="1.5" height="1"/><rect x="497.1" y="349.1" width="2" height="1"/><rect x="493.9" y="367.4" width="1" height="1"/><rect x="494.1" y="357.5" width="1" height="1"/><rect x="498.3" y="363.3" width="1" height="1"/><rect x="513.4" y="347.6" width="1.5" height="1.5"/><rect x="520.1" y="360.6" width="1.5" height="1"/><rect x="486.3" y="351.1" width="2" height="1"/><rect x="494.9" y="356.4" width="1" height="1"/><rect x="509.1" y="347.4" width="1" height="1"/><rect x="518.1" y="367.4" width="2" height="1"/><rect x="514.7" y="370.9" width="1" height="1"/><rect x="498.4" y="350.5" width="1.5" height="1.5"/><rect x="513.0" y="367.8" width="2" height="1"/><rect x="490.7" y="354.7" width="1" height="1"/><rect x="490.3" y="359.0" width="1" height="1.5"/><rect x="507.3" y="364.8" width="1.5" height="1"/><rect x="515.8" y="361.4" width="1" height="1.5"/><rect x="505.8" y="371.4" width="1" height="1"/><rect x="510.3" y="371.0" width="1.5" height="1"/><rect x="501.8" y="366.3" width="2" height="1"/><rect x="489.1" y="361.8" width="2" height="1"/><rect x="508.2" y="370.6" width="2" height="1.5"/><rect x="514.2" y="353.5" width="2" height="1.5"/><rect x="505.4" y="371.2" width="1" height="1.5"/><rect x="526.7" y="367.4" width="2" height="1"/><rect x="491.6" y="349.9" width="2" height="1.5"/><rect x="496.2" y="361.1" width="1" height="1"/><rect x="514.7" y="365.0" width="1.5" height="1"/><rect x="510.8" y="357.8" width="1" height="1.5"/><rect x="502.6" y="351.3" width="2" height="1"/><rect x="498.9" y="366.3" width="1" height="1.5"/><rect x="502.6" y="361.2" width="1" height="1.5"/><rect x="486.8" y="351.0" width="2" height="1.5"/><rect x="514.1" y="356.9" width="2" height="1"/><rect x="518.3" y="360.3" width="1" height="1"/><rect x="524.4" y="363.1" width="1" height="1.5"/><rect x="521.0" y="356.2" width="2" height="1"/><rect x="493.1" y="351.6" width="1" height="1"/><rect x="491.8" y="362.1" width="2" height="1"/><rect x="506.2" y="347.8" width="2" height="1.5"/><rect x="520.7" y="353.3" width="2" height="1"/><rect x="513.6" y="348.7" width="1" height="1"/><rect x="524.8" y="357.0" width="1.5" height="1"/><rect x="501.3" y="364.6" width="2" height="1"/><rect x="505.6" y="365.1" width="1.5" height="1"/><rect x="507.8" y="346.6" width="1.5" height="1.5"/><rect x="499.4" y="358.5" width="1" height="1"/><rect x="497.1" y="369.1" width="1" height="1.5"/><rect x="513.8" y="371.6" width="1.5" height="1"/><rect x="522.1" y="368.2" width="1" height="1"/><rect x="501.9" y="361.2" width="2" height="1.5"/><rect x="500.2" y="352.4" width="2" height="1"/><rect x="510.3" y="354.9" width="1.5" height="1"/><rect x="486.6" y="353.5" width="1" height="1"/><rect x="507.7" y="359.4" width="2" height="1"/><rect x="513.1" y="363.5" width="2" height="1"/><rect x="508.3" y="366.5" width="2" height="1"/><rect x="498.5" y="356.1" width="1" height="1.5"/><rect x="517.3" y="363.5" width="1" height="1"/><rect x="500.3" y="367.0" width="1.5" height="1.5"/><rect x="488.8" y="352.2" width="1.5" height="1"/><rect x="495.3" y="371.9" width="1" height="1"/><rect x="487.5" y="359.2" width="1.5" height="1.5"/><rect x="490.0" y="353.9" width="1" height="1"/><rect x="505.3" y="363.2" width="1" height="1.5"/><rect x="508.6" y="354.4" width="2" height="1"/><rect x="521.0" y="353.4" width="1" height="1"/><rect x="516.9" y="355.2" width="1.5" height="1.5"/><rect x="492.0" y="351.9" width="1" height="1"/><rect x="492.2" y="365.7" width="2" height="1"/><rect x="504.4" y="354.6" width="1.5" height="1"/><rect x="516.5" y="349.4" width="1" height="1"/><rect x="499.2" y="369.1" width="1" height="1.5"/><rect x="509.5" y="350.3" width="1.5" height="1"/><rect x="503.7" y="364.9" width="1" height="1"/><rect x="496.3" y="355.9" width="1" height="1.5"/><rect x="515.7" y="357.9" width="1" height="1.5"/><rect x="490.7" y="361.1" width="1.5" height="1"/><rect x="490.0" y="361.7" width="1" height="1"/><rect x="528.7" y="366.8" width="1.5" height="1"/><rect x="504.6" y="348.6" width="1" height="1"/><rect x="527.4" y="365.8" width="1.5" height="1"/><rect x="491.2" y="350.2" width="2" height="1"/><rect x="515.5" y="367.1" width="1" height="1.5"/><rect x="518.0" y="353.6" width="1.5" height="1"/><rect x="524.2" y="359.2" width="1" height="1"/><rect x="523.7" y="368.4" width="1" height="1"/><rect x="527.0" y="362.5" width="2" height="1"/><rect x="496.1" y="359.8" width="1.5" height="1.5"/><rect x="498.9" y="370.7" width="1" height="1"/><rect x="497.3" y="362.1" width="1.5" height="1"/><rect x="510.3" y="363.1" width="1" height="1"/><rect x="526.5" y="361.3" width="1" height="1"/><rect x="512.1" y="371.5" width="1" height="1"/><rect x="525.8" y="357.3" width="2" height="1"/><rect x="520.3" y="357.3" width="1" height="1"/><rect x="501.2" y="359.2" width="2" height="1"/><rect x="493.5" y="359.0" width="2" height="1"/><rect x="518.4" y="354.9" width="1.5" height="1.5"/><rect x="502.8" y="348.9" width="2" height="1"/><rect x="515.2" y="347.4" width="1.5" height="1"/><rect x="487.8" y="358.7" width="1" height="1"/><rect x="491.4" y="366.2" width="1.5" height="1"/><rect x="517.3" y="363.1" width="2" height="1"/><rect x="487.2" y="354.1" width="1" height="1"/><rect x="507.5" y="360.5" width="1" height="1"/><rect x="494.9" y="360.3" width="1" height="1.5"/><rect x="512.5" y="359.7" width="1.5" height="1.5"/><rect x="505.0" y="359.8" width="1.5" height="1"/><rect x="493.3" y="349.9" width="1.5" height="1"/><rect x="516.0" y="348.4" width="1.5" height="1"/><rect x="520.5" y="368.2" width="2" height="1"/><rect x="513.0" y="360.6" width="1" height="1"/><rect x="507.0" y="372.8" width="1" height="1"/><rect x="514.5" y="348.4" width="1.5" height="1.5"/><rect x="519.0" y="356.8" width="1" height="1.5"/><rect x="505.9" y="365.6" width="1.5" height="1.5"/><rect x="493.2" y="359.6" width="1" height="1"/><rect x="516.8" y="350.0" width="1.5" height="1"/><rect x="527.1" y="361.0" width="1" height="1"/><rect x="521.8" y="359.3" width="1" height="1"/><rect x="521.2" y="353.7" width="1" height="1"/><rect x="503.1" y="355.5" width="2" height="1.5"/><rect x="511.4" y="350.4" width="1" height="1.5"/><rect x="519.6" y="368.0" width="2" height="1"/><rect x="527.8" y="365.7" width="2" height="1"/><rect x="488.4" y="351.1" width="2" height="1.5"/><rect x="508.5" y="356.4" width="1" height="1.5"/><rect x="499.3" y="362.7" width="1" height="1"/><rect x="497.5" y="371.9" width="2" height="1.5"/><rect x="520.3" y="357.6" width="1" height="1"/><rect x="518.4" y="364.6" width="1" height="1"/><rect x="491.3" y="352.8" width="2" height="1.5"/><rect x="514.5" y="370.0" width="1" height="1.5"/><rect x="486.5" y="352.0" width="2" height="1"/><rect x="518.9" y="364.1" width="1" height="1"/><rect x="514.1" y="357.9" width="1" height="1"/><rect x="514.2" y="345.8" width="1.5" height="1.5"/><rect x="515.5" y="351.2" width="1" height="1"/><rect x="494.2" y="371.0" width="1" height="1"/><rect x="498.7" y="354.1" width="1" height="1"/><rect x="510.9" y="366.0" width="1" height="1"/><rect x="495.3" y="365.3" width="1" height="1"/><rect x="514.0" y="369.5" width="2" height="1.5"/><rect x="501.7" y="348.1" width="2" height="1"/><rect x="515.2" y="353.5" width="1" height="1.5"/><rect x="520.5" y="368.2" width="1" height="1"/><rect x="509.6" y="359.7" width="1" height="1"/><rect x="501.9" y="370.2" width="1" height="1"/><rect x="522.4" y="356.5" width="1" height="1"/><rect x="499.0" y="373.0" width="1.5" height="1"/><rect x="486.7" y="350.3" width="1.5" height="1"/><rect x="529.3" y="364.5" width="1" height="1"/><rect x="521.1" y="358.7" width="1" height="1"/><rect x="490.5" y="352.2" width="2" height="1"/><rect x="489.2" y="351.0" width="1" height="1.5"/><rect x="523.1" y="366.0" width="1.5" height="1"/><rect x="512.7" y="361.8" width="1" height="1"/><rect x="496.9" y="359.6" width="1.5" height="1.5"/><rect x="516.3" y="360.5" width="1" height="1"/><rect x="511.1" y="361.4" width="2" height="1"/><rect x="502.2" y="355.8" width="1.5" height="1"/><rect x="519.3" y="358.9" width="1" height="1.5"/><rect x="514.7" y="362.7" width="1.5" height="1"/><rect x="518.9" y="354.0" width="1" height="1.5"/><rect x="519.7" y="361.1" width="1" height="1"/><rect x="486.6" y="351.9" width="1.5" height="1.5"/><rect x="513.5" y="371.4" width="1" height="1.5"/><rect x="502.9" y="349.2" width="1" height="1"/><rect x="493.9" y="359.0" width="1" height="1"/><rect x="507.6" y="348.2" width="1" height="1.5"/><rect x="489.9" y="350.5" width="1" height="1.5"/><rect x="491.4" y="354.9" width="1.5" height="1.5"/><rect x="502.6" y="367.4" width="2" height="1"/><rect x="524.3" y="357.5" width="1" height="1"/><rect x="515.4" y="347.7" width="1" height="1"/><rect x="514.2" y="367.1" width="1.5" height="1"/><rect x="525.5" y="368.3" width="1.5" height="1.5"/><rect x="495.6" y="370.9" width="2" height="1"/><rect x="501.8" y="357.4" width="1" height="1"/><rect x="498.7" y="361.8" width="1" height="1"/><rect x="500.6" y="357.8" width="1" height="1.5"/><rect x="509.5" y="349.9" width="1" height="1"/><rect x="509.5" y="360.0" width="2" height="1.5"/><rect x="495.3" y="372.3" width="2" height="1"/><rect x="494.9" y="349.0" width="1" height="1.5"/><rect x="516.7" y="353.5" width="1" height="1.5"/><rect x="491.7" y="370.6" width="1" height="1.5"/><rect x="505.3" y="360.9" width="2" height="1.5"/><rect x="498.1" y="360.0" width="1.5" height="1"/><rect x="497.4" y="364.3" width="1" height="1.5"/><rect x="498.1" y="359.8" width="1" height="1"/><rect x="512.4" y="370.6" width="1" height="1"/><rect x="504.4" y="351.6" width="1" height="1.5"/><rect x="506.1" y="348.1" width="1.5" height="1"/><rect x="514.8" y="363.1" width="1.5" height="1"/><rect x="519.6" y="352.9" width="2" height="1.5"/><rect x="502.8" y="360.7" width="1.5" height="1.5"/><rect x="511.6" y="366.2" width="2" height="1"/><rect x="519.8" y="370.0" width="2" height="1"/><rect x="524.8" y="357.8" width="2" height="1"/><rect x="516.1" y="365.4" width="1" height="1"/><rect x="492.1" y="368.4" width="1.5" height="1"/><rect x="497.2" y="350.1" width="1" height="1"/><rect x="492.9" y="353.6" width="1" height="1"/><rect x="510.0" y="368.9" width="1" height="1.5"/><rect x="511.5" y="348.1" width="2" height="1"/><rect x="488.0" y="352.8" width="1" height="1.5"/><rect x="507.4" y="349.6" width="1.5" height="1"/><rect x="527.4" y="362.5" width="1" height="1"/><rect x="493.5" y="352.0" width="2" height="1"/><rect x="505.7" y="371.7" width="2" height="1"/><rect x="527.8" y="365.3" width="1" height="1.5"/><rect x="506.5" y="373.1" width="1" height="1.5"/><rect x="507.2" y="354.0" width="2" height="1.5"/><rect x="486.2" y="352.8" width="1.5" height="1"/><rect x="504.7" y="354.3" width="2" height="1"/><rect x="517.8" y="361.4" width="2" height="1.5"/><rect x="499.3" y="353.7" width="1" height="1.5"/><rect x="496.5" y="349.2" width="2" height="1"/><rect x="517.5" y="355.1" width="2" height="1"/><rect x="498.9" y="348.2" width="1.5" height="1"/><rect x="507.3" y="369.4" width="2" height="1"/><rect x="497.9" y="371.1" width="1.5" height="1.5"/><rect x="520.9" y="357.3" width="1" height="1"/><rect x="522.0" y="365.3" width="1" height="1"/><rect x="512.0" y="355.0" width="2" height="1"/><rect x="519.4" y="354.4" width="2" height="1"/><rect x="493.4" y="350.0" width="1.5" height="1.5"/><rect x="496.2" y="349.0" width="1" height="1"/><rect x="514.6" y="351.9" width="1" height="1"/><rect x="496.8" y="355.6" width="2" height="1.5"/><rect x="511.4" y="362.4" width="1" height="1"/><rect x="500.7" y="371.7" width="1.5" height="1"/><rect x="527.4" y="363.6" width="1.5" height="1.5"/><rect x="529.7" y="363.3" width="1" height="1.5"/><rect x="505.4" y="361.1" width="1" height="1"/><rect x="520.5" y="350.9" width="2" height="1"/><rect x="514.2" y="363.4" width="2" height="1"/><rect x="493.4" y="365.5" width="2" height="1.5"/><rect x="516.1" y="350.8" width="2" height="1"/><rect x="492.0" y="350.5" width="1" height="1"/><rect x="488.2" y="354.5" width="2" height="1.5"/><rect x="519.7" y="358.9" width="2" height="1.5"/><rect x="499.7" y="366.0" width="1" height="1"/><rect x="504.4" y="351.8" width="1" height="1"/><rect x="513.1" y="366.8" width="2" height="1"/><rect x="505.8" y="368.2" width="1" height="1"/><rect x="510.0" y="367.1" width="2" height="1"/><rect x="496.4" y="364.8" width="1" height="1"/><rect x="493.2" y="369.9" width="1.5" height="1"/><rect x="509.9" y="369.1" width="2" height="1"/><rect x="514.6" y="370.1" width="1" height="1"/><rect x="494.9" y="374.6" width="1" height="1"/><rect x="492.7" y="371.4" width="1" height="1.5"/><rect x="505.0" y="373.1" width="2" height="1"/><rect x="505.4" y="372.4" width="1" height="1"/><rect x="500.3" y="355.4" width="1" height="1"/><rect x="518.1" y="352.6" width="1" height="1.5"/><rect x="489.7" y="358.0" width="1" height="1"/><rect x="512.9" y="347.6" width="1" height="1.5"/><rect x="494.0" y="360.0" width="2" height="1"/><rect x="513.6" y="357.4" width="2" height="1.5"/><rect x="497.0" y="364.9" width="1" height="1"/><rect x="489.4" y="362.4" width="1.5" height="1"/><rect x="499.4" y="365.4" width="1" height="1"/><rect x="497.0" y="364.3" width="1.5" height="1"/><rect x="499.7" y="357.5" width="1.5" height="1"/><rect x="518.5" y="368.3" width="1.5" height="1"/><rect x="515.7" y="367.2" width="1" height="1.5"/><rect x="496.8" y="366.0" width="1" height="1"/><rect x="521.6" y="360.5" width="1.5" height="1.5"/><rect x="501.4" y="374.2" width="2" height="1"/><rect x="513.5" y="371.4" width="1" height="1.5"/><rect x="518.9" y="364.8" width="1" height="1"/><rect x="501.5" y="372.9" width="1" height="1"/><rect x="508.9" y="371.5" width="2" height="1"/><rect x="488.2" y="351.6" width="2" height="1"/><rect x="515.7" y="366.7" width="1.5" height="1.5"/><rect x="512.5" y="345.9" width="1.5" height="1.5"/><rect x="494.0" y="357.6" width="1" height="1"/><rect x="492.3" y="361.3" width="1.5" height="1"/><rect x="506.7" y="351.2" width="2" height="1"/><rect x="490.3" y="357.3" width="1.5" height="1"/><rect x="512.1" y="358.1" width="1.5" height="1"/><rect x="509.3" y="370.5" width="1" height="1"/><rect x="516.6" y="358.2" width="1" height="1"/><rect x="510.9" y="363.8" width="1.5" height="1.5"/><rect x="524.7" y="362.7" width="1" height="1"/><rect x="511.5" y="358.5" width="1" height="1"/><rect x="499.7" y="363.7" width="1.5" height="1"/><rect x="498.5" y="363.3" width="1.5" height="1"/><rect x="501.5" y="358.8" width="1" height="1"/><rect x="491.6" y="361.2" width="1.5" height="1"/><rect x="504.0" y="356.8" width="2" height="1.5"/><rect x="503.2" y="366.7" width="1" height="1"/><rect x="522.4" y="359.1" width="1" height="1"/><rect x="498.0" y="375.2" width="1" height="1"/><rect x="497.8" y="367.5" width="1.5" height="1"/><rect x="515.1" y="369.0" width="2" height="1"/><rect x="490.6" y="349.6" width="1" height="1.5"/><rect x="498.3" y="349.9" width="1" height="1"/><rect x="514.4" y="367.4" width="1.5" height="1"/><rect x="520.4" y="356.1" width="1" height="1.5"/><rect x="492.5" y="368.5" width="1" height="1"/><rect x="525.1" y="357.3" width="1" height="1"/><rect x="523.0" y="360.9" width="1" height="1"/><rect x="521.0" y="351.0" width="1" height="1"/><rect x="494.9" y="363.1" width="2" height="1"/><rect x="521.2" y="351.5" width="1" height="1"/><rect x="520.8" y="355.6" width="2" height="1"/><rect x="498.5" y="375.1" width="1" height="1.5"/><rect x="499.1" y="369.9" width="2" height="1"/><rect x="509.6" y="366.2" width="1" height="1"/><rect x="495.4" y="373.7" width="1.5" height="1"/><rect x="494.3" y="366.3" width="1.5" height="1"/><rect x="511.7" y="353.1" width="1" height="1"/><rect x="490.7" y="363.9" width="1.5" height="1.5"/><rect x="525.4" y="360.4" width="2" height="1"/><rect x="491.0" y="367.4" width="1.5" height="1"/><rect x="498.7" y="351.2" width="1.5" height="1"/><rect x="504.3" y="362.1" width="1" height="1"/><rect x="497.8" y="370.3" width="1" height="1"/><rect x="505.7" y="369.7" width="2" height="1"/><rect x="499.8" y="359.1" width="1" height="1"/><rect x="499.3" y="363.8" width="1.5" height="1.5"/><rect x="508.3" y="359.2" width="1.5" height="1"/><rect x="526.4" y="366.9" width="1" height="1"/><rect x="525.1" y="359.2" width="1.5" height="1"/><rect x="502.4" y="366.6" width="2" height="1.5"/><rect x="512.7" y="347.6" width="1" height="1"/><rect x="512.5" y="345.9" width="1" height="1"/><rect x="495.9" y="371.4" width="2" height="1"/><rect x="499.3" y="353.0" width="1" height="1"/><rect x="491.4" y="367.0" width="2" height="1"/><rect x="524.0" y="359.4" width="1" height="1"/><rect x="492.9" y="363.2" width="2" height="1"/><rect x="513.3" y="362.2" width="1" height="1"/><rect x="525.3" y="365.8" width="1" height="1.5"/><rect x="490.2" y="355.2" width="2" height="1.5"/><rect x="516.2" y="361.2" width="2" height="1"/><rect x="489.3" y="359.0" width="1.5" height="1"/><rect x="510.6" y="357.4" width="1.5" height="1.5"/><rect x="519.9" y="354.2" width="1" height="1"/><rect x="498.0" y="359.6" width="1.5" height="1.5"/><rect x="518.4" y="353.6" width="1" height="1"/><rect x="507.1" y="349.1" width="1" height="1"/><rect x="514.9" y="359.5" width="1.5" height="1"/><rect x="492.5" y="362.2" width="2" height="1"/><rect x="504.8" y="372.2" width="1" height="1"/><rect x="524.1" y="362.1" width="1" height="1"/><rect x="519.0" y="365.7" width="1" height="1.5"/><rect x="489.3" y="363.4" width="1" height="1"/><rect x="510.6" y="371.3" width="2" height="1"/><rect x="489.6" y="358.1" width="2" height="1"/><rect x="498.3" y="361.8" width="2" height="1"/><rect x="491.5" y="359.6" width="1" height="1"/><rect x="497.2" y="366.6" width="1" height="1"/><rect x="515.3" y="369.4" width="2" height="1"/><rect x="519.9" y="365.3" width="1" height="1.5"/><rect x="513.6" y="355.5" width="1" height="1.5"/><rect x="508.1" y="352.4" width="1" height="1"/><rect x="512.2" y="368.8" width="1" height="1"/><rect x="523.8" y="365.9" width="1" height="1"/><rect x="504.5" y="365.8" width="1" height="1.5"/><rect x="511.0" y="356.3" width="1" height="1"/><rect x="498.6" y="357.5" width="1" height="1"/></g>
<rect x="542.5" y="390" width="1" height="1" fill="#00ff00"/>
<rect x="556" y="410" width="1" height="1" fill="#00ff00"/>
<rect x="520" y="381" width="1" height="1" fill="#00ff00"/>
<rect x="549" y="398" width="1" height="1" fill="#00ff00"/>
<g fill="#ff0000"><rect x="614" y="259" width="1" height="1"/><rect x="529" y="301" width="1" height="2"/><rect x="539" y="297" width="3" height="1"/><rect x="525" y="285" width="1" height="1"/><rect x="532" y="286" width="2" height="1"/><rect x="527" y="311" width="2" height="1"/><rect x="560" y="277" width="2" height="1"/><rect x="515" y="296" width="1" height="2"/><rect x="547" y="298" width="3" height="1"/><rect x="488" y="292" width="2" height="1"/><rect x="569" y="268" width="2" height="1"/><rect x="502" y="316" width="2" height="1"/><rect x="507" y="295" width="1" height="1"/><rect x="640" y="266" width="3" height="1"/><rect x="548" y="297" width="2" height="2"/><rect x="586" y="290" width="2" height="1"/><rect x="500" y="290" width="2" height="1"/><rect x="498" y="310" width="3" height="2"/><rect x="632" y="281" width="2" height="2"/><rect x="677" y="247" width="2" height="1"/><rect x="487" y="303" width="2" height="2"/><rect x="567" y="287" width="1" height="1"/><rect x="703" y="250" width="2" height="2"/><rect x="525" y="308" width="3" height="1"/><rect x="522" y="306" width="3" height="1"/><rect x="529" y="297" width="3" height="2"/><rect x="534" y="309" width="1" height="1"/><rect x="541" y="282" width="2" height="2"/><rect x="481" y="291" width="3" height="1"/><rect x="554" y="301" width="1" height="2"/><rect x="700" y="245" width="3" height="2"/><rect x="565" y="288" width="1" height="1"/><rect x="593" y="273" width="1" height="2"/><rect x="485" y="323" width="3" height="2"/><rect x="573" y="272" width="1" height="1"/><rect x="534" y="298" width="3" height="1"/><rect x="508" y="314" width="2" height="1"/><rect x="496" y="317" width="3" height="2"/><rect x="505" y="292" width="2" height="1"/><rect x="584" y="268" width="1" height="1"/><rect x="502" y="298" width="1" height="1"/><rect x="515" y="289" width="1" height="1"/><rect x="578" y="298" width="2" height="2"/><rect x="502" y="314" width="2" height="1"/><rect x="481" y="300" width="1" height="1"/><rect x="577" y="287" width="1" height="2"/><rect x="559" y="294" width="3" height="1"/><rect x="565" y="299" width="1" height="2"/><rect x="588" y="275" width="1" height="1"/><rect x="484" y="302" width="3" height="1"/><rect x="536" y="293" width="2" height="1"/><rect x="525" y="298" width="2" height="1"/><rect x="588" y="270" width="1" height="2"/><rect x="548" y="298" width="1" height="1"/><rect x="505" y="308" width="1" height="1"/><rect x="498" y="299" width="1" height="2"/><rect x="522" y="312" width="3" height="1"/><rect x="498" y="286" width="2" height="2"/><rect x="516" y="295" width="2" height="1"/><rect x="613" y="279" width="3" height="1"/><rect x="505" y="309" width="1" height="2"/><rect x="492" y="313" width="2" height="1"/><rect x="518" y="310" width="3" height="1"/><rect x="552" y="300" width="1" height="2"/><rect x="601" y="281" width="3" height="2"/><rect x="524" y="307" width="2" height="1"/><rect x="494" y="299" width="3" height="1"/><rect x="563" y="286" width="2" height="2"/><rect x="509" y="290" width="2" height="2"/><rect x="492" y="286" width="1" height="1"/><rect x="482" y="323" width="3" height="1"/><rect x="480" y="297" width="2" height="1"/><rect x="499" y="307" width="2" height="1"/><rect x="527" y="312" width="3" height="2"/><rect x="693" y="260" width="1" height="2"/><rect x="605" y="291" width="1" height="1"/><rect x="532" y="310" width="1" height="1"/><rect x="576" y="268" width="1" height="1"/><rect x="624" y="273" width="2" height="1"/><rect x="551" y="303" width="1" height="1"/><rect x="561" y="270" width="1" height="1"/><rect x="488" y="303" width="2" height="1"/><rect x="548" y="285" width="3" height="1"/><rect x="565" y="295" width="1" height="1"/><rect x="547" y="283" width="1" height="1"/><rect x="603" y="287" width="1" height="2"/><rect x="502" y="298" width="1" height="1"/><rect x="549" y="281" width="1" height="2"/><rect x="627" y="283" width="2" height="1"/><rect x="585" y="285" width="1" height="1"/><rect x="604" y="264" width="1" height="1"/><rect x="549" y="279" width="1" height="2"/><rect x="497" y="295" width="1" height="2"/><rect x="690" y="265" width="1" height="1"/><rect x="500" y="311" width="2" height="1"/><rect x="514" y="315" width="2" height="2"/><rect x="497" y="308" width="1" height="1"/><rect x="524" y="310" width="3" height="2"/><rect x="493" y="298" width="1" height="1"/><rect x="566" y="270" width="2" height="1"/><rect x="499" y="299" width="2" height="2"/><rect x="489" y="295" width="3" height="2"/><rect x="688" y="257" width="2" height="2"/><rect x="574" y="285" width="1" height="1"/><rect x="497" y="306" width="2" height="1"/><rect x="592" y="269" width="1" height="2"/><rect x="645" y="273" width="1" height="2"/><rect x="544" y="275" width="2" height="1"/><rect x="489" y="319" width="1" height="2"/><rect x="536" y="307" width="1" height="2"/><rect x="598" y="287" width="1" height="1"/><rect x="480" y="298" width="1" height="1"/><rect x="544" y="304" width="1" height="2"/><rect x="565" y="272" width="1" height="2"/><rect x="503" y="312" width="2" height="1"/><rect x="501" y="309" width="2" height="2"/><rect x="627" y="259" width="1" height="1"/><rect x="609" y="265" width="2" height="1"/><rect x="561" y="294" width="2" height="1"/><rect x="517" y="310" width="1" height="1"/><rect x="519" y="312" width="3" height="2"/><rect x="664" y="265" width="3" height="1"/><rect x="609" y="284" width="1" height="1"/><rect x="553" y="299" width="3" height="1"/><rect x="668" y="260" width="1" height="2"/><rect x="650" y="274" width="3" height="1"/><rect x="524" y="307" width="2" height="1"/><rect x="588" y="265" width="1" height="2"/><rect x="588" y="286" width="1" height="1"/><rect x="503" y="293" width="1" height="1"/><rect x="584" y="287" width="2" height="1"/><rect x="594" y="291" width="2" height="2"/></g>
</svg>
<!-- run window -->
<div class="a" style="left:257px;top:448.7px;width:764px;height:14.4px;background:#d3d7de"></div>
<svg style="left:0;top:0" width="1024" height="553">
 <rect x="1016.2" y="454.2" width="3.4" height="2.8" rx="0.6" fill="#d3d7de" stroke="#222" stroke-width="0.8"/><rect x="1014.9" y="455.7" width="3.4" height="2.8" rx="0.6" fill="#d3d7de" stroke="#222" stroke-width="0.8"/>
</svg>
<div class="a" style="left:257px;top:463.1px;width:764px;height:61px;background:#f0f0f0"></div>
<div class="a" style="left:257px;top:463.1px;width:443.5px;height:60.8px;background:#fff;border-left:1px solid #c9ced3;border-right:1px solid #d0d4d8"></div>
<div class="a" style="left:703.5px;top:463.3px;width:315.5px;height:60.7px;background:#fff;border:1px solid #c4c8cc"></div>
<div class="a" style="left:323.6px;top:485px;width:349.1px;height:14.5px;background:#e6e6e6;border:1px solid #d8d8d8"></div>
<div class="a" style="left:323.6px;top:506.2px;width:349.1px;height:14.3px;background:#e6e6e6;border:1px solid #d8d8d8"></div>
<div class="a" style="left:256.7px;top:525.6px;width:40.5px;height:11.4px;background:#fff;border-bottom:1px solid #d4d6d8;border-left:1px solid #e0e2e4"></div>
<!-- status bar -->
<div class="a" style="left:0;top:538.6px;width:1024px;height:15px;background:#bcc2c5"></div>
<div class="t" style="left:1.80px;top:5px;font:bold 9.3px 'Liberation Sans';line-height:1;color:#eef1f4;transform:scaleX(0.969)">Slam Go Post Pro</div>
<div class="t" style="left:26.00px;top:22px;font:normal 7.7px 'Liberation Sans';line-height:1;color:#2f84a0;transform:scaleX(0.912)">Start</div>
<div class="t" style="left:64.00px;top:22px;font:normal 7.7px 'Liberation Sans';line-height:1;color:#c9d2dc;transform:scaleX(0.928)">View</div>
<div class="t" style="left:8.80px;top:56px;font:normal 7.5px 'Liberation Sans';line-height:1;color:#3c4754;transform:scaleX(0.956)">New</div>
<div class="t" style="left:36.90px;top:56px;font:normal 7.5px 'Liberation Sans';line-height:1;color:#3c4754;transform:scaleX(0.996)">Open</div>
<div class="t" style="left:65.90px;top:56px;font:normal 7.5px 'Liberation Sans';line-height:1;color:#3c4754;transform:scaleX(0.907)">Save</div>
<div class="t" style="left:92.50px;top:56px;font:normal 7.5px 'Liberation Sans';line-height:1;color:#3c4754;transform:scaleX(0.921)">Close</div>
<div class="t" style="left:119.70px;top:56px;font:normal 7.5px 'Liberation Sans';line-height:1;color:#3c4754;transform:scaleX(0.989)">One-click solve</div>
<div class="t" style="left:175.60px;top:56px;font:normal 7.5px 'Liberation Sans';line-height:1;color:#3c4754;transform:scaleX(0.969)">Batch solve</div>
<div class="t" style="left:220.60px;top:56px;font:normal 7.5px 'Liberation Sans';line-height:1;color:#3c4754;transform:scaleX(0.959)">Create map</div>
<div class="t" style="left:264.70px;top:56px;font:normal 7.5px 'Liberation Sans';line-height:1;color:#3c4754;transform:scaleX(1.008)">Orientation</div>
<div class="t" style="left:307.70px;top:56px;font:normal 7.5px 'Liberation Sans';line-height:1;color:#3c4754;transform:scaleX(1.014)">Optimization</div>
<div class="t" style="left:356.00px;top:56px;font:normal 7.5px 'Liberation Sans';line-height:1;color:#3c4754;transform:scaleX(1.004)">Dedistortion</div>
<div class="t" style="left:402.50px;top:56px;font:normal 7.5px 'Liberation Sans';line-height:1;color:#3c4754;transform:scaleX(0.991)">Texture</div>
<div class="t" style="left:433.00px;top:56px;font:normal 7.5px 'Liberation Sans';line-height:1;color:#3c4754;transform:scaleX(0.920)">Panorama</div>
<div class="t" style="left:473.90px;top:56px;font:normal 7.5px 'Liberation Sans';line-height:1;color:#3c4754;transform:scaleX(0.929)">Denoise</div>
<div class="t" style="left:506.90px;top:56px;font:normal 7.5px 'Liberation Sans';line-height:1;color:#3c4754;transform:scaleX(0.921)">Frame</div>
<div class="t" style="left:533.00px;top:56px;font:normal 7.5px 'Liberation Sans';line-height:1;color:#3c4754;transform:scaleX(0.984)">Registration</div>
<div class="t" style="left:583.30px;top:56px;font:normal 7.5px 'Liberation Sans';line-height:1;color:#3c4754;transform:scaleX(0.930)">Cut</div>
<div class="t" style="left:609.70px;top:56px;font:normal 7.5px 'Liberation Sans';line-height:1;color:#3c4754;transform:scaleX(0.916)">Rinex</div>
<div class="t" style="left:640.20px;top:56px;font:normal 7.5px 'Liberation Sans';line-height:1;color:#3c4754;transform:scaleX(0.853)">PPK</div>
<div class="t" style="left:664.80px;top:56px;font:normal 7.5px 'Liberation Sans';line-height:1;color:#3c4754;transform:scaleX(0.922)">Report</div>
<div class="t" style="left:692.80px;top:56px;font:normal 7.5px 'Liberation Sans';line-height:1;color:#3c4754;transform:scaleX(0.912)">Cancel</div>
<div class="t" style="left:46.25px;top:71px;font:normal 7.5px 'Liberation Sans';line-height:1;color:#3c4754;transform:scaleX(0.938)">Project</div>
<div class="t" style="left:404.60px;top:71px;font:normal 7.5px 'Liberation Sans';line-height:1;color:#3c4754;transform:scaleX(0.903)">Process</div>
<div class="t" style="left:7.90px;top:85px;font:normal 7.6px 'Liberation Sans';line-height:1;color:#3a4656;transform:scaleX(0.951)">DataManager</div>
<div class="t" style="left:23.90px;top:98px;font:bold 7.1px 'Liberation Sans';line-height:1;color:#3389a3;transform:scaleX(1.012)">g1(Processed)</div>
<div class="t" style="left:34.60px;top:109px;font:bold 7.1px 'Liberation Sans';line-height:1;color:#3389a3;transform:scaleX(1.008)">LiDAR Data</div>
<div class="t" style="left:45.00px;top:120px;font:normal 7.1px 'Liberation Sans';line-height:1;color:#1e2944;transform:scaleX(1.069)">optimised_2024-04-24_15-32-41_368</div>
<div class="t" style="left:45.00px;top:131px;font:normal 7.1px 'Liberation Sans';line-height:1;color:#1e2944;transform:scaleX(1.050)">(View)optimize_optimised_2024-04-24_15-32-41_368</div>
<div class="t" style="left:34.40px;top:143px;font:bold 7.1px 'Liberation Sans';line-height:1;color:#3389a3;transform:scaleX(1.071)">Odom Data</div>
<div class="t" style="left:34.40px;top:154px;font:bold 7.1px 'Liberation Sans';line-height:1;color:#3389a3;transform:scaleX(1.064)">Vector Data</div>
<div class="t" style="left:34.40px;top:165px;font:bold 7.1px 'Liberation Sans';line-height:1;color:#3389a3;transform:scaleX(1.051)">Control Data</div>
<div class="t" style="left:34.40px;top:176px;font:bold 7.1px 'Liberation Sans';line-height:1;color:#3389a3;transform:scaleX(1.016)">POS Data</div>
<div class="t" style="left:23.40px;top:187px;font:normal 7.1px 'Liberation Sans';line-height:1;color:#33363b;transform:scaleX(0.999)">g2(Processed)</div>
<div class="t" style="left:34.40px;top:198px;font:normal 7.1px 'Liberation Sans';line-height:1;color:#33363b;transform:scaleX(0.981)">LiDAR Data</div>
<div class="t" style="left:45.00px;top:210px;font:normal 7.1px 'Liberation Sans';line-height:1;color:#1e2944;transform:scaleX(1.069)">optimised_2024-04-24_15-32-41_368</div>
<div class="t" style="left:45.00px;top:221px;font:normal 7.1px 'Liberation Sans';line-height:1;color:#1e2944;transform:scaleX(1.050)">(View)optimize_optimised_2024-04-24_15-32-41_368</div>
<div class="t" style="left:34.40px;top:232px;font:normal 7.1px 'Liberation Sans';line-height:1;color:#33363b;transform:scaleX(1.035)">Odom Data</div>
<div class="t" style="left:34.40px;top:243px;font:normal 7.1px 'Liberation Sans';line-height:1;color:#33363b;transform:scaleX(1.048)">Vector Data</div>
<div class="t" style="left:34.40px;top:254px;font:normal 7.1px 'Liberation Sans';line-height:1;color:#33363b;transform:scaleX(1.043)">Control Data</div>
<div class="t" style="left:34.40px;top:266px;font:normal 7.1px 'Liberation Sans';line-height:1;color:#33363b;transform:scaleX(0.988)">POS Data</div>
<div class="t" style="left:258.00px;top:470px;font:normal 7.5px 'Liberation Sans';line-height:1;color:#243248;transform:scaleX(1.009)">Current Status:</div>
<div class="t" style="left:258.00px;top:490px;font:normal 7.5px 'Liberation Sans';line-height:1;color:#243248;transform:scaleX(0.985)">Current Progress:</div>
<div class="t" style="left:258.00px;top:510px;font:normal 7.5px 'Liberation Sans';line-height:1;color:#243248;transform:scaleX(0.973)">Sum Progress:</div>
<div class="t" style="left:677.90px;top:490px;font:normal 7.5px 'Liberation Sans';line-height:1;color:#243248;transform:scaleX(0.976)">0%</div>
<div class="t" style="left:677.90px;top:510px;font:normal 7.5px 'Liberation Sans';line-height:1;color:#243248;transform:scaleX(1.014)">0/1</div>
<div class="t" style="left:706.40px;top:466px;font:normal 7.0px 'Liberation Sans';line-height:1;color:#243248;transform:scaleX(0.986)">[10:41:32] Open the project successfully!</div>
<div class="t" style="left:706.40px;top:476px;font:normal 7.0px 'Liberation Sans';line-height:1;color:#243248;transform:scaleX(0.986)">[10:41:36] Open the project successfully!</div>
<div class="t" style="left:263.80px;top:455px;font:bold 6.6px 'Liberation Mono';line-height:1;color:#26344a;transform:scaleX(0.945)">RunWindow</div>
<div class="t" style="left:262.60px;top:530px;font:bold 6.3px 'Liberation Mono';line-height:1;color:#2a7088;transform:scaleX(0.830)">RunWindow</div>
<!-- dialog -->
<div class="a" style="left:126px;top:144px;width:288.7px;height:294.4px;background:#f0f0f0"></div>
<div class="a" style="left:126px;top:144px;width:288.7px;height:13.2px;background:#8b9da4"></div>
<div class="a" style="left:190.5px;top:163.4px;width:198.3px;height:13.4px;background:#e5e5e5;border:1px solid #c2c2c2"></div>
<div class="a" style="left:392.1px;top:165px;width:17.1px;height:9.9px;background:#ff0000"></div>
<div class="a" style="left:132.6px;top:181px;width:255.3px;height:9.8px;background:#dde1e6"></div>
<div class="a" style="left:132.6px;top:190.8px;width:255.3px;height:68.1px;background:#fff"></div>
<div class="a" style="left:192.2px;top:262.3px;width:196.4px;height:14.6px;background:#e5e5e5;border:1px solid #c2c2c2"></div>
<div class="a" style="left:392.1px;top:262.4px;width:17px;height:14.1px;background:#00ff00"></div>
<div class="a" style="left:132.6px;top:280.4px;width:255.3px;height:10.3px;background:#dde1e6"></div>
<div class="a" style="left:132.6px;top:290.7px;width:255.3px;height:67.1px;background:#fff"></div>
<div class="a" style="left:132.2px;top:365.5px;width:276.7px;height:37.7px;border:1px solid #dadada"></div>
<div class="a" style="left:135.5px;top:362px;width:77px;height:6px;background:#f0f0f0"></div>
<div class="spin" style="left:207.2px;top:370px;width:56.1px;height:14.9px"><div class="ar" style="width:10.6px;height:12.9px"></div></div>
<div class="spin" style="left:207.2px;top:388px;width:56.1px;height:14.5px"><div class="ar" style="width:10.6px;height:12.5px"></div></div>
<div class="spin" style="left:342.2px;top:370px;width:55.7px;height:14.5px"><div class="ar" style="width:10.4px;height:12.5px"></div></div>
<div class="spin" style="left:342.2px;top:388.3px;width:55.7px;height:14.5px"><div class="ar" style="width:10.4px;height:12.5px"></div></div>
<div class="btn" style="left:271.2px;top:408.1px;width:44px;height:13.5px"></div>
<div class="btn" style="left:318.5px;top:408.1px;width:43.5px;height:13.5px"></div>
<div class="btn" style="left:365.4px;top:408.1px;width:43.5px;height:13.5px"></div>
<svg style="left:0;top:0" width="1024" height="553">
 <!-- logo -->
 <path d="M136.8 144.6 v5.6 l6.9 -3 z" fill="none" stroke="#22a0f0" stroke-width="1.3" stroke-linejoin="round"/>
 <path d="M130.2 147 v10 h13.3 v-5 l-6.8 1.6 l-6.5 -6.6z" fill="none" stroke="#1a80d8" stroke-width="1.4" stroke-linejoin="round"/>
 <path d="M131 156 l5.7 -2.5 l6.5 2.5" fill="none" stroke="#1a70c8" stroke-width="1.1"/>
 <path d="M404.3 147.6 l5.6 5.6 M409.9 147.6 l-5.6 5.6" stroke="#4a525c" stroke-width="0.95"/>
 <!-- side icons table1 -->
 <path d="M400.5 183 v5 M398 185.5 h5" stroke="#4aaac4" stroke-width="0.75"/>
 <rect x="398.6" y="196.2" width="3.8" height="6" fill="#f29a5a"/><rect x="398.1" y="195.2" width="4.8" height="1" fill="#f29a5a"/><rect x="399.6" y="194.4" width="1.8" height="0.8" fill="#f29a5a"/>
 <rect x="398.8" y="209" width="3.4" height="5.6" fill="none" stroke="#6ab4cc" stroke-width="0.65"/>
 <path d="M398 222.5 h2.5 l1 1 h3 v4.5 h-6.5z" fill="#34a8cc"/>
 <!-- side icons table2 -->
 <path d="M400.6 282.2 v5 M398.1 284.7 h5" stroke="#4aaac4" stroke-width="0.75"/>
 <rect x="398.6" y="295.2" width="3.8" height="6" fill="#f29a5a"/><rect x="398.1" y="294.2" width="4.8" height="1" fill="#f29a5a"/><rect x="399.6" y="293.4" width="1.8" height="0.8" fill="#f29a5a"/>
 <rect x="398.8" y="308" width="3.4" height="5.6" fill="none" stroke="#6ab4cc" stroke-width="0.65"/>
 <path d="M398 321.5 h2.5 l1 1 h3 v4.5 h-6.5z" fill="#34a8cc"/>
 <!-- combo arrows -->
 <path d="M382 169.3 h3.6 l-1.8 2z" fill="#1a2a48"/>
 <path d="M382.1 268.4 h3.6 l-1.8 2z" fill="#1a2a48"/>
 <!-- spin arrows -->
 <g fill="#222">
  <path d="M255.8 375.2 h3 l-1.5 -1.6z"/><path d="M255.8 379.4 h3 l-1.5 1.6z"/>
  <path d="M255.8 393.2 h3 l-1.5 -1.6z"/><path d="M255.8 397.2 h3 l-1.5 1.6z"/>
  <path d="M390.5 375.2 h3 l-1.5 -1.6z"/><path d="M390.5 379.4 h3 l-1.5 1.6z"/>
  <path d="M390.5 393.4 h3 l-1.5 -1.6z"/><path d="M390.5 397.4 h3 l-1.5 1.6z"/>
 </g>
 <g stroke="#c8c8c8" stroke-width="0.6"><line x1="253" y1="377.4" x2="262" y2="377.4"/><line x1="253" y1="395.2" x2="262" y2="395.2"/><line x1="388" y1="377.3" x2="397" y2="377.3"/><line x1="388" y1="395.5" x2="397" y2="395.5"/></g>
 <!-- checkbox -->
 <rect x="249.3" y="412" width="6.1" height="6" fill="#3aabbf"/>
 <path d="M250.6 415 l1.5 1.6 l2.3 -2.9" stroke="#fff" stroke-width="0.8" fill="none"/>
</svg>
<div class="t" style="left:147.70px;top:148px;font:normal 7.8px 'Liberation Sans';line-height:1;color:#f2f5f7;transform:scaleX(0.890)">Registor</div>
<div class="t" style="left:132.00px;top:168px;font:normal 7.3px 'Liberation Sans';line-height:1;color:#243049;transform:scaleX(0.905)">Base</div>
<div class="t" style="left:170.70px;top:168px;font:normal 7.3px 'Liberation Sans';line-height:1;color:#243049;transform:scaleX(0.936)">Data:</div>
<div class="t" style="left:192.90px;top:168px;font:normal 7.5px 'Liberation Sans';line-height:1;color:#243049;transform:scaleX(1.005)">optimize_optimised_2024-04-24_15-32-41_368</div>
<div class="t" style="left:145.00px;top:184px;font:normal 7.3px 'Liberation Sans';line-height:1;color:#243049;transform:scaleX(1.025)">ID</div>
<div class="t" style="left:192.40px;top:184px;font:normal 7.3px 'Liberation Sans';line-height:1;color:#243049;transform:scaleX(0.820)">X</div>
<div class="t" style="left:253.30px;top:184px;font:normal 7.3px 'Liberation Sans';line-height:1;color:#243049;transform:scaleX(1.080)">Y</div>
<div class="t" style="left:313.10px;top:184px;font:normal 7.3px 'Liberation Sans';line-height:1;color:#243049;transform:scaleX(0.800)">Z</div>
<div class="t" style="left:355.90px;top:184px;font:normal 7.3px 'Liberation Sans';line-height:1;color:#243049;transform:scaleX(0.847)">ERROR</div>
<div class="t" style="left:145.00px;top:283px;font:normal 7.3px 'Liberation Sans';line-height:1;color:#243049;transform:scaleX(1.025)">ID</div>
<div class="t" style="left:192.40px;top:283px;font:normal 7.3px 'Liberation Sans';line-height:1;color:#243049;transform:scaleX(0.820)">X</div>
<div class="t" style="left:253.30px;top:283px;font:normal 7.3px 'Liberation Sans';line-height:1;color:#243049;transform:scaleX(1.080)">Y</div>
<div class="t" style="left:313.10px;top:283px;font:normal 7.3px 'Liberation Sans';line-height:1;color:#243049;transform:scaleX(0.800)">Z</div>
<div class="t" style="left:355.90px;top:283px;font:normal 7.3px 'Liberation Sans';line-height:1;color:#243049;transform:scaleX(0.847)">ERROR</div>
<div class="t" style="left:132.00px;top:267px;font:normal 7.4px 'Liberation Sans';line-height:1;color:#243049;transform:scaleX(0.994)">Registration data:</div>
<div class="t" style="left:194.80px;top:267px;font:normal 7.5px 'Liberation Sans';line-height:1;color:#243049;transform:scaleX(0.997)">optimize_optimised_2024-04-24_16-08-30_731</div>
<div class="t" style="left:137.70px;top:363px;font:bold 5.6px 'Liberation Mono';line-height:1;color:#26344a;transform:scaleX(0.942)">Registration parameters</div>
<div class="t" style="left:134.00px;top:375px;font:normal 7.4px 'Liberation Sans';line-height:1;color:#243049;transform:scaleX(0.937)">Grid size:</div>
<div class="t" style="left:134.00px;top:393px;font:normal 7.4px 'Liberation Sans';line-height:1;color:#243049;transform:scaleX(1.021)">Number of iterations:</div>
<div class="t" style="left:276.50px;top:375px;font:normal 7.4px 'Liberation Sans';line-height:1;color:#243049;transform:scaleX(0.989)">Distance threshold:</div>
<div class="t" style="left:276.50px;top:393px;font:normal 7.4px 'Liberation Sans';line-height:1;color:#243049;transform:scaleX(1.000)">Iteration distance:</div>
<div class="t" style="left:208.80px;top:375px;font:normal 7.4px 'Liberation Sans';line-height:1;color:#243049;transform:scaleX(1.016)">0.50</div>
<div class="t" style="left:208.80px;top:393px;font:normal 7.4px 'Liberation Sans';line-height:1;color:#243049;transform:scaleX(1.023)">20</div>
<div class="t" style="left:343.90px;top:375px;font:normal 7.4px 'Liberation Sans';line-height:1;color:#243049;transform:scaleX(1.033)">2.0</div>
<div class="t" style="left:343.90px;top:393px;font:normal 7.4px 'Liberation Sans';line-height:1;color:#243049;transform:scaleX(1.027)">0.0010</div>
<div class="t" style="left:266.80px;top:375px;font:normal 7.4px 'Liberation Sans';line-height:1;color:#243049;transform:scaleX(1.033)">m</div>
<div class="t" style="left:401.20px;top:375px;font:normal 7.4px 'Liberation Sans';line-height:1;color:#243049;transform:scaleX(0.983)">m</div>
<div class="t" style="left:401.20px;top:393px;font:normal 7.4px 'Liberation Sans';line-height:1;color:#243049;transform:scaleX(0.983)">m</div>
<div class="t" style="left:131.70px;top:412px;font:normal 7.4px 'Liberation Sans';line-height:1;color:#243049;transform:scaleX(0.950)">RMS:</div>
<div class="t" style="left:258.40px;top:414px;font:bold 6.0px 'Liberation Mono';line-height:1;color:#26344a;transform:scaleX(0.857)">ICP</div>
<div class="t" style="left:286.70px;top:412px;font:normal 7.4px 'Liberation Sans';line-height:1;color:#eef8fa;transform:scaleX(0.897)">Pick</div>
<div class="t" style="left:326.90px;top:412px;font:normal 7.4px 'Liberation Sans';line-height:1;color:#eef8fa;transform:scaleX(1.011)">Convert</div>
<div class="t" style="left:376.10px;top:412px;font:normal 7.4px 'Liberation Sans';line-height:1;color:#eef8fa;transform:scaleX(0.942)">Cancel</div>
<div class="t" style="left:132.10px;top:426px;font:normal 7.0px 'Liberation Sans';line-height:1;color:#243049;transform:scaleX(0.914)">Tip: hold down the Ctrl key when picking points</div>
</body></html>
